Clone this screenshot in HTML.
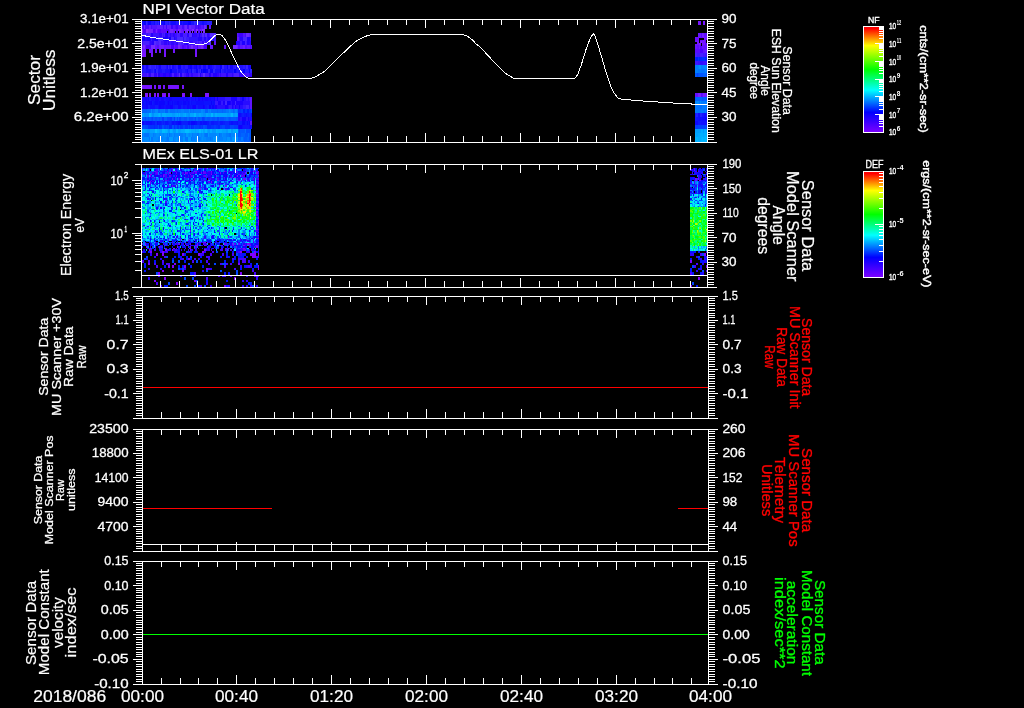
<!DOCTYPE html>
<html lang="en"><head><meta charset="utf-8"><title>MEx ASPERA-3 summary plot 2018/086</title>
<style>
html,body{margin:0;padding:0;background:#000;}
body{width:1024px;height:708px;overflow:hidden;}
svg{display:block;will-change:transform;}
text{white-space:pre;}
</style></head><body>
<svg width="1024" height="708" viewBox="0 0 1024 708">
<rect width="1024" height="708" fill="#000"/>
<g shape-rendering="crispEdges" fill="none">
<path stroke="#1c14ff" stroke-width="4.00" d="M142.0 23.00H211.7"/>
<path stroke="#120aff" stroke-width="4.00" d="M142.0 23.00h2.0M154.0 23.00h1.0M161.0 23.00h3.0M171.0 23.00h2.0M173.0 23.00h3.0M179.0 23.00h3.0M183.0 23.00h2.0M185.0 23.00h3.0M202.0 23.00h1.0M203.0 23.00h1.0"/>
<path stroke="#0901ff" stroke-width="4.00" d="M144.0 23.00h2.0M148.0 23.00h3.0M159.0 23.00h2.0M164.0 23.00h1.0M188.0 23.00h3.0"/>
<path stroke="#2e26ff" stroke-width="4.00" d="M146.0 23.00h1.0M158.0 23.00h1.0M169.0 23.00h1.0M194.0 23.00h2.0"/>
<path stroke="#251dff" stroke-width="4.00" d="M155.0 23.00h2.0M165.0 23.00h3.0M198.0 23.00h2.0M207.0 23.00h3.0M210.0 23.00h1.7"/>
<path stroke="#5414ff" stroke-width="4.00" d="M142.0 27.00H207.4"/>
<path stroke="#4909ff" stroke-width="4.00" d="M142.0 27.00h2.0M145.0 27.00h2.0M147.0 27.00h2.0M151.0 27.00h1.0M163.0 27.00h1.0M175.0 27.00h1.0M182.0 27.00h2.0M187.0 27.00h2.0M195.0 27.00h1.0M196.0 27.00h1.0M199.0 27.00h2.0M203.0 27.00h1.0"/>
<path stroke="#6929ff" stroke-width="4.00" d="M144.0 27.00h1.0M185.0 27.00h2.0M189.0 27.00h2.0M204.0 27.00h2.0"/>
<path stroke="#5e1eff" stroke-width="4.00" d="M149.0 27.00h2.0M157.0 27.00h3.0M160.0 27.00h3.0M164.0 27.00h2.0M167.0 27.00h2.0M169.0 27.00h2.0M180.0 27.00h2.0M184.0 27.00h1.0M191.0 27.00h2.0M193.0 27.00h2.0"/>
<path stroke="#3e00ff" stroke-width="4.00" d="M166.0 27.00h1.0M171.0 27.00h2.0M176.0 27.00h2.0M198.0 27.00h1.0"/>
<path stroke="#6414ff" stroke-width="4.00" d="M208.6 27.00H211.0"/>
<path stroke="#6816ff" stroke-width="4.00" d="M142.0 31.00H205.0"/>
<path stroke="#802eff" stroke-width="4.00" d="M142.0 31.00h1.0M146.0 31.00h2.0M187.0 31.00h1.0M192.0 31.00h1.0M193.0 31.00h1.0M196.0 31.00h2.0M202.0 31.00h3.0"/>
<path stroke="#4f00ff" stroke-width="4.00" d="M143.0 31.00h3.0M153.0 31.00h2.0M158.0 31.00h2.0M160.0 31.00h1.0M167.0 31.00h2.0"/>
<path stroke="#7422ff" stroke-width="4.00" d="M148.0 31.00h2.0M150.0 31.00h2.0M152.0 31.00h1.0M156.0 31.00h1.0M170.0 31.00h3.0M178.0 31.00h1.0M179.0 31.00h2.0M185.0 31.00h2.0"/>
<path stroke="#5b09ff" stroke-width="4.00" d="M155.0 31.00h1.0M157.0 31.00h1.0M161.0 31.00h3.0M164.0 31.00h3.0M176.0 31.00h2.0M183.0 31.00h1.0M194.0 31.00h2.0M198.0 31.00h2.0"/>
<path stroke="#3c12ff" stroke-width="4.00" d="M142.0 35.00H216.0"/>
<path stroke="#481eff" stroke-width="4.00" d="M146.0 35.00h1.0M148.0 35.00h3.0M162.0 35.00h1.0M164.0 35.00h1.0M177.0 35.00h1.0M178.0 35.00h2.0M183.0 35.00h3.0M186.0 35.00h1.0"/>
<path stroke="#2300ff" stroke-width="4.00" d="M151.0 35.00h2.0M165.0 35.00h3.0M192.0 35.00h1.0M199.0 35.00h1.0"/>
<path stroke="#2f05ff" stroke-width="4.00" d="M159.0 35.00h2.0M161.0 35.00h1.0M170.0 35.00h1.0M173.0 35.00h2.0M180.0 35.00h1.0M181.0 35.00h1.0M182.0 35.00h1.0M187.0 35.00h2.0M193.0 35.00h1.0M194.0 35.00h3.0M207.0 35.00h2.0"/>
<path stroke="#542aff" stroke-width="4.00" d="M189.0 35.00h3.0M202.0 35.00h2.0M205.0 35.00h2.0M210.0 35.00h2.0M212.0 35.00h2.0M214.0 35.00h1.0M215.0 35.00h1.0"/>
<path stroke="#3010ff" stroke-width="4.00" d="M142.0 39.00H216.0"/>
<path stroke="#1700ff" stroke-width="4.00" d="M142.0 39.00h3.0M147.0 39.00h3.0M155.0 39.00h3.0M165.0 39.00h3.0M169.0 39.00h2.0"/>
<path stroke="#2303ff" stroke-width="4.00" d="M145.0 39.00h2.0M150.0 39.00h1.0M152.0 39.00h3.0M163.0 39.00h2.0M174.0 39.00h1.0M198.0 39.00h2.0M200.0 39.00h2.0M204.0 39.00h2.0M208.0 39.00h2.0M213.0 39.00h1.0"/>
<path stroke="#3c1cff" stroke-width="4.00" d="M151.0 39.00h1.0M186.0 39.00h3.0M202.0 39.00h2.0M206.0 39.00h1.0M212.0 39.00h1.0M214.0 39.00h2.0"/>
<path stroke="#4828ff" stroke-width="4.00" d="M158.0 39.00h2.0M160.0 39.00h3.0M171.0 39.00h1.0M172.0 39.00h2.0M177.0 39.00h3.0M180.0 39.00h3.0M184.0 39.00h2.0"/>
<path stroke="#3e12ff" stroke-width="4.00" d="M142.0 43.00H211.0"/>
<path stroke="#4a1eff" stroke-width="4.00" d="M143.0 43.00h1.0M144.0 43.00h3.0M147.0 43.00h2.0M156.0 43.00h2.0M158.0 43.00h1.0M181.0 43.00h3.0M188.0 43.00h1.0M197.0 43.00h1.0M199.0 43.00h3.0"/>
<path stroke="#3105ff" stroke-width="4.00" d="M150.0 43.00h2.0M164.0 43.00h3.0M168.0 43.00h1.0M171.0 43.00h1.0M172.0 43.00h2.0M176.0 43.00h2.0M184.0 43.00h2.0M190.0 43.00h1.0M191.0 43.00h2.0M202.0 43.00h2.0M205.0 43.00h1.0M207.0 43.00h1.0"/>
<path stroke="#2500ff" stroke-width="4.00" d="M152.0 43.00h2.0M186.0 43.00h2.0"/>
<path stroke="#562aff" stroke-width="4.00" d="M154.0 43.00h2.0M159.0 43.00h2.0M178.0 43.00h3.0M204.0 43.00h1.0M209.0 43.00h2.0"/>
<path stroke="#6214ff" stroke-width="4.00" d="M142.0 47.00H206.8"/>
<path stroke="#7729ff" stroke-width="4.00" d="M143.0 47.00h2.0M151.0 47.00h3.0M154.0 47.00h1.0M178.0 47.00h2.0M191.0 47.00h2.0M201.0 47.00h2.0"/>
<path stroke="#4c00ff" stroke-width="4.00" d="M146.0 47.00h2.0M148.0 47.00h2.0M150.0 47.00h1.0M171.0 47.00h2.0M173.0 47.00h1.0M182.0 47.00h2.0M187.0 47.00h2.0M197.0 47.00h1.0M204.0 47.00h2.8"/>
<path stroke="#5709ff" stroke-width="4.00" d="M157.0 47.00h2.0M175.0 47.00h2.0M177.0 47.00h1.0M184.0 47.00h2.0"/>
<path stroke="#6c1eff" stroke-width="4.00" d="M159.0 47.00h2.0M161.0 47.00h3.0M170.0 47.00h1.0M198.0 47.00h2.0M200.0 47.00h1.0"/>
<path stroke="#5414ff" stroke-width="4.00" d="M237.3 35.00H250.7"/>
<path stroke="#4909ff" stroke-width="4.00" d="M238.3 35.00h1.0M245.3 35.00h1.0"/>
<path stroke="#3e00ff" stroke-width="4.00" d="M239.3 35.00h2.0M241.3 35.00h2.0"/>
<path stroke="#6929ff" stroke-width="4.00" d="M246.3 35.00h3.0"/>
<path stroke="#5e1eff" stroke-width="4.00" d="M249.3 35.00h1.0M250.3 35.00h0.4"/>
<path stroke="#3210ff" stroke-width="4.00" d="M238.5 39.00H250.7"/>
<path stroke="#2705ff" stroke-width="4.00" d="M239.5 39.00h3.0"/>
<path stroke="#4725ff" stroke-width="4.00" d="M242.5 39.00h1.0M243.5 39.00h2.0M245.5 39.00h1.0"/>
<path stroke="#1c00ff" stroke-width="4.00" d="M246.5 39.00h3.0"/>
<path stroke="#320eff" stroke-width="4.00" d="M236.0 43.00H251.0"/>
<path stroke="#1c00ff" stroke-width="4.00" d="M236.0 43.00h1.0M242.0 43.00h3.0M247.0 43.00h2.0"/>
<path stroke="#2703ff" stroke-width="4.00" d="M237.0 43.00h1.0M238.0 43.00h2.0M249.0 43.00h2.0"/>
<path stroke="#3c18ff" stroke-width="4.00" d="M240.0 43.00h2.0M246.0 43.00h1.0"/>
<path stroke="#4723ff" stroke-width="4.00" d="M245.0 43.00h1.0"/>
<path stroke="#5c14ff" stroke-width="4.00" d="M233.0 47.00H252.0"/>
<path stroke="#7129ff" stroke-width="4.00" d="M233.0 47.00h3.0M236.0 47.00h1.0"/>
<path stroke="#661eff" stroke-width="4.00" d="M237.0 47.00h1.0M243.0 47.00h2.0"/>
<path stroke="#5109ff" stroke-width="4.00" d="M238.0 47.00h2.0M245.0 47.00h2.0M250.0 47.00h1.0"/>
<path stroke="#6414ff" stroke-width="4.00" d="M210.3 47.00H213.2"/>
<path stroke="#6414ff" stroke-width="4.00" d="M223.8 47.00H226.2"/>
<path stroke="#6414ff" stroke-width="4.00" d="M213.5 43.00H216.0"/>
<path stroke="#6414ff" stroke-width="4.00" d="M237.3 39.00H238.5"/>
<rect x="166.5" y="31.40" width="1.5" height="1.60" fill="#000"/>
<rect x="174.5" y="31.40" width="1.0" height="1.60" fill="#000"/>
<rect x="177.8" y="31.40" width="1.0" height="1.60" fill="#000"/>
<rect x="184" y="31.40" width="1" height="1.60" fill="#000"/>
<rect x="187.5" y="31.40" width="1.0" height="1.60" fill="#000"/>
<rect x="191" y="31.40" width="1" height="1.60" fill="#000"/>
<rect x="193" y="31.40" width="1" height="1.60" fill="#000"/>
<rect x="197" y="31.40" width="1" height="1.60" fill="#000"/>
<rect x="199.5" y="31.40" width="1.0" height="1.60" fill="#000"/>
<rect x="202" y="31.40" width="1" height="1.60" fill="#000"/>
<rect x="207.4" y="25.00" width="1.2" height="4.00" fill="#000"/>
<path stroke="#7014ff" stroke-width="4.00" d="M142.3 51.00H146.0"/>
<path stroke="#7014ff" stroke-width="4.00" d="M148.8 51.00H153.0"/>
<path stroke="#7014ff" stroke-width="4.00" d="M155.2 51.00H157.0"/>
<path stroke="#7014ff" stroke-width="4.00" d="M158.8 51.00H161.0"/>
<path stroke="#7014ff" stroke-width="4.00" d="M164.0 51.00H166.0"/>
<path stroke="#7014ff" stroke-width="4.00" d="M172.8 51.00H175.0"/>
<path stroke="#7014ff" stroke-width="4.00" d="M194.8 51.00H197.2"/>
<path stroke="#7814ff" stroke-width="4.00" d="M142.3 55.00H146.0"/>
<path stroke="#7814ff" stroke-width="4.00" d="M150.5 55.00H153.0"/>
<path stroke="#7814ff" stroke-width="4.00" d="M164.0 55.00H166.0"/>
<path stroke="#7814ff" stroke-width="4.00" d="M194.8 55.00H197.2"/>
<path stroke="#2210ff" stroke-width="4.00" d="M142.0 67.00H251.0"/>
<path stroke="#1705ff" stroke-width="4.00" d="M142.0 67.00h2.0M146.0 67.00h2.0M159.0 67.00h2.0M167.0 67.00h1.0M172.0 67.00h2.0M188.0 67.00h2.0M194.0 67.00h2.0M199.0 67.00h2.0M203.0 67.00h3.0M210.0 67.00h2.0M230.0 67.00h3.0M236.0 67.00h1.0M248.0 67.00h2.0M250.0 67.00h1.0"/>
<path stroke="#2c1aff" stroke-width="4.00" d="M144.0 67.00h1.0M145.0 67.00h1.0M148.0 67.00h1.0M151.0 67.00h2.0M153.0 67.00h2.0M157.0 67.00h1.0M161.0 67.00h3.0M164.0 67.00h2.0M176.0 67.00h2.0M181.0 67.00h2.0M185.0 67.00h1.0M186.0 67.00h2.0M201.0 67.00h2.0M206.0 67.00h2.0M214.0 67.00h2.0M228.0 67.00h2.0M233.0 67.00h2.0M237.0 67.00h2.0M243.0 67.00h2.0"/>
<path stroke="#3725ff" stroke-width="4.00" d="M149.0 67.00h2.0M155.0 67.00h1.0M168.0 67.00h1.0M171.0 67.00h1.0M222.0 67.00h2.0M235.0 67.00h1.0M246.0 67.00h2.0"/>
<path stroke="#0c00ff" stroke-width="4.00" d="M178.0 67.00h2.0M180.0 67.00h1.0M190.0 67.00h2.0M196.0 67.00h1.0M208.0 67.00h2.0M220.0 67.00h2.0M227.0 67.00h1.0"/>
<path stroke="#180eff" stroke-width="4.00" d="M142.0 71.00H251.9"/>
<path stroke="#2218ff" stroke-width="4.00" d="M143.0 71.00h3.0M151.0 71.00h2.0M162.0 71.00h1.0M163.0 71.00h2.0M182.0 71.00h1.0M183.0 71.00h2.0M188.0 71.00h1.0M189.0 71.00h2.0M194.0 71.00h2.0M199.0 71.00h1.0M222.0 71.00h2.0M226.0 71.00h1.0M233.0 71.00h1.0M237.0 71.00h2.0M240.0 71.00h1.0M245.0 71.00h2.0M247.0 71.00h2.0"/>
<path stroke="#2d23ff" stroke-width="4.00" d="M153.0 71.00h1.0M156.0 71.00h2.0M177.0 71.00h1.0M192.0 71.00h2.0M198.0 71.00h1.0M200.0 71.00h1.0M208.0 71.00h2.0M213.0 71.00h2.0M221.0 71.00h1.0M250.0 71.00h1.9"/>
<path stroke="#0d03ff" stroke-width="4.00" d="M155.0 71.00h1.0M187.0 71.00h1.0M191.0 71.00h1.0M196.0 71.00h1.0M197.0 71.00h1.0M206.0 71.00h2.0M210.0 71.00h2.0M212.0 71.00h1.0"/>
<path stroke="#0200ff" stroke-width="4.00" d="M170.0 71.00h2.0M201.0 71.00h1.0M203.0 71.00h3.0M220.0 71.00h1.0M234.0 71.00h2.0M243.0 71.00h2.0M249.0 71.00h1.0"/>
<path stroke="#4012ff" stroke-width="4.00" d="M142.0 75.00H251.9"/>
<path stroke="#4d1fff" stroke-width="4.00" d="M147.0 75.00h1.0M151.0 75.00h3.0M157.0 75.00h1.0M172.0 75.00h2.0M182.0 75.00h2.0M198.0 75.00h2.0M234.0 75.00h1.0M235.0 75.00h2.0M237.0 75.00h2.0"/>
<path stroke="#3204ff" stroke-width="4.00" d="M149.0 75.00h2.0M154.0 75.00h3.0M160.0 75.00h3.0M166.0 75.00h3.0M171.0 75.00h1.0M174.0 75.00h2.0M176.0 75.00h1.0M186.0 75.00h2.0M191.0 75.00h2.0M217.0 75.00h2.0M220.0 75.00h1.0M232.0 75.00h1.0M239.0 75.00h2.0M241.0 75.00h2.0M249.0 75.00h2.9"/>
<path stroke="#2400ff" stroke-width="4.00" d="M158.0 75.00h2.0M163.0 75.00h2.0M165.0 75.00h1.0M169.0 75.00h2.0M180.0 75.00h2.0M188.0 75.00h1.0M200.0 75.00h1.0M209.0 75.00h2.0M213.0 75.00h2.0M215.0 75.00h2.0M226.0 75.00h2.0"/>
<path stroke="#5b2dff" stroke-width="4.00" d="M179.0 75.00h1.0M203.0 75.00h2.0"/>
<path stroke="#7614ff" stroke-width="4.00" d="M142.3 87.00H151.7"/>
<path stroke="#7614ff" stroke-width="4.00" d="M154.0 87.00H155.8"/>
<path stroke="#7614ff" stroke-width="4.00" d="M158.2 87.00H160.9"/>
<path stroke="#7614ff" stroke-width="4.00" d="M163.0 87.00H164.8"/>
<path stroke="#7614ff" stroke-width="4.00" d="M168.0 87.00H178.7"/>
<path stroke="#7614ff" stroke-width="4.00" d="M182.0 87.00H184.0"/>
<path stroke="#7c14ff" stroke-width="4.00" d="M144.7 95.00H148.0"/>
<path stroke="#7c14ff" stroke-width="4.00" d="M149.1 95.00H150.8"/>
<path stroke="#7c14ff" stroke-width="4.00" d="M154.0 95.00H155.6"/>
<path stroke="#7c14ff" stroke-width="4.00" d="M157.0 95.00H158.8"/>
<path stroke="#7c14ff" stroke-width="4.00" d="M162.0 95.00H165.5"/>
<path stroke="#7c14ff" stroke-width="4.00" d="M168.0 95.00H170.0"/>
<path stroke="#7c14ff" stroke-width="4.00" d="M182.2 95.00H184.5"/>
<path stroke="#7c14ff" stroke-width="4.00" d="M190.0 95.00H191.8"/>
<path stroke="#7c14ff" stroke-width="4.00" d="M205.0 95.00H209.0"/>
<path stroke="#120aff" stroke-width="4.00" d="M142.0 99.00H215.0"/>
<path stroke="#1203ff" stroke-width="4.00" d="M145.0 99.00h2.0M155.0 99.00h1.0M156.0 99.00h2.0M158.0 99.00h1.0M161.0 99.00h2.0M163.0 99.00h1.0M169.0 99.00h3.0M183.0 99.00h1.0M186.0 99.00h2.0M195.0 99.00h1.0M205.0 99.00h3.0M210.0 99.00h1.0"/>
<path stroke="#1210ff" stroke-width="4.00" d="M147.0 99.00h1.0M154.0 99.00h1.0M159.0 99.00h2.0M164.0 99.00h2.0M194.0 99.00h1.0M196.0 99.00h1.0M197.0 99.00h1.0"/>
<path stroke="#1200ff" stroke-width="4.00" d="M148.0 99.00h1.0M198.0 99.00h2.0M202.0 99.00h1.0M214.0 99.00h1.0"/>
<path stroke="#1216ff" stroke-width="4.00" d="M149.0 99.00h2.0M190.0 99.00h1.0"/>
<path stroke="#280cff" stroke-width="4.00" d="M215.0 99.00H250.0"/>
<path stroke="#0f00ff" stroke-width="4.00" d="M217.0 99.00h1.0M242.0 99.00h2.0"/>
<path stroke="#3418ff" stroke-width="4.00" d="M225.0 99.00h1.0M226.0 99.00h3.0M229.0 99.00h1.0M230.0 99.00h1.0M237.0 99.00h1.0M238.0 99.00h2.0M246.0 99.00h2.0M249.0 99.00h1.0"/>
<path stroke="#1b00ff" stroke-width="4.00" d="M231.0 99.00h3.0M234.0 99.00h3.0"/>
<path stroke="#6014ff" stroke-width="4.00" d="M250.0 99.00H252.0"/>
<path stroke="#0c0cff" stroke-width="4.00" d="M142.0 103.00H215.0"/>
<path stroke="#0c12ff" stroke-width="4.00" d="M144.0 103.00h1.0M145.0 103.00h1.0M153.0 103.00h1.0M165.0 103.00h2.0M171.0 103.00h1.0M173.0 103.00h1.0M182.0 103.00h1.0M192.0 103.00h1.0M193.0 103.00h3.0M204.0 103.00h2.0M206.0 103.00h2.0M208.0 103.00h3.0M212.0 103.00h1.0"/>
<path stroke="#0c05ff" stroke-width="4.00" d="M146.0 103.00h1.0M149.0 103.00h2.0M155.0 103.00h3.0M159.0 103.00h2.0M161.0 103.00h3.0M164.0 103.00h1.0M172.0 103.00h1.0M177.0 103.00h2.0M183.0 103.00h3.0M188.0 103.00h1.0"/>
<path stroke="#0c00ff" stroke-width="4.00" d="M151.0 103.00h1.0M168.0 103.00h1.0M211.0 103.00h1.0"/>
<path stroke="#0c18ff" stroke-width="4.00" d="M152.0 103.00h1.0M190.0 103.00h1.0"/>
<path stroke="#280cff" stroke-width="4.00" d="M215.0 103.00H250.0"/>
<path stroke="#3418ff" stroke-width="4.00" d="M215.0 103.00h2.0M217.0 103.00h1.0M221.0 103.00h2.0"/>
<path stroke="#1b00ff" stroke-width="4.00" d="M218.0 103.00h2.0M220.0 103.00h1.0M223.0 103.00h2.0M230.0 103.00h1.0M232.0 103.00h3.0M236.0 103.00h2.0M238.0 103.00h1.0M239.0 103.00h3.0M242.0 103.00h1.0"/>
<path stroke="#4024ff" stroke-width="4.00" d="M225.0 103.00h2.0M235.0 103.00h1.0"/>
<path stroke="#0f00ff" stroke-width="4.00" d="M227.0 103.00h3.0"/>
<path stroke="#6014ff" stroke-width="4.00" d="M250.0 103.00H252.0"/>
<path stroke="#100eff" stroke-width="4.00" d="M142.0 107.00H215.0"/>
<path stroke="#1007ff" stroke-width="4.00" d="M146.0 107.00h2.0M161.0 107.00h1.0M162.0 107.00h2.0M166.0 107.00h2.0M168.0 107.00h2.0M178.0 107.00h3.0M187.0 107.00h2.0M192.0 107.00h1.0M204.0 107.00h1.0"/>
<path stroke="#101aff" stroke-width="4.00" d="M148.0 107.00h2.0M155.0 107.00h3.0M175.0 107.00h3.0M181.0 107.00h2.0M196.0 107.00h2.0M207.0 107.00h2.0"/>
<path stroke="#1001ff" stroke-width="4.00" d="M159.0 107.00h2.0M170.0 107.00h3.0M193.0 107.00h3.0M203.0 107.00h1.0M209.0 107.00h2.0M212.0 107.00h1.0M213.0 107.00h1.0"/>
<path stroke="#1014ff" stroke-width="4.00" d="M173.0 107.00h2.0M185.0 107.00h2.0M191.0 107.00h1.0M205.0 107.00h2.0M211.0 107.00h1.0"/>
<path stroke="#280cff" stroke-width="4.00" d="M215.0 107.00H250.0"/>
<path stroke="#1b00ff" stroke-width="4.00" d="M215.0 107.00h2.0M225.0 107.00h3.0M232.0 107.00h1.0M235.0 107.00h1.0"/>
<path stroke="#3418ff" stroke-width="4.00" d="M229.0 107.00h3.0M234.0 107.00h1.0M243.0 107.00h3.0"/>
<path stroke="#0f00ff" stroke-width="4.00" d="M239.0 107.00h1.0"/>
<path stroke="#4024ff" stroke-width="4.00" d="M246.0 107.00h3.0"/>
<path stroke="#6014ff" stroke-width="4.00" d="M250.0 107.00H252.0"/>
<path stroke="#0078ff" stroke-width="4.00" d="M142.0 111.00H237.9"/>
<path stroke="#0065ff" stroke-width="4.00" d="M142.0 111.00h1.0M143.0 111.00h1.0M144.0 111.00h3.0M165.0 111.00h3.0M205.0 111.00h3.0M217.0 111.00h1.0M222.0 111.00h1.0M233.0 111.00h1.0"/>
<path stroke="#006eff" stroke-width="4.00" d="M147.0 111.00h2.0M149.0 111.00h1.0M150.0 111.00h1.0M152.0 111.00h1.0M158.0 111.00h2.0M170.0 111.00h2.0M172.0 111.00h2.0M174.0 111.00h1.0M177.0 111.00h1.0M190.0 111.00h1.0M193.0 111.00h1.0M211.0 111.00h3.0M214.0 111.00h3.0M218.0 111.00h1.0M219.0 111.00h1.0M220.0 111.00h2.0M223.0 111.00h1.0M224.0 111.00h1.0M225.0 111.00h1.0M234.0 111.00h1.0M237.0 111.00h0.9"/>
<path stroke="#008aff" stroke-width="4.00" d="M151.0 111.00h1.0M155.0 111.00h3.0M189.0 111.00h1.0M201.0 111.00h2.0M229.0 111.00h1.0"/>
<path stroke="#0081ff" stroke-width="4.00" d="M164.0 111.00h1.0M168.0 111.00h2.0M181.0 111.00h3.0M203.0 111.00h2.0M208.0 111.00h1.0M210.0 111.00h1.0M230.0 111.00h1.0M235.0 111.00h2.0"/>
<path stroke="#0032ff" stroke-width="4.00" d="M237.9 111.00H252.0"/>
<path stroke="#003cff" stroke-width="4.00" d="M240.9 111.00h2.0"/>
<path stroke="#001cff" stroke-width="4.00" d="M242.9 111.00h2.0M246.9 111.00h2.0"/>
<path stroke="#0047ff" stroke-width="4.00" d="M250.9 111.00h1.1"/>
<path stroke="#00a4ff" stroke-width="4.00" d="M142.0 115.00H237.9"/>
<path stroke="#0091ff" stroke-width="4.00" d="M144.0 115.00h3.0M147.0 115.00h2.0M152.0 115.00h2.0M161.0 115.00h1.0M188.0 115.00h2.0M203.0 115.00h3.0"/>
<path stroke="#00b6ff" stroke-width="4.00" d="M149.0 115.00h2.0M159.0 115.00h1.0M194.0 115.00h2.0M211.0 115.00h2.0M231.0 115.00h2.0"/>
<path stroke="#00adff" stroke-width="4.00" d="M158.0 115.00h1.0M162.0 115.00h2.0M164.0 115.00h1.0M165.0 115.00h1.0M177.0 115.00h1.0M179.0 115.00h1.0M185.0 115.00h1.0M215.0 115.00h2.0"/>
<path stroke="#009aff" stroke-width="4.00" d="M172.0 115.00h3.0M178.0 115.00h1.0M180.0 115.00h3.0M186.0 115.00h2.0M196.0 115.00h3.0M201.0 115.00h2.0M208.0 115.00h3.0M213.0 115.00h2.0M227.0 115.00h3.0M233.0 115.00h2.0M237.0 115.00h0.9"/>
<path stroke="#0e14ff" stroke-width="4.00" d="M237.9 115.00H252.0"/>
<path stroke="#0e0aff" stroke-width="4.00" d="M238.9 115.00h2.0M245.9 115.00h1.0"/>
<path stroke="#0e1dff" stroke-width="4.00" d="M241.9 115.00h2.0M248.9 115.00h2.0M251.9 115.00h0.1"/>
<path stroke="#0e01ff" stroke-width="4.00" d="M250.9 115.00h1.0"/>
<path stroke="#0054ff" stroke-width="4.00" d="M142.0 119.00H237.9"/>
<path stroke="#0066ff" stroke-width="4.00" d="M142.0 119.00h1.0M175.0 119.00h2.0M178.0 119.00h1.0M187.0 119.00h2.0M196.0 119.00h2.0M226.0 119.00h2.0"/>
<path stroke="#005dff" stroke-width="4.00" d="M143.0 119.00h2.0M146.0 119.00h2.0M149.0 119.00h2.0M153.0 119.00h2.0M157.0 119.00h1.0M158.0 119.00h1.0M160.0 119.00h2.0M164.0 119.00h3.0M172.0 119.00h2.0M181.0 119.00h3.0M193.0 119.00h2.0M200.0 119.00h2.0M205.0 119.00h2.0M210.0 119.00h2.0M215.0 119.00h2.0M219.0 119.00h1.0M224.0 119.00h2.0M228.0 119.00h1.0M231.0 119.00h2.0M233.0 119.00h2.0M235.0 119.00h1.0"/>
<path stroke="#004aff" stroke-width="4.00" d="M145.0 119.00h1.0M152.0 119.00h1.0M167.0 119.00h3.0M177.0 119.00h1.0M179.0 119.00h2.0M195.0 119.00h1.0M204.0 119.00h1.0M217.0 119.00h1.0M218.0 119.00h1.0"/>
<path stroke="#0041ff" stroke-width="4.00" d="M162.0 119.00h2.0M170.0 119.00h2.0M174.0 119.00h1.0M202.0 119.00h2.0"/>
<path stroke="#1e0aff" stroke-width="4.00" d="M237.9 119.00H252.0"/>
<path stroke="#2713ff" stroke-width="4.00" d="M239.9 119.00h2.0M245.9 119.00h2.0"/>
<path stroke="#1400ff" stroke-width="4.00" d="M241.9 119.00h2.0M243.9 119.00h2.0M247.9 119.00h1.0"/>
<path stroke="#301cff" stroke-width="4.00" d="M251.9 119.00h0.1"/>
<path stroke="#0a16ff" stroke-width="4.00" d="M142.0 123.00H250.0"/>
<path stroke="#0a06ff" stroke-width="4.00" d="M142.0 123.00h2.0M178.0 123.00h3.0M191.0 123.00h1.0M192.0 123.00h3.0M242.0 123.00h3.0M247.0 123.00h1.0M249.0 123.00h1.0"/>
<path stroke="#0a0eff" stroke-width="4.00" d="M146.0 123.00h2.0M148.0 123.00h3.0M151.0 123.00h1.0M157.0 123.00h1.0M172.0 123.00h2.0M176.0 123.00h2.0M188.0 123.00h2.0M195.0 123.00h2.0M200.0 123.00h2.0M203.0 123.00h2.0M205.0 123.00h2.0M231.0 123.00h2.0M237.0 123.00h1.0"/>
<path stroke="#0a25ff" stroke-width="4.00" d="M155.0 123.00h2.0M162.0 123.00h1.0M164.0 123.00h1.0M169.0 123.00h2.0M209.0 123.00h2.0M218.0 123.00h2.0M225.0 123.00h2.0M227.0 123.00h2.0"/>
<path stroke="#0a1dff" stroke-width="4.00" d="M161.0 123.00h1.0M163.0 123.00h1.0M168.0 123.00h1.0M171.0 123.00h1.0M182.0 123.00h2.0M184.0 123.00h2.0M186.0 123.00h2.0M197.0 123.00h3.0M214.0 123.00h2.0M216.0 123.00h2.0M223.0 123.00h2.0M238.0 123.00h1.0M239.0 123.00h3.0"/>
<path stroke="#5a14ff" stroke-width="4.00" d="M250.0 123.00H252.0"/>
<path stroke="#003cff" stroke-width="4.00" d="M142.0 127.00H237.9"/>
<path stroke="#004eff" stroke-width="4.00" d="M142.0 127.00h3.0M162.0 127.00h2.0M172.0 127.00h2.0M203.0 127.00h2.0"/>
<path stroke="#0045ff" stroke-width="4.00" d="M145.0 127.00h3.0M158.0 127.00h1.0M166.0 127.00h1.0M168.0 127.00h1.0M175.0 127.00h2.0M179.0 127.00h1.0M183.0 127.00h2.0M188.0 127.00h1.0M190.0 127.00h1.0M194.0 127.00h1.0M205.0 127.00h2.0M222.0 127.00h3.0M230.0 127.00h2.0M232.0 127.00h2.0"/>
<path stroke="#0032ff" stroke-width="4.00" d="M148.0 127.00h3.0M151.0 127.00h3.0M155.0 127.00h2.0M157.0 127.00h1.0M160.0 127.00h2.0M174.0 127.00h1.0M177.0 127.00h2.0M180.0 127.00h3.0M185.0 127.00h3.0M189.0 127.00h1.0M192.0 127.00h1.0M193.0 127.00h1.0M199.0 127.00h2.0M202.0 127.00h1.0M211.0 127.00h3.0M216.0 127.00h2.0M225.0 127.00h2.0M227.0 127.00h1.0M228.0 127.00h2.0"/>
<path stroke="#0029ff" stroke-width="4.00" d="M154.0 127.00h1.0M159.0 127.00h1.0M169.0 127.00h3.0M191.0 127.00h1.0M207.0 127.00h2.0M209.0 127.00h1.0M210.0 127.00h1.0M218.0 127.00h2.0"/>
<path stroke="#100cff" stroke-width="4.00" d="M237.9 127.00H252.0"/>
<path stroke="#1000ff" stroke-width="4.00" d="M238.9 127.00h3.0"/>
<path stroke="#1015ff" stroke-width="4.00" d="M242.9 127.00h3.0M245.9 127.00h1.0M246.9 127.00h2.0"/>
<path stroke="#00acff" stroke-width="4.00" d="M142.0 131.00H237.9"/>
<path stroke="#00a2ff" stroke-width="4.00" d="M145.0 131.00h2.0M150.0 131.00h2.0M152.0 131.00h3.0M159.0 131.00h3.0M178.0 131.00h3.0M195.0 131.00h1.0M203.0 131.00h2.0M207.0 131.00h1.0M222.0 131.00h2.0M224.0 131.00h2.0"/>
<path stroke="#0099ff" stroke-width="4.00" d="M147.0 131.00h3.0M168.0 131.00h2.0M173.0 131.00h3.0M208.0 131.00h2.0M212.0 131.00h3.0M215.0 131.00h1.0M226.0 131.00h2.0M231.0 131.00h1.0M232.0 131.00h1.0"/>
<path stroke="#00beff" stroke-width="4.00" d="M155.0 131.00h2.0M162.0 131.00h3.0M185.0 131.00h2.0M187.0 131.00h2.0M199.0 131.00h2.0"/>
<path stroke="#00b5ff" stroke-width="4.00" d="M165.0 131.00h2.0M170.0 131.00h2.0M176.0 131.00h2.0M189.0 131.00h2.0M202.0 131.00h1.0M205.0 131.00h2.0M216.0 131.00h1.0M230.0 131.00h1.0M236.0 131.00h1.9"/>
<path stroke="#005aff" stroke-width="4.00" d="M237.9 131.00H251.0"/>
<path stroke="#0064ff" stroke-width="4.00" d="M237.9 131.00h1.0"/>
<path stroke="#004fff" stroke-width="4.00" d="M238.9 131.00h1.0M245.9 131.00h2.0M247.9 131.00h2.0"/>
<path stroke="#006fff" stroke-width="4.00" d="M244.9 131.00h1.0"/>
<path stroke="#0086ff" stroke-width="4.00" d="M142.0 135.00H237.9"/>
<path stroke="#007cff" stroke-width="4.00" d="M142.0 135.00h1.0M153.0 135.00h1.0M167.0 135.00h1.0M174.0 135.00h1.0M179.0 135.00h2.0M181.0 135.00h2.0M185.0 135.00h1.0M192.0 135.00h1.0M197.0 135.00h2.0M204.0 135.00h1.0M220.0 135.00h2.0M226.0 135.00h3.0"/>
<path stroke="#0073ff" stroke-width="4.00" d="M144.0 135.00h2.0M146.0 135.00h3.0M169.0 135.00h1.0M205.0 135.00h3.0M219.0 135.00h1.0M229.0 135.00h2.0M235.0 135.00h2.0"/>
<path stroke="#008fff" stroke-width="4.00" d="M150.0 135.00h3.0M156.0 135.00h2.0M158.0 135.00h1.0M161.0 135.00h2.0M164.0 135.00h2.0M166.0 135.00h1.0M168.0 135.00h1.0M172.0 135.00h1.0M173.0 135.00h1.0M188.0 135.00h1.0M190.0 135.00h2.0M199.0 135.00h2.0M202.0 135.00h2.0M216.0 135.00h1.0M217.0 135.00h2.0M222.0 135.00h1.0"/>
<path stroke="#0098ff" stroke-width="4.00" d="M186.0 135.00h2.0M208.0 135.00h1.0"/>
<path stroke="#0064ff" stroke-width="4.00" d="M237.9 135.00H250.5"/>
<path stroke="#0059ff" stroke-width="4.00" d="M237.9 135.00h2.0M239.9 135.00h1.0M244.9 135.00h3.0M248.9 135.00h1.6"/>
<path stroke="#006eff" stroke-width="4.00" d="M247.9 135.00h1.0"/>
<path stroke="#008aff" stroke-width="4.00" d="M142.0 139.00H237.9"/>
<path stroke="#0080ff" stroke-width="4.00" d="M142.0 139.00h1.0M158.0 139.00h2.0M161.0 139.00h2.0M166.0 139.00h1.0M173.0 139.00h1.0M181.0 139.00h2.0M192.0 139.00h1.0M193.0 139.00h1.0M194.0 139.00h1.0M200.0 139.00h1.0M206.0 139.00h2.0M208.0 139.00h2.0M211.0 139.00h2.0M218.0 139.00h2.0M220.0 139.00h1.0M221.0 139.00h2.0M226.0 139.00h1.0M230.0 139.00h2.0"/>
<path stroke="#0077ff" stroke-width="4.00" d="M149.0 139.00h1.0M151.0 139.00h2.0M167.0 139.00h2.0M178.0 139.00h3.0M185.0 139.00h3.0M191.0 139.00h1.0M197.0 139.00h3.0M210.0 139.00h1.0"/>
<path stroke="#009cff" stroke-width="4.00" d="M150.0 139.00h1.0M169.0 139.00h2.0M171.0 139.00h2.0M188.0 139.00h3.0M215.0 139.00h3.0M233.0 139.00h2.0"/>
<path stroke="#0093ff" stroke-width="4.00" d="M160.0 139.00h1.0M176.0 139.00h2.0M183.0 139.00h2.0M202.0 139.00h1.0M213.0 139.00h2.0M227.0 139.00h3.0M232.0 139.00h1.0M235.0 139.00h1.0M237.0 139.00h0.9"/>
<path stroke="#0068ff" stroke-width="4.00" d="M237.9 139.00H250.5"/>
<path stroke="#007dff" stroke-width="4.00" d="M240.9 139.00h2.0"/>
<path stroke="#005dff" stroke-width="4.00" d="M243.9 139.00h3.0"/>
<path stroke="#0052ff" stroke-width="4.00" d="M248.9 139.00h1.6"/>
<path stroke="#008cff" stroke-width="1.00" d="M142.0 141.50H237.9"/>
<path stroke="#0082ff" stroke-width="1.00" d="M142.0 141.50h2.0M144.0 141.50h3.0M153.0 141.50h1.0M168.0 141.50h3.0M171.0 141.50h2.0M180.0 141.50h2.0M186.0 141.50h2.0"/>
<path stroke="#0079ff" stroke-width="1.00" d="M150.0 141.50h3.0M156.0 141.50h2.0M158.0 141.50h1.0M165.0 141.50h3.0M173.0 141.50h3.0M182.0 141.50h1.0M233.0 141.50h1.0M236.0 141.50h1.9"/>
<path stroke="#0095ff" stroke-width="1.00" d="M154.0 141.50h2.0M190.0 141.50h1.0M198.0 141.50h2.0M210.0 141.50h2.0M218.0 141.50h3.0M221.0 141.50h3.0M228.0 141.50h2.0"/>
<path stroke="#009eff" stroke-width="1.00" d="M183.0 141.50h3.0M188.0 141.50h2.0M191.0 141.50h1.0M197.0 141.50h1.0M208.0 141.50h2.0M217.0 141.50h1.0M226.0 141.50h2.0M234.0 141.50h1.0"/>
<path stroke="#0068ff" stroke-width="1.00" d="M237.9 141.50H250.5"/>
<path stroke="#0072ff" stroke-width="1.00" d="M237.9 141.50h3.0"/>
<path stroke="#007dff" stroke-width="1.00" d="M242.9 141.50h1.0"/>
<path stroke="#005dff" stroke-width="1.00" d="M243.9 141.50h1.0M246.9 141.50h2.0M249.9 141.50h0.6"/>
<path stroke="#7814ff" stroke-width="4.00" d="M698.0 23.00H701.0"/>
<path stroke="#7814ff" stroke-width="4.00" d="M703.0 23.00H705.0"/>
<path stroke="#6814ff" stroke-width="4.00" d="M697.5 35.00H707.0"/>
<path stroke="#6e1aff" stroke-width="4.00" d="M699.5 35.00h1.0M706.5 35.00h0.5"/>
<path stroke="#5b07ff" stroke-width="4.00" d="M700.5 35.00h1.0"/>
<path stroke="#7420ff" stroke-width="4.00" d="M701.5 35.00h2.0"/>
<path stroke="#610dff" stroke-width="4.00" d="M703.5 35.00h3.0"/>
<path stroke="#7010ff" stroke-width="4.00" d="M695.2 39.00H707.0"/>
<path stroke="#6909ff" stroke-width="4.00" d="M695.2 39.00h3.0M700.2 39.00h3.0"/>
<path stroke="#7616ff" stroke-width="4.00" d="M703.2 39.00h2.0"/>
<path stroke="#6e10ff" stroke-width="4.00" d="M695.2 43.00H707.0"/>
<path stroke="#7416ff" stroke-width="4.00" d="M697.2 43.00h2.0M702.2 43.00h3.0"/>
<path stroke="#7a1cff" stroke-width="4.00" d="M699.2 43.00h3.0"/>
<path stroke="#6103ff" stroke-width="4.00" d="M705.2 43.00h1.8"/>
<path stroke="#600cff" stroke-width="4.00" d="M695.2 47.00H707.0"/>
<path stroke="#6612ff" stroke-width="4.00" d="M695.2 47.00h2.0M702.2 47.00h2.0"/>
<path stroke="#6c18ff" stroke-width="4.00" d="M699.2 47.00h1.0"/>
<path stroke="#5905ff" stroke-width="4.00" d="M700.2 47.00h2.0"/>
<path stroke="#580cff" stroke-width="4.00" d="M695.2 51.00H707.0"/>
<path stroke="#4b00ff" stroke-width="4.00" d="M700.2 51.00h2.0M702.2 51.00h1.0"/>
<path stroke="#5e12ff" stroke-width="4.00" d="M703.2 51.00h2.0"/>
<path stroke="#6418ff" stroke-width="4.00" d="M705.2 51.00h1.8"/>
<path stroke="#3c12ff" stroke-width="4.00" d="M695.2 55.00H707.0"/>
<path stroke="#481eff" stroke-width="4.00" d="M695.2 55.00h2.0M700.2 55.00h3.0"/>
<path stroke="#4218ff" stroke-width="4.00" d="M697.2 55.00h3.0M703.2 55.00h2.0"/>
<path stroke="#0028ff" stroke-width="4.00" d="M695.2 59.00H707.0"/>
<path stroke="#001bff" stroke-width="4.00" d="M696.2 59.00h2.0"/>
<path stroke="#0034ff" stroke-width="4.00" d="M698.2 59.00h1.0"/>
<path stroke="#0021ff" stroke-width="4.00" d="M699.2 59.00h1.0M705.2 59.00h1.8"/>
<path stroke="#002eff" stroke-width="4.00" d="M702.2 59.00h3.0"/>
<path stroke="#3812ff" stroke-width="4.00" d="M695.2 63.00H707.0"/>
<path stroke="#3e18ff" stroke-width="4.00" d="M695.2 63.00h1.0M696.2 63.00h2.0"/>
<path stroke="#310bff" stroke-width="4.00" d="M700.2 63.00h3.0"/>
<path stroke="#0086ff" stroke-width="4.00" d="M695.2 67.00H707.0"/>
<path stroke="#007fff" stroke-width="4.00" d="M695.2 67.00h3.0M701.2 67.00h2.0"/>
<path stroke="#0092ff" stroke-width="4.00" d="M699.2 67.00h2.0"/>
<path stroke="#0080ff" stroke-width="4.00" d="M695.2 71.00H707.0"/>
<path stroke="#0079ff" stroke-width="4.00" d="M698.2 71.00h2.0M700.2 71.00h1.0"/>
<path stroke="#0073ff" stroke-width="4.00" d="M701.2 71.00h2.0M703.2 71.00h2.0M706.2 71.00h0.8"/>
<path stroke="#0054ff" stroke-width="4.00" d="M695.2 75.00H707.0"/>
<path stroke="#005aff" stroke-width="4.00" d="M695.2 75.00h2.0M699.2 75.00h1.0"/>
<path stroke="#0047ff" stroke-width="4.00" d="M697.2 75.00h1.0"/>
<path stroke="#0060ff" stroke-width="4.00" d="M703.2 75.00h3.0"/>
<path stroke="#6c14ff" stroke-width="4.00" d="M695.2 95.00H707.0"/>
<path stroke="#650dff" stroke-width="4.00" d="M695.2 95.00h2.0M697.2 95.00h1.0M702.2 95.00h1.0"/>
<path stroke="#7820ff" stroke-width="4.00" d="M698.2 95.00h3.0M703.2 95.00h1.0"/>
<path stroke="#5f07ff" stroke-width="4.00" d="M701.2 95.00h1.0"/>
<path stroke="#721aff" stroke-width="4.00" d="M704.2 95.00h2.0M706.2 95.00h0.8"/>
<path stroke="#0064ff" stroke-width="4.00" d="M695.2 99.00H707.0"/>
<path stroke="#0057ff" stroke-width="4.00" d="M695.2 99.00h1.0M702.2 99.00h1.0"/>
<path stroke="#005dff" stroke-width="4.00" d="M703.2 99.00h2.0M705.2 99.00h1.8"/>
<path stroke="#0086ff" stroke-width="4.00" d="M695.2 103.00H707.0"/>
<path stroke="#008cff" stroke-width="4.00" d="M697.2 103.00h2.0M700.2 103.00h1.0"/>
<path stroke="#0079ff" stroke-width="4.00" d="M699.2 103.00h1.0M701.2 103.00h3.0M704.2 103.00h2.0"/>
<path stroke="#007aff" stroke-width="4.00" d="M695.2 107.00H707.0"/>
<path stroke="#0073ff" stroke-width="4.00" d="M696.2 107.00h1.0M697.2 107.00h3.0M706.2 107.00h0.8"/>
<path stroke="#006dff" stroke-width="4.00" d="M700.2 107.00h2.0"/>
<path stroke="#0076ff" stroke-width="4.00" d="M695.2 111.00H707.0"/>
<path stroke="#007cff" stroke-width="4.00" d="M695.2 111.00h1.0M701.2 111.00h2.0"/>
<path stroke="#006fff" stroke-width="4.00" d="M704.2 111.00h1.0M706.2 111.00h0.8"/>
<path stroke="#1614ff" stroke-width="4.00" d="M695.2 115.00H707.0"/>
<path stroke="#2220ff" stroke-width="4.00" d="M696.2 115.00h2.0M700.2 115.00h2.0"/>
<path stroke="#0f0dff" stroke-width="4.00" d="M698.2 115.00h2.0M704.2 115.00h2.0"/>
<path stroke="#1c1aff" stroke-width="4.00" d="M706.2 115.00h0.8"/>
<path stroke="#0c0cff" stroke-width="4.00" d="M695.2 119.00H707.0"/>
<path stroke="#0c18ff" stroke-width="4.00" d="M695.2 119.00h2.0"/>
<path stroke="#0c12ff" stroke-width="4.00" d="M697.2 119.00h1.0M698.2 119.00h1.0M701.2 119.00h1.0"/>
<path stroke="#0c05ff" stroke-width="4.00" d="M705.2 119.00h1.0"/>
<path stroke="#0e10ff" stroke-width="4.00" d="M695.2 123.00H707.0"/>
<path stroke="#0e09ff" stroke-width="4.00" d="M695.2 123.00h3.0"/>
<path stroke="#0e16ff" stroke-width="4.00" d="M698.2 123.00h3.0M706.2 123.00h0.8"/>
<path stroke="#003eff" stroke-width="4.00" d="M695.2 127.00H707.0"/>
<path stroke="#0044ff" stroke-width="4.00" d="M698.2 127.00h2.0M703.2 127.00h1.0M705.2 127.00h1.8"/>
<path stroke="#00a0ff" stroke-width="4.00" d="M695.2 131.00H707.0"/>
<path stroke="#00acff" stroke-width="4.00" d="M701.2 131.00h2.0M704.2 131.00h1.0M705.2 131.00h1.0"/>
<path stroke="#0099ff" stroke-width="4.00" d="M703.2 131.00h1.0"/>
<path stroke="#00a6ff" stroke-width="4.00" d="M706.2 131.00h0.8"/>
<path stroke="#00b0ff" stroke-width="4.00" d="M695.2 135.00H707.0"/>
<path stroke="#00a9ff" stroke-width="4.00" d="M695.2 135.00h1.0M698.2 135.00h2.0M703.2 135.00h1.0"/>
<path stroke="#00a3ff" stroke-width="4.00" d="M696.2 135.00h2.0"/>
<path stroke="#00b4ff" stroke-width="4.00" d="M695.2 139.00H707.0"/>
<path stroke="#00adff" stroke-width="4.00" d="M698.2 139.00h1.0M699.2 139.00h2.0"/>
<path stroke="#00baff" stroke-width="4.00" d="M702.2 139.00h1.0M705.2 139.00h1.8"/>
<path stroke="#00b4ff" stroke-width="1.00" d="M695.2 141.50H707.0"/>
<path stroke="#00a7ff" stroke-width="1.00" d="M696.2 141.50h1.0M699.2 141.50h2.0"/>
<path stroke="#00adff" stroke-width="1.00" d="M705.2 141.50h1.0M706.2 141.50h0.8"/>
<rect x="698.5" y="38.00" width="5.5" height="2.4" fill="#000"/>
<rect x="698.5" y="40.00" width="1.6" height="3.2" fill="#000"/>
<rect x="695.2" y="41.50" width="1.5" height="2" fill="#000"/>
<rect x="701" y="42.50" width="1.2" height="3" fill="#000"/>
<rect x="706" y="40.00" width="1" height="3" fill="#000"/>
<g transform="scale(0.05)" fill="none" stroke-width="29">
<path stroke="#4900ff" d="M2840 3374h26m1014 0h26m104 0h26m260 0h26m702 0h26M3126 3403h26m26 0h26m676 0h26m988 0h26M2944 3432h26m26 0h26m104 0h26m702 0h26m78 0h26m104 0h26m52 0h26m312 0h26m78 0h26m364 0h26m52 0h26m26 0h26M2892 3462h26m130 0h26m26 0h26m208 0h26m286 0h26m104 0h26m26 0h26m598 0h26m78 0h26m260 0h26m286 0h18M2866 3490h26m208 0h52m26 0h26m156 0h26m312 0h26m598 0h26m702 0h26m52 0h26M3204 3520h26m78 0h26m416 0h26m286 0h26m52 0h26m364 0h26m312 0h26M2944 3548h26m52 0h52m26 0h26m130 0h26m26 0h26m26 0h26m312 0h26m260 0h26m208 0h26M3490 3578h26m52 0h26m286 0h26m260 0h52m130 0h26m754 0h44M3074 3606h26m130 0h26m78 0h52m156 0h26m156 0h26m286 0h26m26 0h26M3048 3636h26m1560 0h26m468 0h26M3334 3664h26m156 0h26m234 0h26m312 0h26m78 0h26m104 0h26m26 0h26m26 0h26m598 0h26M2996 3693h26m338 0h26m130 0h26M3542 3722h26m1560 0h26M3308 3752h26M4114 3780h26m364 0h26M5128 3810h26M2944 3868h26M3516 3896h26m1586 0h26M4062 3954h26m1066 0h18M3802 3983h26M3308 4042h26M5154 4070h18M5128 4100h26M5128 4186h26M2996 4274h26m2106 0h26M5154 4332h18M5154 4506h18M5128 4534h26M3802 4564h26m1300 0h26M3100 4622h26m2002 0h26M3490 4766h26m572 0h26M3672 4796h26m858 0h26m208 0h26M3256 4824h26m156 0h26M3438 4854h26m130 0h26m52 0h26m624 0h26m806 0h18M2840 4882h26m390 0h26m156 0h26m26 0h26m702 0h26m650 0h26m78 0h26M3308 4912h26m416 0h26m442 0h26m390 0h26m494 0h18M3204 4940h26m676 0h26M3178 4970h26m104 0h26m546 0h26m338 0h26m156 0h26m390 0h26M2996 4998h52m52 0h26m234 0h26m104 0h52m572 0h26m78 0h26m182 0h26m52 0h26m26 0h26m26 0h26"/>
<path stroke="#007aff" d="M2866 3374h26m52 0h26m52 0h26m26 0h26m52 0h26m52 0h26m52 0h52m572 0h26m104 0h26m286 0h26m78 0h26m78 0h52m364 0h26m26 0h26M2892 3403h26m26 0h26m182 0h26m26 0h52m416 0h26m26 0h26m26 0h26m26 0h26m338 0h26m78 0h26m104 0h52m260 0h78m156 0h26m52 0h26m26 0h26M3048 3432h26m104 0h26m390 0h26m78 0h26m156 0h26m520 0h52m52 0h26M2970 3462h26m156 0h26m416 0h26m702 0h26m572 0h26m26 0h26m104 0h26M2840 3490h26m52 0h26m208 0h26m494 0h26m858 0h26m78 0h26M2840 3520h52m156 0h26m780 0h26m442 0h26m78 0h26m104 0h26m52 0h26M2918 3548h26m130 0h26m572 0h26m832 0h26M3126 3578h52m572 0h26m52 0h26m104 0h26m338 0h26m78 0h26m130 0h52m286 0h26m52 0h26M2866 3606h26m208 0h26m26 0h26m78 0h26m130 0h26m26 0h26m182 0h26m208 0h26m598 0h26m182 0h26m78 0h26M2918 3636h26m364 0h26m78 0h26m52 0h26m312 0h26m78 0h26m26 0h26m260 0h26m208 0h26m130 0h26m104 0h26m104 0h52m26 0h26M3204 3664h52m286 0h26m390 0h26m26 0h26m26 0h26m104 0h26m104 0h26m182 0h26m26 0h26m78 0h26M3100 3693h26m78 0h52m26 0h26m182 0h26m260 0h26m130 0h26m182 0h26m26 0h26m26 0h52m416 0h26m260 0h26M2840 3722h26m104 0h26m78 0h26m286 0h26m260 0h52m26 0h78m104 0h52m78 0h26m520 0h26m78 0h52m156 0h26M2944 3752h26m104 0h26m104 0h26m182 0h52m104 0h52m104 0h26m208 0h26m130 0h26m104 0h52m130 0h26m26 0h26m182 0h26M2996 3780h26m104 0h26m52 0h26m52 0h52m208 0h26m52 0h26m104 0h52m52 0h26m78 0h26m26 0h26m26 0h26M2892 3810h26m754 0h52m26 0h26m338 0h26m78 0h26m260 0h26M3672 3838h26m78 0h26m26 0h52m286 0h52m832 0h26M2840 3868h26m572 0h26m208 0h26m104 0h26m156 0h26m78 0h26m156 0h26m832 0h26M2866 3896h26m520 0h26m338 0h26m260 0h26M2944 3926h52m208 0h26m104 0h26m130 0h26m208 0h26m26 0h52m26 0h26M2944 3954h26m78 0h26m234 0h26m78 0h26m26 0h26m156 0h26m208 0h26M3334 3983h26m182 0h26m156 0h26m702 0h26M2970 4012h26m312 0h26m104 0h26m52 0h26m52 0h26m260 0h26m728 0h26M2970 4042h52m338 0h26m234 0h26m156 0h26m130 0h26M2840 4070h52m338 0h78m26 0h26m78 0h26m52 0h26m208 0h52m182 0h26M2892 4100h26m182 0h26m26 0h26m156 0h26m78 0h26m26 0h26m52 0h26M3100 4128h52m286 0h26m338 0h26m182 0h26M2866 4158h26m78 0h52m130 0h26m1898 0h26M2944 4186h26m52 0h26m130 0h26m286 0h26m104 0h52m78 0h26m182 0h26m234 0h26m910 0h18M3282 4216h26m416 0h78m286 0h26M2944 4244h26m156 0h26m130 0h26m390 0h26m234 0h26M3022 4274h26m52 0h26m676 0h26m182 0h26m26 0h26M2996 4302h26m650 0h26m104 0h26m338 0h26M2918 4332h26m312 0h26m260 0h26m702 0h26m78 0h26M2892 4360h26m52 0h26m858 0h26m104 0h26M3126 4390h26m26 0h52M3022 4418h26m52 0h26m130 0h26m130 0h26m676 0h26M3204 4448h26m78 0h52m78 0h26m26 0h26m234 0h26m182 0h26m52 0h26M3490 4476h26m182 0h26m78 0h26M3022 4506h26m130 0h26m78 0h26m26 0h52m416 0h26m78 0h26m130 0h26m312 0h26M3074 4534h52m468 0h26m182 0h26m104 0h26m78 0h26m286 0h26m390 0h26M3100 4564h26m858 0h26m234 0h26M2840 4592h26m442 0h52m26 0h26m26 0h26m234 0h26m26 0h52m390 0h26m156 0h26m78 0h26m260 0h26M2918 4622h26m182 0h26m52 0h26m390 0h26m416 0h26m286 0h26m104 0h26m234 0h26m78 0h26m104 0h26M2996 4650h26m78 0h26m156 0h26m130 0h26m312 0h26m52 0h26m156 0h26m702 0h26m78 0h52m52 0h26m78 0h26M2892 4680h26m416 0h26m312 0h26m364 0h52m104 0h26m520 0h26m26 0h26M3256 4708h26m130 0h26m546 0h26m104 0h26m260 0h26M2944 4737h26m416 0h26m26 0h26m312 0h26m52 0h26m26 0h52m104 0h26m26 0h26m156 0h26m78 0h26m52 0h26m78 0h26m104 0h52m130 0h26m52 0h26m26 0h26M2840 4766h52m130 0h26m52 0h26m52 0h26m130 0h26m26 0h26m104 0h26m208 0h26m260 0h26m52 0h26m26 0h26m234 0h26m208 0h26m156 0h26m52 0h52M3048 4796h26m104 0h52m104 0h26m52 0h26m338 0h26m26 0h26m26 0h26m26 0h26m52 0h26m182 0h26m234 0h26m234 0h26m182 0h26M2970 4824h26m156 0h52m130 0h26m312 0h26m130 0h26m130 0h26m572 0h26m468 0h26M2866 4854h26m130 0h26m182 0h26m312 0h26m104 0h26m182 0h26m442 0h26m260 0h26m286 0h52m52 0h52M2866 4882h26m156 0h26m1222 0h26m338 0h26M2892 4912h26m754 0h26m286 0h26m520 0h26m390 0h26M2944 4940h26m910 0h26m26 0h26m364 0h26m260 0h26m182 0h26M3282 4970h26m1014 0h26m338 0h26m338 0h26M4530 4998h26"/>
<path stroke="#1100ff" d="M2892 3374h26m338 0h26m208 0h26m78 0h26m286 0h26M3334 3403h26m260 0h26m208 0h26m78 0h52m78 0h26m156 0h26m26 0h52M2840 3432h26m416 0h26m104 0h26m208 0h52m130 0h26m130 0h26m234 0h26m78 0h26m416 0h26m78 0h26m104 0h26M3178 3462h26m52 0h52m182 0h26m26 0h52m78 0h26m52 0h26m182 0h52m26 0h26m182 0h26m104 0h26m104 0h26m78 0h26m156 0h52m156 0h52M3074 3490h26m104 0h52m130 0h104m26 0h26m26 0h26m260 0h52m26 0h52m260 0h52m130 0h78m130 0h26m52 0h26m156 0h26m104 0h26m26 0h26M3074 3520h104m52 0h26m78 0h26m78 0h26m26 0h26m26 0h52m78 0h26m286 0h52m182 0h26m52 0h26m156 0h52m52 0h26m78 0h26m260 0h26M2840 3548h26m312 0h26m260 0h26m26 0h26m52 0h52m130 0h26m78 0h26m26 0h26m78 0h26m26 0h26m26 0h52m104 0h26m78 0h26m78 0h26m52 0h26m52 0h26m52 0h26m208 0h26M2944 3578h26m26 0h26m312 0h26m286 0h26m104 0h26m52 0h26m104 0h26m494 0h26m104 0h26M2970 3606h26m52 0h26m104 0h26m78 0h26m260 0h26m156 0h52m182 0h26m104 0h52m26 0h52m26 0h26m130 0h26m26 0h26m104 0h26m338 0h26m130 0h44M3022 3636h26m26 0h26m78 0h26m78 0h26m806 0h26m442 0h26m286 0h26M3048 3664h26m78 0h26m1248 0h26M2840 3693h26m390 0h26m26 0h26m78 0h26m936 0h26M3230 3722h26m156 0h26m156 0h26m624 0h26M3022 3752h26m78 0h26m104 0h26m52 0h26m130 0h26m832 0h26m182 0h26m52 0h26m468 0h44M2970 3780h26m104 0h26m676 0h26m312 0h26m182 0h26M3282 3810h26m468 0h26m390 0h26M3048 3838h26m572 0h26M4114 3868h26M2996 3926h26m390 0h26m1716 0h18M3100 3954h26m130 0h26M3100 3983h26m832 0h26m1170 0h18M3802 4012h26m1326 0h18M3204 4042h26M3308 4100h26m1820 0h18M3360 4128h26m208 0h26m338 0h52m1118 0h44M3126 4158h26m52 0h26m52 0h26m104 0h26m78 0h26m130 0h26M3256 4186h26m546 0h26M5128 4216h26M5154 4244h18M3490 4274h26m182 0h26m182 0h26m104 0h26M4010 4302h26m1118 0h18M5128 4332h26M3802 4360h52M5154 4390h18M2996 4418h26m52 0h26m182 0h26m130 0h26M3854 4448h26M3854 4476h26m182 0h26m1040 0h26M2866 4506h26m494 0h26m1716 0h26M3178 4564h26m52 0h26m936 0h26M3256 4592h26m520 0h26m130 0h26m676 0h26M3542 4622h26m1508 0h26m52 0h18M3126 4650h26m442 0h26m494 0h26m130 0h26m156 0h26m650 0h26M2996 4680h26m416 0h26m416 0h26m1248 0h18M3490 4708h26m260 0h52m52 0h26m338 0h26M3464 4737h26m26 0h26m52 0h26m624 0h26m806 0h52M2996 4766h26m52 0h26m858 0h26m260 0h26m520 0h26m208 0h26m26 0h26M3074 4796h26m806 0h26m26 0h26m390 0h26m130 0h26m598 0h18M3360 4824h26m416 0h26m78 0h26m260 0h26m156 0h26m442 0h26m260 0h44M2892 4854h26m208 0h26m52 0h26m104 0h26m182 0h26m260 0h26m156 0h26m130 0h52m78 0h26m26 0h26m104 0h26m624 0h26M2918 4882h52m26 0h52m52 0h26m598 0h26m208 0h26m624 0h26m390 0h26m52 0h52M3022 4912h26m182 0h26m208 0h26m52 0h26m234 0h26m26 0h52m52 0h26m52 0h26m104 0h52m26 0h26m52 0h26m390 0h26m52 0h26m182 0h26m26 0h26M3438 4940h26m104 0h26m52 0h26m26 0h26m468 0h26m78 0h26m312 0h26m208 0h78M3100 4970h26m104 0h26m832 0h78m52 0h26m286 0h26m182 0h26m260 0h26M2866 4998h26m338 0h26m130 0h26m156 0h26m546 0h26m494 0h26m26 0h26m26 0h26m182 0h26m52 0h26m26 0h26"/>
<path stroke="#00adff" d="M2918 3374h26m624 0h26m26 0h52m156 0h52m78 0h26m156 0h26m156 0h52m156 0h26m78 0h26m286 0h26M2866 3403h26m130 0h26m650 0h26m26 0h26m286 0h26m286 0h26m130 0h26M4972 3432h26M4530 3462h26m494 0h26M3594 3490h26m286 0h26m52 0h26m572 0h26m338 0h26M2918 3520h26m26 0h26m624 0h26m286 0h26m832 0h26M2892 3548h26m208 0h26m702 0h26m364 0h26M3204 3578h52m286 0h26m52 0h26m286 0h26m702 0h52m390 0h26M3932 3606h26m208 0h26m364 0h52m52 0h52m78 0h26M2866 3636h26m572 0h26m182 0h26m208 0h26m156 0h26m208 0h26m78 0h52m52 0h26m208 0h26m78 0h26m156 0h26M2944 3664h26m104 0h26m208 0h26m572 0h26m338 0h26m182 0h26m364 0h26m130 0h52M2892 3693h26m416 0h26m260 0h26m26 0h26m130 0h52m234 0h26m26 0h26m26 0h26m78 0h26m104 0h52m78 0h52m26 0h52m182 0h26M2866 3722h26m130 0h52m52 0h52m26 0h26m338 0h26m26 0h26m182 0h52m130 0h26m78 0h26m26 0h26m78 0h26m26 0h52m26 0h26m52 0h26m130 0h26M2840 3752h26m234 0h26m104 0h26m546 0h26m364 0h52m338 0h26m494 0h26M2866 3780h26m130 0h26m312 0h26m130 0h26m52 0h26m78 0h52m130 0h26m26 0h26m260 0h26m234 0h26M3178 3810h26m104 0h26m468 0h52m182 0h26m182 0h26m26 0h26m52 0h26m156 0h26m26 0h26M2840 3838h26m208 0h26m78 0h26m182 0h26m26 0h26m52 0h52m182 0h26m130 0h26m286 0h26m104 0h52m286 0h26m26 0h26M2892 3868h26m182 0h26m130 0h52m234 0h26m286 0h26m156 0h26m182 0h26m104 0h26m156 0h26M3178 3896h26m26 0h26m390 0h26m156 0h52m26 0h26m468 0h26m78 0h26M2892 3926h26m390 0h26m52 0h26m208 0h26m52 0h26m312 0h26m26 0h26m26 0h52M2892 3954h26m78 0h26m104 0h26m182 0h26m130 0h26m78 0h26m78 0h26m78 0h26m468 0h26M2892 3983h26m260 0h26m286 0h26m78 0h26m26 0h26m26 0h26m130 0h26m26 0h26m260 0h26M3386 4012h26m260 0h26m676 0h26M3126 4042h52m156 0h26m130 0h26m26 0h26m104 0h26m182 0h26m78 0h26m52 0h26m598 0h26M2892 4070h26m52 0h52m52 0h52m338 0h26m156 0h52m26 0h26m52 0h26m26 0h104M2944 4100h26m156 0h26m26 0h26m26 0h26m26 0h26m78 0h26m104 0h26m78 0h26m26 0h26m78 0h26m26 0h26m26 0h52m26 0h26m1092 0h26M2944 4128h26m26 0h26m26 0h26m104 0h104m52 0h26m130 0h52m312 0h52M2840 4158h26m78 0h26m130 0h26m104 0h26m624 0h52m104 0h26m26 0h26M2970 4186h26m780 0h26m234 0h26m78 0h26m234 0h26M2996 4216h26m312 0h26m468 0h26m182 0h52m182 0h26M2996 4244h26m78 0h26m78 0h26m26 0h26m234 0h26m130 0h26m104 0h26m208 0h52m988 0h26M2944 4274h26m208 0h26m312 0h26m572 0h26M3152 4302h52m338 0h26m416 0h26m26 0h26M2840 4332h26m78 0h26m364 0h26m468 0h52m52 0h26m78 0h26m338 0h26M2840 4360h26m286 0h26m104 0h26m130 0h26m182 0h26m26 0h26m182 0h26m130 0h26M2840 4390h26m52 0h26m104 0h26m26 0h26m208 0h26m390 0h26M2944 4418h26m364 0h52m104 0h26m26 0h26m130 0h26m78 0h26m1248 0h26M2996 4448h26m104 0h26m468 0h26m52 0h26M2840 4476h52m234 0h52m208 0h26m182 0h52m234 0h26m494 0h26m572 0h26m26 0h26M2970 4506h26m104 0h78m442 0h52m78 0h26m182 0h26m26 0h26m104 0h26m26 0h26m494 0h26m130 0h26m208 0h26M2918 4534h26m208 0h26m156 0h26m52 0h52m260 0h52m286 0h26M2918 4564h52m26 0h26m416 0h26m52 0h52m78 0h26m52 0h52m754 0h26m26 0h26m260 0h26M3074 4592h26m130 0h26m260 0h26m130 0h26m234 0h26m26 0h26m78 0h26m156 0h26m676 0h26m52 0h52M2840 4622h26m26 0h26m26 0h26m286 0h26m156 0h26m494 0h26m182 0h78m208 0h26m78 0h26m130 0h26m104 0h26m26 0h26M2840 4650h26m312 0h26m52 0h26m104 0h26m338 0h26m52 0h26m234 0h26m312 0h26m26 0h52m520 0h26M3048 4680h26m78 0h52m182 0h26m312 0h52m130 0h26m208 0h26m312 0h52m208 0h26m130 0h26m104 0h26M2918 4708h26m130 0h52m78 0h26m104 0h26m234 0h26m312 0h26m182 0h26m26 0h52m130 0h26m52 0h26m156 0h26m260 0h26m78 0h78M3022 4737h26m26 0h26m156 0h26m78 0h26m182 0h26m286 0h26m52 0h26m52 0h26m78 0h52m78 0h26m234 0h26m78 0h26m26 0h26m78 0h26m52 0h26m52 0h26M2892 4766h26m52 0h26m234 0h26m156 0h26m104 0h26m104 0h52m182 0h26m208 0h26m156 0h26m52 0h26m52 0h52m26 0h52m26 0h26m338 0h26M2866 4796h52m52 0h26m104 0h26m104 0h26m130 0h26m156 0h26m26 0h26m208 0h26m104 0h26m312 0h26m286 0h26m104 0h26m234 0h26m52 0h26M2840 4824h26m182 0h26m624 0h26m286 0h26m208 0h26m260 0h26m104 0h26m234 0h26m78 0h26M3074 4854h26m260 0h26m858 0h26m442 0h26m52 0h52m52 0h52m78 0h26M4140 4882h26m286 0h26m260 0h26M3074 4940h26m494 0h26M4946 4970h26M2918 4998h26m1378 0h26"/>
<path stroke="#2d00ff" d="M2970 3374h26m182 0h26m884 0h26m52 0h26m26 0h26m26 0h26m442 0h26M3282 3403h26m52 0h26m26 0h26m52 0h52m52 0h26m182 0h26m858 0h26m156 0h26M3230 3432h52m26 0h26m26 0h26m130 0h52m364 0h26m234 0h26m442 0h26m130 0h26M2840 3462h26m572 0h26m338 0h26m52 0h26m208 0h104m416 0h26m52 0h26m26 0h26m78 0h26M2892 3490h26m26 0h26m520 0h26m130 0h26m52 0h26m286 0h26m104 0h52m182 0h26m182 0h26m52 0h26m78 0h26m26 0h26m104 0h26M3412 3520h26m260 0h26m78 0h26m52 0h26m260 0h52m390 0h26m78 0h26M3724 3548h52m26 0h52m338 0h26m130 0h26m78 0h26m286 0h26m364 0h18M3100 3578h26m52 0h26m78 0h26m52 0h26m130 0h26m494 0h26m52 0h26m78 0h52m442 0h26m26 0h26m156 0h26m104 0h26M3620 3606h26m858 0h26m416 0h26m78 0h52M2892 3636h26m338 0h26m52 0h26m182 0h26m312 0h26m806 0h26m416 0h18M3126 3664h26m416 0h26m104 0h26m78 0h26m1300 0h26M2944 3693h26m104 0h26m962 0h26m208 0h26M2892 3722h26m182 0h26m338 0h52m468 0h26m286 0h26m260 0h26m546 0h18M2892 3752h26m364 0h26m1300 0h26M4452 3780h26m182 0h26m442 0h26M3984 3838h26M4010 3868h26M5154 3896h18M5128 3926h26M3542 3954h26m286 0h26M2944 3983h26m26 0h26m234 0h26m26 0h26M3750 4012h26m1352 0h26M3750 4042h26M3594 4100h26m364 0h26M5154 4158h18M3802 4186h26M4010 4332h26M3932 4360h26M3256 4390h26m416 0h26m260 0h26m26 0h26M3022 4476h26M2944 4534h26M3178 4592h26M5128 4680h26M3542 4708h26M2840 4737h26m416 0h26m234 0h26m130 0h26m364 0h26m104 0h26m806 0h26m78 0h18M3360 4766h26m988 0h26m312 0h26m234 0h26M4400 4796h26m26 0h26m104 0h26m52 0h26m312 0h26M3204 4824h26m494 0h26m26 0h26m338 0h26m156 0h26m364 0h26m52 0h26m130 0h26M2970 4854h26m780 0h26m234 0h26m208 0h26m338 0h26m104 0h26m52 0h26m182 0h26M3282 4882h26m208 0h52m78 0h26m416 0h26m442 0h26m286 0h26m26 0h26m130 0h26m52 0h18M2944 4912h26m130 0h26m494 0h26m182 0h26m156 0h26m78 0h26m416 0h26m26 0h26m260 0h26M2840 4940h26m130 0h26m78 0h26m1040 0h26m78 0h26m676 0h26m104 0h26m26 0h18M2944 4970h26m546 0h26m364 0h26m26 0h26m52 0h26m104 0h26m156 0h26m442 0h26m52 0h26M3074 4998h26m104 0h26m234 0h26m130 0h26m26 0h26m52 0h26m52 0h26m52 0h26m234 0h26m208 0h26m390 0h52m156 0h26"/>
<path stroke="#0046ff" d="M2996 3374h26m78 0h52m130 0h26m104 0h26m26 0h26m52 0h26m156 0h26m52 0h26m156 0h26m26 0h26m338 0h52m52 0h26m130 0h52m130 0h26m26 0h52m26 0h26m78 0h52m26 0h18M2840 3403h26m390 0h26m26 0h26m52 0h26m130 0h52m52 0h26m234 0h52m52 0h52m52 0h78m52 0h26m130 0h26m52 0h26m52 0h26m52 0h52m130 0h26m78 0h52m26 0h26M3022 3432h26m338 0h26m26 0h26m104 0h26m416 0h26m104 0h26m130 0h52m52 0h26m130 0h26m104 0h26m234 0h26m130 0h26M2918 3462h26m52 0h52m156 0h26m78 0h26m26 0h26m234 0h26m624 0h26m52 0h26m364 0h26M4010 3490h26m78 0h26m676 0h26M3282 3520h26m156 0h26m104 0h26m338 0h26m130 0h26m104 0h26m78 0h26m286 0h26m260 0h26m52 0h52m26 0h52M2970 3548h26m156 0h26m156 0h26m26 0h26m1014 0h26m104 0h26m52 0h26m182 0h52m26 0h26m52 0h52m52 0h52M2892 3578h52m26 0h26m52 0h52m208 0h26m338 0h78m156 0h26m78 0h26m26 0h52m182 0h26m156 0h26m52 0h26m156 0h26m26 0h26m26 0h26m104 0h26m26 0h26M2840 3606h26m26 0h52m260 0h26m416 0h26m286 0h26m26 0h26m26 0h26m156 0h26m26 0h52m26 0h52m286 0h26m130 0h26M2970 3636h26m208 0h52m104 0h52m26 0h26m52 0h26m78 0h26m104 0h26m78 0h26m78 0h26m26 0h26m104 0h26m182 0h52m78 0h26m52 0h26m26 0h26M2840 3664h26m156 0h26m52 0h26m130 0h52m104 0h52m26 0h26m78 0h26m26 0h52m52 0h26m52 0h52m286 0h26m104 0h26m182 0h26m26 0h26m130 0h52m26 0h26M2970 3693h26m52 0h26m104 0h26m234 0h52m52 0h26m130 0h52m234 0h26m26 0h26m26 0h26m234 0h26m26 0h52m52 0h26m286 0h52M2996 3722h26m624 0h26m364 0h26m130 0h26M3048 3752h26m104 0h26m312 0h26m104 0h26m26 0h26m26 0h52m52 0h52m78 0h52m26 0h26m78 0h26m182 0h26m650 0h26M3152 3780h26m156 0h26m78 0h26m442 0h26m104 0h26m130 0h26m364 0h26m78 0h26m312 0h26m104 0h18M2944 3810h26m26 0h26m26 0h26m130 0h26m26 0h26m52 0h26m26 0h26m78 0h26m26 0h26m338 0h26m234 0h26m208 0h26m260 0h26m26 0h26M3100 3838h26m130 0h26m52 0h26m442 0h26M3074 3868h26m234 0h26m130 0h26m182 0h26m910 0h26M3256 3896h26m26 0h78m78 0h26m312 0h26M2840 3926h26m390 0h26m156 0h26m104 0h26m520 0h26M2918 3954h26m78 0h26m156 0h26m208 0h26m52 0h26m78 0h26m728 0h26m728 0h26M2970 3983h26m52 0h26m312 0h52m338 0h26m260 0h26M3256 4012h26m702 0h52M2866 4042h26m52 0h26m130 0h26m390 0h26m364 0h26m1196 0h26M3204 4070h26m130 0h26m104 0h26m52 0h52M3256 4100h26m130 0h26m104 0h26m234 0h26m884 0h26M2840 4128h26m286 0h26m208 0h26M3256 4158h26m156 0h26m156 0h26m156 0h52m130 0h26M3048 4186h26m52 0h26m260 0h52M2944 4216h26m286 0h26m1300 0h26M2970 4244h26m182 0h26m234 0h78m208 0h26m624 0h26M2892 4274h26m338 0h26M3282 4302h26m26 0h26m260 0h26m104 0h26m312 0h26M2970 4332h26m572 0h26m78 0h26m182 0h26m286 0h26M3490 4360h52m494 0h26m1066 0h26M3672 4390h26m26 0h26m52 0h52M3464 4418h26m390 0h26M3074 4448h26m494 0h26m156 0h52m1300 0h26M3100 4476h26m624 0h26m260 0h26M3074 4506h26m1066 0h26m780 0h26M2840 4534h26m260 0h26m338 0h26m338 0h26m104 0h26M2892 4564h26m936 0h26m26 0h26m78 0h26m130 0h26m182 0h26m260 0h26m312 0h26m26 0h26M3646 4592h26m52 0h26m1040 0h26m104 0h26m78 0h26m104 0h18M3412 4622h26m130 0h52m52 0h26m156 0h52m442 0h26m208 0h26m494 0h26M3074 4650h26m858 0h26m78 0h26m208 0h26m52 0h26m156 0h26M2840 4680h26m234 0h26m78 0h52m338 0h26m182 0h26m26 0h26m52 0h26m572 0h26m156 0h26m130 0h26m78 0h26m78 0h26M3854 4708h26m208 0h26m156 0h26m468 0h26m78 0h26m234 0h26M2996 4737h26m104 0h26m26 0h26m130 0h26m442 0h26m520 0h26m234 0h26m130 0h26m130 0h26m52 0h26M2944 4766h26m182 0h26m390 0h26m286 0h26m104 0h26m26 0h26m130 0h26m26 0h26m52 0h26m676 0h26M3022 4796h26m78 0h26m104 0h52m156 0h26m208 0h26m78 0h26m208 0h52m26 0h26m26 0h26m104 0h26m104 0h26m52 0h26m312 0h26m104 0h26M2866 4824h26m26 0h52m26 0h26m468 0h26m130 0h26m390 0h78m78 0h26m182 0h52m78 0h26m26 0h52m104 0h26m26 0h26m26 0h52m78 0h26m78 0h26M3048 4854h26m78 0h26m78 0h78m52 0h52m26 0h26m26 0h26m78 0h26m234 0h26m494 0h26m26 0h26m208 0h26m156 0h26M3074 4882h26m208 0h26m52 0h26m832 0h26m260 0h26m26 0h26m104 0h26m52 0h26m26 0h26m182 0h26M2866 4912h26m390 0h26m52 0h26m910 0h26m78 0h26m78 0h26m312 0h26m234 0h26M3048 4940h26m156 0h26m494 0h26m364 0h26m182 0h26m312 0h26m286 0h26M3022 4970h26m1664 0h26m26 0h26m130 0h26M4946 4998h26"/>
<path stroke="#00e0ff" d="M3048 3374h26m130 0h26M4608 3403h26M3594 3578h26m910 0h26m260 0h26M4634 3606h26m260 0h26m52 0h26m78 0h26M3100 3636h26m26 0h26m1664 0h26m156 0h26M2866 3664h26m26 0h26m676 0h26m988 0h52m78 0h26m104 0h52m52 0h26m78 0h26M3022 3693h26m104 0h26m390 0h26m52 0h26m338 0h26m702 0h52m78 0h26M3308 3722h26m572 0h26m208 0h26m390 0h26m78 0h26m260 0h26m26 0h26m52 0h26M2866 3752h26m572 0h26m182 0h26m130 0h26m52 0h26m208 0h26m156 0h26m52 0h26m26 0h26m26 0h52m104 0h26m26 0h26m130 0h26M2918 3780h52m78 0h26m104 0h26m286 0h26m52 0h26m52 0h52m572 0h26m26 0h26m26 0h26m676 0h26M3594 3810h26m26 0h26m52 0h26m104 0h26m52 0h26m52 0h26m26 0h52M2944 3838h52m416 0h26m52 0h26m182 0h26m156 0h26m156 0h78m104 0h26m442 0h26m364 0h26M2996 3868h52m78 0h26m52 0h26m130 0h26m208 0h26m130 0h52m78 0h52m26 0h26m364 0h26m26 0h26m494 0h26M2892 3896h26m26 0h26m182 0h26m26 0h26m260 0h26m182 0h26m208 0h26m78 0h26m52 0h26M3048 3926h26m26 0h52m364 0h26m52 0h26m52 0h26m182 0h78m104 0h26m156 0h52m286 0h52M3152 3954h26m52 0h26m312 0h26m182 0h26m104 0h26m104 0h26m52 0h26m78 0h26M2840 3983h26m52 0h26m286 0h26m494 0h26m156 0h26m26 0h26m26 0h26m52 0h26M2918 4012h52m26 0h26m52 0h26m26 0h26m52 0h26m182 0h26m286 0h26m104 0h26m78 0h26m78 0h26m78 0h26M3022 4042h52m104 0h26m52 0h26m104 0h52m208 0h26m26 0h26m104 0h52m208 0h26m104 0h26m234 0h26m546 0h26M3152 4070h26m208 0h26m546 0h26m104 0h26m26 0h52m286 0h26m572 0h26M2918 4100h26m260 0h26m130 0h26m312 0h52m104 0h26m52 0h26m130 0h26M2892 4128h52m468 0h26m104 0h52m156 0h52m130 0h26m104 0h26m260 0h26m650 0h26m52 0h26M3334 4158h26m26 0h26m130 0h26m26 0h26m26 0h26m390 0h26m26 0h52m260 0h26M3204 4186h26m104 0h78m52 0h26m52 0h26m130 0h26m130 0h52m26 0h26m52 0h26m988 0h26M2918 4216h26m26 0h26m182 0h52m208 0h26m26 0h78m104 0h26m104 0h26m130 0h26m26 0h26m442 0h26M2840 4244h26m26 0h26m234 0h26m52 0h26m78 0h26m26 0h52m130 0h26m26 0h26m104 0h52m26 0h26m26 0h52m52 0h26M2840 4274h26m260 0h26m52 0h26m104 0h26m52 0h52m78 0h26m52 0h26m104 0h26m78 0h26m78 0h26M2892 4302h26m26 0h26m52 0h52m312 0h78m26 0h52m182 0h26m26 0h26m104 0h52m104 0h26m338 0h26m390 0h26M2892 4332h26m104 0h26m78 0h52m26 0h52m104 0h26m26 0h78m156 0h26m26 0h26m52 0h26m104 0h26m26 0h26m1014 0h26M2996 4360h26m78 0h52m260 0h26m104 0h52m182 0h26m364 0h26m182 0h26M2892 4390h26m78 0h26m338 0h52m26 0h26m26 0h26m260 0h26m104 0h26m26 0h26M2970 4418h26m130 0h52m130 0h26m182 0h26m234 0h26m26 0h52m104 0h26m26 0h26m182 0h26m780 0h26M2840 4448h26m26 0h26m26 0h26m52 0h26m104 0h26m208 0h26m234 0h26m260 0h26m52 0h26m26 0h26M2892 4476h26m78 0h26m52 0h26m78 0h26m52 0h52m26 0h26m312 0h26m78 0h26m104 0h26m156 0h26m468 0h26M2892 4506h26m26 0h26m286 0h26m156 0h26m234 0h26m546 0h26m702 0h26M2996 4534h26m156 0h26m26 0h26m104 0h26m234 0h26m52 0h26m494 0h26m156 0h26m208 0h26M2866 4564h26m130 0h26m26 0h26m26 0h26m260 0h26m52 0h26m52 0h26m286 0h26m26 0h26m130 0h78m26 0h26m78 0h26m104 0h26m182 0h26m234 0h26m156 0h26M2996 4592h26m104 0h26m312 0h52m338 0h26m26 0h26m130 0h26m26 0h26m26 0h26m52 0h26m130 0h26m156 0h26m234 0h26M2996 4622h104m234 0h52m260 0h26m312 0h26m78 0h26m26 0h26m78 0h26m390 0h52m104 0h26m104 0h26M2866 4650h26m26 0h26m104 0h26m156 0h26m104 0h26m26 0h26m52 0h78m52 0h26m52 0h26m208 0h26m208 0h104m52 0h26m182 0h26m78 0h26m78 0h26m26 0h52m78 0h26m52 0h52M2918 4680h26m130 0h26m156 0h26m130 0h26m78 0h52m52 0h26m52 0h26m52 0h26m182 0h26m104 0h26m26 0h26m104 0h78m416 0h26m234 0h26M2866 4708h26m78 0h52m104 0h52m52 0h26m26 0h52m104 0h52m26 0h26m26 0h26m78 0h26m338 0h52m78 0h26m104 0h26m260 0h26m52 0h26m130 0h26M2918 4737h26m26 0h26m104 0h26m78 0h26m182 0h26m286 0h26m78 0h26m130 0h26m182 0h26m442 0h26m130 0h52M2918 4766h26m182 0h26m286 0h52m156 0h26m52 0h26m104 0h26m104 0h26m442 0h26m130 0h26m52 0h26m26 0h52m26 0h26m26 0h52M2840 4796h26m52 0h52m182 0h26m364 0h26m156 0h26m338 0h26m130 0h52m780 0h26M3022 4824h26m260 0h26m598 0h26m728 0h26M4946 4854h26M3152 4882h26M3074 4912h26m1248 0h26M5102 4970h26M4686 4998h26"/>
<path stroke="#0013ff" d="M3386 3374h26m104 0h26m130 0h52m52 0h26m390 0h26m26 0h26m182 0h26m286 0h78m26 0h26m234 0h26M2970 3403h26m78 0h52m1092 0h26m260 0h26m52 0h26m104 0h26m286 0h26m78 0h26M2892 3432h52m26 0h26m156 0h26m26 0h26m390 0h26m78 0h26m26 0h26m234 0h26m52 0h26m130 0h26m338 0h26m104 0h26m52 0h52M2866 3462h26m52 0h26m104 0h26m130 0h26m208 0h26m442 0h26m338 0h26m104 0h26m26 0h26m78 0h26m52 0h52m364 0h26M2970 3490h26m52 0h26m260 0h26m182 0h26m52 0h26m104 0h52m26 0h26m208 0h52m26 0h26m182 0h52m104 0h52m182 0h26m156 0h26m52 0h26m78 0h26m26 0h18M2892 3520h26m104 0h26m130 0h26m156 0h26m260 0h26m52 0h26m26 0h26m104 0h26m104 0h26m208 0h26m78 0h52m26 0h26m286 0h26m130 0h26m52 0h26m52 0h26M2866 3548h26m104 0h26m182 0h52m26 0h26m104 0h52m78 0h52m52 0h26m234 0h26m26 0h26m26 0h26m26 0h26m182 0h26m78 0h26m312 0h26m52 0h52m52 0h26m26 0h26m78 0h26M2840 3578h52m130 0h26m208 0h26m104 0h52m26 0h26m312 0h26m442 0h26m78 0h52m26 0h26M2996 3606h26m104 0h26m234 0h26m26 0h26m26 0h52m52 0h26m78 0h26m104 0h26m26 0h26m546 0h26m416 0h26m104 0h26M2840 3636h26m78 0h26m156 0h26m442 0h26m78 0h52m26 0h52m208 0h52m104 0h26m26 0h26m130 0h26m312 0h26m52 0h26m130 0h26m78 0h26M2892 3664h26m260 0h26m156 0h52m52 0h26m390 0h26m26 0h26m26 0h26m26 0h26m78 0h26m78 0h26m104 0h26M2866 3693h26m234 0h26m442 0h26m130 0h26m26 0h26m52 0h52m26 0h26m546 0h52m52 0h26m312 0h26m130 0h44M2944 3722h26m208 0h26m52 0h52m26 0h26m364 0h26m130 0h26m182 0h26m104 0h26m208 0h26m416 0h26M2996 3752h26m338 0h52m130 0h26m520 0h26M2892 3780h26m338 0h26m806 0h26m416 0h52M2866 3810h26m78 0h26m26 0h26m390 0h26m494 0h52m1144 0h18M4010 3838h52m1092 0h18M4062 3868h26m1066 0h18M2970 3896h26m26 0h26m338 0h26m546 0h26M3828 3926h26m104 0h26M3178 3954h26m182 0h26m520 0h26M3282 3983h26m208 0h26m286 0h26m26 0h26m182 0h26m1014 0h26M3178 4012h26m130 0h26m130 0h26m598 0h26M2840 4042h26m572 0h26M2918 4070h52m338 0h26m78 0h26m390 0h26m156 0h26m1092 0h26M4036 4100h26m52 0h26M3620 4128h52m234 0h26M3698 4158h26M3516 4186h26M3386 4216h52m260 0h26m130 0h26m1274 0h18M5154 4274h18M3256 4302h26m364 0h26M2996 4332h26m494 0h26m52 0h26M3880 4390h26m1222 0h26M3178 4418h26m858 0h26m1040 0h26M3516 4448h26m364 0h26M3360 4476h26m130 0h26m182 0h26m208 0h26M2996 4506h26m858 0h26M3386 4534h26m728 0h26m858 0h26m104 0h18M3594 4564h26m78 0h26m754 0h26m312 0h26m312 0h18M3594 4592h26m520 0h26m728 0h26M3178 4622h26m1066 0h26m338 0h26m312 0h26M3204 4650h26m572 0h26m312 0h26M2970 4680h26m494 0h26m130 0h26m286 0h26m390 0h26m442 0h26M3386 4708h26m286 0h26m26 0h26m780 0h26m390 0h26M3750 4737h26m1352 0h26M3204 4766h26m26 0h52m312 0h26m130 0h78M2996 4796h26m286 0h26m104 0h26m26 0h52m598 0h26m26 0h26m130 0h26m234 0h26m52 0h26m104 0h26m26 0h52m130 0h26m52 0h26M3074 4824h52m104 0h26m208 0h26m52 0h26m26 0h26m130 0h26m78 0h26m156 0h26m104 0h26m104 0h26m78 0h26m78 0h26m208 0h26m208 0h26M2996 4854h26m624 0h26m78 0h26m26 0h26m26 0h26m52 0h52m442 0h26m52 0h26m52 0h52m104 0h26M3126 4882h26m182 0h26m104 0h26m130 0h26m104 0h52m104 0h26m52 0h26m182 0h26m104 0h78m416 0h26M2918 4912h26m52 0h26m26 0h26m52 0h26m52 0h26m104 0h26m234 0h26m26 0h26m598 0h26m182 0h26m182 0h52m26 0h52m104 0h26m104 0h26M3152 4940h26m104 0h26m364 0h26m78 0h26m624 0h52m52 0h26m104 0h26m52 0h78m26 0h26m156 0h52M2970 4970h26m52 0h26m130 0h26m156 0h26m156 0h26m702 0h26m260 0h26m26 0h26m494 0h18M3178 4998h26m130 0h26m182 0h26m1170 0h26m26 0h26m104 0h26m130 0h26m52 0h18"/>
<path stroke="#8000ff" d="M3438 3374h26M5076 3403h26M3074 3432h52m364 0h26m390 0h26m130 0h26m130 0h26m130 0h26m78 0h26m416 0h26m104 0h26m78 0h18M3386 3462h26m286 0h26m286 0h26m364 0h26m468 0h26m208 0h26M2996 3490h52m754 0h26m390 0h26m52 0h26M2996 3520h26m234 0h26m234 0h26m1196 0h26m390 0h18M4114 3548h26m182 0h26m338 0h26m364 0h26M3438 3578h26m1404 0h52M2944 3606h26m832 0h26m26 0h26m468 0h26m390 0h26M2996 3636h26m1196 0h26M5076 3693h26M4374 3722h26m104 0h26M3984 3780h26M5154 4042h18M5128 4158h26M5128 4244h26M5128 4302h26M5154 4360h18M5154 4418h18M5154 4448h18M5154 4476h18M5128 4592h26M5154 4708h18M3750 4796h26M3100 4854h26m858 0h26m78 0h26M2892 4882h26m1014 0h26m520 0h26m130 0h26m286 0h52M3906 4912h52m130 0h26m260 0h26m468 0h26m104 0h26M2918 4940h26m234 0h26m338 0h26m234 0h26m1300 0h26M2996 4970h26m442 0h26m286 0h26m754 0h26m286 0h26M2970 4998h26m312 0h26m104 0h26m624 0h26"/>
<path stroke="#6400ff" d="M3750 3374h26m338 0h26M3438 3403h26M3334 3432h26m104 0h26m260 0h26m806 0h26m104 0h52M3126 3462h26m364 0h26m182 0h26m104 0h26m26 0h26m130 0h52m104 0h26M3256 3490h78m1430 0h26m78 0h26M2944 3520h26m416 0h26m416 0h26m234 0h26m702 0h52M3490 3548h26m962 0h26m104 0h26M5050 3578h26M3022 3606h26m260 0h26m1482 0h26M4166 3636h26M2996 3664h26m2132 0h18M3360 3722h26m52 0h26M4036 3752h26M5128 3838h26M3984 3954h26M3802 4622h26M5154 4650h18M4556 4737h26M3594 4766h26m1508 0h44M3360 4796h26m208 0h26m1300 0h26M5050 4824h26M4062 4854h26m52 0h26M3178 4882h26m364 0h26m104 0h26m78 0h26m234 0h26m26 0h26m364 0h26m156 0h26m52 0h26M3724 4912h26m676 0h26m208 0h26m286 0h26m130 0h26M4712 4940h26m338 0h26M3698 4970h26m78 0h26m676 0h26m260 0h26M3802 4998h26m1040 0h52"/>
<path stroke="#00ffb2" d="M4556 3374h26M4296 3636h26M2970 3664h26m1612 0h26m312 0h26M3386 3693h26m1638 0h26m26 0h26M3516 3722h26m884 0h26m390 0h52M2918 3752h26m1352 0h26m572 0h26m156 0h26M2840 3780h26m598 0h26m806 0h26m286 0h26M2840 3810h26m52 0h26m208 0h26m52 0h26m156 0h26m988 0h26m78 0h26m26 0h26m26 0h26m52 0h26m156 0h26M2892 3838h52m624 0h78m650 0h52m156 0h26m26 0h26m494 0h26M3048 3868h26m312 0h26m52 0h26m156 0h26m52 0h26m182 0h26m208 0h26m26 0h26m52 0h26m130 0h26m52 0h26m26 0h52M2840 3896h26m130 0h26m26 0h26m26 0h52m858 0h26m52 0h26m26 0h26m26 0h26m130 0h26m182 0h26m26 0h26m234 0h26m182 0h26M2866 3926h26m130 0h26m26 0h26m78 0h26m260 0h26m728 0h26m78 0h26m156 0h26m520 0h52M3672 3954h26m26 0h26m208 0h26m104 0h26m234 0h26m26 0h26m52 0h26M3022 3983h26m416 0h26m650 0h52m78 0h52m52 0h26m104 0h26M2866 4012h26m468 0h26m234 0h52m26 0h26m52 0h26m26 0h26m364 0h26m26 0h26m52 0h26M2892 4042h52m130 0h26m468 0h52m416 0h26m52 0h26m52 0h26m52 0h26m156 0h26m130 0h26M3620 4070h26m572 0h26m52 0h26m130 0h26m182 0h52M2866 4100h26m130 0h26m598 0h26m390 0h26m494 0h26M2866 4128h26m78 0h26m286 0h26m416 0h26m338 0h78m78 0h26m182 0h26M2892 4158h26m260 0h26m286 0h26m52 0h26m260 0h26m78 0h26m598 0h26M3282 4186h26m364 0h26m26 0h26m312 0h78m156 0h26m286 0h26m26 0h26m364 0h26m26 0h26M2840 4216h26m234 0h26m442 0h104m234 0h26m260 0h26M3022 4244h26m260 0h26m312 0h26m182 0h26m130 0h26m52 0h26m104 0h26m26 0h26m26 0h26m208 0h26m104 0h26M2918 4274h26m26 0h26m52 0h26m234 0h26m52 0h26m520 0h26m208 0h26m78 0h26m52 0h26m702 0h26M2970 4302h26m78 0h26m26 0h26m156 0h26m26 0h26m182 0h26m104 0h26m416 0h26m130 0h26m286 0h26M2866 4332h26m182 0h26m182 0h52m156 0h26m572 0h26m26 0h52m286 0h26m208 0h26M2866 4360h26m52 0h26m286 0h26m26 0h26m52 0h26m546 0h26m26 0h26m78 0h26m104 0h52m494 0h26M2866 4390h26m182 0h26m182 0h26m208 0h26m312 0h26m52 0h26m104 0h26m494 0h26m104 0h26m156 0h26M3204 4418h52m130 0h26m156 0h52m26 0h52m52 0h26m182 0h26m494 0h26m338 0h26m78 0h26M2918 4448h26m156 0h26m156 0h26m416 0h26m130 0h26m182 0h52m104 0h52m104 0h26m78 0h26m442 0h26m26 0h26m26 0h26M3048 4476h26m130 0h26m182 0h26m494 0h26m26 0h26m208 0h26m78 0h26m26 0h26m104 0h26m78 0h26m234 0h26M2918 4506h26m260 0h26m234 0h78m130 0h26m130 0h26m78 0h26m26 0h26m338 0h26m52 0h26m26 0h26m130 0h26m104 0h52M3204 4534h26m546 0h26m26 0h26m26 0h52m156 0h52m52 0h26m52 0h26m208 0h78m78 0h78m78 0h78m156 0h26M2840 4564h26m104 0h26m52 0h26m312 0h26m260 0h26m338 0h26m260 0h26m260 0h26m104 0h52m312 0h26M2866 4592h26m26 0h26m676 0h26m182 0h26m182 0h26m156 0h26m208 0h26m26 0h26m26 0h26m26 0h52m26 0h78m52 0h26M3308 4622h26m364 0h52m78 0h26m78 0h26m52 0h52m234 0h52m78 0h26m78 0h26m52 0h26m416 0h26M2892 4650h26m546 0h26m78 0h26m52 0h52m26 0h26m156 0h26m52 0h26m572 0h26m52 0h26m416 0h26M3126 4680h26m208 0h26m624 0h26m572 0h26M3724 4708h26m208 0h26m442 0h26m52 0h26m156 0h26m78 0h26m26 0h26m78 0h26m130 0h26M4426 4737h52m26 0h26M3048 4766h26"/>
<path stroke="#00ffe9" d="M4712 3374h26M2918 3403h26m104 0h26m390 0h26M3568 3636h26m52 0h26m1014 0h26m390 0h26M3724 3664h26m338 0h26m728 0h26m104 0h26M2918 3693h26m1846 0h26m130 0h26m52 0h26M2918 3722h26m1586 0h26m130 0h26m312 0h52m26 0h26M2970 3752h26m156 0h26m442 0h26m1092 0h52m234 0h26M3074 3780h26m130 0h26m130 0h52m390 0h26m312 0h26m52 0h26m364 0h26m52 0h52m104 0h52m182 0h26M3074 3810h78m208 0h26m78 0h26m26 0h26m78 0h26m234 0h26m234 0h26m104 0h26m52 0h26m78 0h52m156 0h26m234 0h26M2866 3838h26m104 0h26m104 0h52m26 0h52m26 0h52m26 0h26m338 0h26m390 0h26m104 0h26m104 0h104m26 0h26M2866 3868h26m26 0h26m26 0h26m156 0h52m26 0h26m52 0h26m78 0h26m78 0h26m26 0h26m234 0h26m286 0h26m312 0h52m546 0h26M2918 3896h26m130 0h26m182 0h26m130 0h26m78 0h78m52 0h26m182 0h26m78 0h26m260 0h26m182 0h26m26 0h26M2918 3926h26m286 0h26m26 0h26m234 0h26m78 0h26m78 0h26m208 0h26m364 0h26m52 0h26m234 0h26M2840 3954h52m78 0h26m286 0h26m52 0h26m364 0h26m52 0h26m156 0h26m1040 0h26M2866 3983h26m234 0h52m26 0h26m130 0h26m52 0h26m104 0h26m26 0h26m26 0h26m650 0h26M2840 4012h26m26 0h26m182 0h26m26 0h26m52 0h26m26 0h26m156 0h26m52 0h52m312 0h52m78 0h26m130 0h26M3282 4042h26m416 0h26m26 0h26m130 0h26m182 0h26m260 0h26M3048 4070h26m52 0h26m26 0h26m338 0h26m130 0h26m312 0h26m494 0h26M2840 4100h26m104 0h52m52 0h26m364 0h26m260 0h26m234 0h26m130 0h78m312 0h26m26 0h26M3022 4128h26m26 0h26m208 0h26m130 0h26m182 0h26m130 0h26m338 0h52m130 0h26m260 0h26m26 0h26m338 0h26M2918 4158h26m78 0h26m26 0h26m208 0h26m26 0h26m364 0h52m130 0h26m52 0h26m130 0h26m208 0h26m52 0h52M2840 4186h52m104 0h26m78 0h26m26 0h26m52 0h26m52 0h26m572 0h26m52 0h26m156 0h26m78 0h26M2866 4216h26m130 0h52m52 0h52m52 0h26m52 0h26m26 0h26m494 0h26m26 0h26m26 0h26m104 0h78m26 0h52m104 0h52m78 0h26M3048 4244h52m260 0h26m156 0h26m26 0h26m312 0h26m702 0h26M3074 4274h26m130 0h26m104 0h26m78 0h26m78 0h52m26 0h26m52 0h26m26 0h26m26 0h26m26 0h26m78 0h26m130 0h26m260 0h26m78 0h26M2840 4302h52m26 0h26m156 0h26m78 0h52m208 0h26m104 0h26m208 0h78m52 0h26m468 0h26m234 0h26m338 0h26M3048 4332h26m26 0h26m52 0h26m182 0h26m208 0h26m104 0h26m26 0h26m156 0h26m52 0h26m416 0h26M2918 4360h26m104 0h52m234 0h26m364 0h52m104 0h26m182 0h26m442 0h52M3022 4390h26m182 0h26m52 0h26m78 0h26m104 0h26m26 0h26m26 0h26m416 0h26m650 0h26m312 0h26M2840 4418h52m26 0h26m104 0h26m546 0h26m260 0h52m52 0h26m338 0h26m234 0h26M3230 4448h52m78 0h26m156 0h26m260 0h26m130 0h26m182 0h26m468 0h52m156 0h26M2918 4476h52m260 0h26m52 0h26m130 0h26m52 0h26m78 0h26m156 0h26m260 0h26m52 0h26m208 0h26m26 0h26m208 0h26m104 0h26m104 0h26M3308 4506h26m78 0h26m104 0h78m234 0h26m156 0h26m52 0h26m78 0h26m364 0h26m208 0h26m26 0h26m26 0h26m104 0h26M2892 4534h26m52 0h26m260 0h78m130 0h26m26 0h78m78 0h26m312 0h26m130 0h26m52 0h26m104 0h26m182 0h26m130 0h26m234 0h26M3152 4564h26m130 0h52m104 0h26m286 0h26m26 0h26m104 0h26m78 0h26m182 0h26m52 0h26m26 0h26m26 0h26m208 0h52m104 0h26m78 0h26m52 0h26M2892 4592h26m104 0h26m52 0h26m156 0h26m52 0h26m26 0h26m130 0h26m416 0h26m260 0h26m26 0h26m494 0h26M2866 4622h26m78 0h26m156 0h26m104 0h26m182 0h52m208 0h52m104 0h26m182 0h26m260 0h26m312 0h26m26 0h26m104 0h26m78 0h26M2944 4650h52m312 0h52m520 0h26m494 0h26m260 0h52m208 0h26M2866 4680h26m52 0h26m52 0h26m520 0h26m442 0h26m130 0h26m26 0h52m104 0h26m26 0h26m78 0h26m78 0h26m260 0h26m26 0h26m78 0h26M2840 4708h26m26 0h26m26 0h26m52 0h52m104 0h26m442 0h26m156 0h26m52 0h26m78 0h26m312 0h26m104 0h26m104 0h26m78 0h52m234 0h26M2866 4737h52m130 0h26m78 0h26m52 0h26m52 0h26m156 0h26m130 0h52m312 0h26m338 0h26M3308 4766h26m858 0h26m78 0h26m780 0h26M4712 4796h26"/>
<path stroke="#00ff7c" d="M4816 3664h26M4764 3722h52M3932 3752h26m962 0h26M4400 3780h26m338 0h26m130 0h26m104 0h26M4322 3810h26m728 0h26M3022 3838h26m884 0h26m624 0h78m104 0h26m78 0h26M3620 3868h26m546 0h26m442 0h26m26 0h52M3620 3896h26m78 0h52m650 0h26m182 0h26m26 0h26M3152 3926h26m182 0h26m624 0h26m156 0h26m182 0h52m26 0h26m130 0h26m78 0h26M3074 3954h26m1040 0h78m26 0h26m52 0h26m104 0h26m130 0h26m78 0h26M3074 3983h26m910 0h26m182 0h26m364 0h26M4088 4012h26m338 0h26m26 0h26M3230 4042h26m208 0h26m676 0h26m156 0h52m338 0h26m338 0h26M3022 4070h26m1014 0h26m104 0h26m26 0h52m52 0h78m156 0h26m104 0h52M4296 4100h26m26 0h26m26 0h52m208 0h26M4036 4128h26m104 0h26m78 0h26m104 0h26m78 0h26m26 0h26m104 0h26M3048 4158h26m390 0h26m234 0h26m468 0h26m78 0h26m26 0h26m338 0h26M2918 4186h26m624 0h26m780 0h26m52 0h78m26 0h26m52 0h26m78 0h26M2892 4216h26m156 0h26m364 0h26M2866 4244h26m26 0h26m1170 0h52m26 0h26m208 0h26m26 0h26m546 0h26m26 0h26M2866 4274h26m390 0h26m364 0h26m390 0h26m78 0h52m234 0h26m234 0h26m156 0h26m78 0h26M4218 4302h78m52 0h52m260 0h26m78 0h26M4114 4332h26m494 0h26m260 0h26M3022 4360h26m130 0h26m26 0h26m104 0h26m234 0h26m26 0h26m442 0h26m52 0h26m234 0h26m26 0h26m52 0h26m78 0h26m78 0h26m182 0h26m52 0h26M2944 4390h26m494 0h26m130 0h26m468 0h26m234 0h52m52 0h26m104 0h26M4218 4418h26m78 0h26m312 0h26m26 0h26m260 0h52M2866 4448h26m572 0h26m182 0h26m468 0h26m26 0h26m546 0h52m156 0h26m26 0h26M2970 4476h26m442 0h26m104 0h26m676 0h52m364 0h26m26 0h78m104 0h52M2840 4506h26m182 0h26m156 0h26m832 0h26m208 0h26m104 0h26m260 0h26m260 0h52M3022 4534h26m598 0h26m286 0h26m312 0h52m130 0h26m104 0h26m156 0h26m104 0h26m130 0h26M3204 4564h52m26 0h26m52 0h26m1170 0h26m208 0h26m104 0h26m26 0h26M2944 4592h26m78 0h26m78 0h26m702 0h26m520 0h26m494 0h26m26 0h26m78 0h26M3386 4622h26m52 0h26m988 0h26M3022 4650h26m104 0h26m832 0h26m312 0h26m234 0h26m208 0h26M3282 4680h52m494 0h26m572 0h26m130 0h26m312 0h26M3360 4708h26m234 0h26m676 0h26M3620 4737h26m676 0h26M3932 4766h26m572 0h26"/>
<path stroke="#00ff45" d="M4920 3693h26M4816 3722h26m130 0h26M4842 3752h26m130 0h26M4946 3780h26M3568 3810h26m1274 0h26m156 0h26M3958 3838h26m676 0h26m208 0h26M4426 3868h26m234 0h26M4166 3896h26m52 0h26m26 0h52m26 0h26m52 0h26m624 0h26M4296 3926h26m26 0h26m494 0h26M4270 3954h26m208 0h26m26 0h26m52 0h26M4426 3983h26m26 0h26m52 0h52m78 0h52m338 0h26M3048 4012h26m1066 0h26m234 0h26m52 0h26m260 0h26m286 0h26M4010 4042h26m208 0h26m26 0h26m260 0h26m416 0h26M4504 4070h26m104 0h26m364 0h26m52 0h26M4140 4100h26m78 0h52m156 0h104m130 0h26M3698 4128h26m572 0h26m104 0h26m26 0h26m26 0h26m52 0h26m416 0h26M4192 4158h26m26 0h26m78 0h26m78 0h26m78 0h26m26 0h52M2892 4186h26m156 0h26m1092 0h26m104 0h26m78 0h26m78 0h26m26 0h26m104 0h26M4296 4216h26m130 0h26m78 0h26m26 0h26m52 0h26m156 0h26m208 0h26M4452 4244h26m26 0h26m104 0h26m260 0h52M3152 4274h26m1196 0h26m52 0h26m208 0h26M4114 4302h26m52 0h26m182 0h26m78 0h52m26 0h26m182 0h26m234 0h26m26 0h26M3724 4332h26m702 0h26m364 0h52m156 0h26M3204 4360h26m234 0h26m104 0h26m676 0h26m26 0h26m598 0h26M2970 4390h26m156 0h26m390 0h26m416 0h26m130 0h52m416 0h26m208 0h26m78 0h26M2892 4418h26m806 0h26m338 0h26m26 0h78m52 0h26m260 0h52m130 0h26m52 0h26m52 0h52M2970 4448h26m416 0h26m130 0h26m546 0h26m156 0h26m26 0h26m78 0h26m52 0h26m156 0h52m156 0h26m130 0h26M4010 4476h26m104 0h52m156 0h26m182 0h26m78 0h26m208 0h26m156 0h26M3724 4506h26m26 0h26m702 0h104m52 0h52m104 0h26m78 0h26M2866 4534h26m156 0h26m1352 0h52m416 0h26m26 0h52M3620 4564h26M3542 4592h26m962 0h26M3230 4622h26M4634 4680h26"/>
<path stroke="#00ff0e" d="M4790 3752h26m130 0h52M4842 3780h26M5102 3810h26M3464 3838h26m1534 0h26M4322 3868h26m520 0h52M4660 3896h26m26 0h26M4530 3926h26m130 0h26m312 0h26M4426 3954h26m78 0h26M4322 3983h26m52 0h26m104 0h26m104 0h26m52 0h26m104 0h26M4244 4012h26m26 0h26m208 0h52M4504 4042h26m26 0h26m52 0h26M4114 4070h26m182 0h26m78 0h26m468 0h26m104 0h26M4322 4100h26m26 0h26M4582 4128h26M4296 4158h26m208 0h26m104 0h78m312 0h26m26 0h26M4244 4186h26m78 0h26m702 0h26M4322 4216h26m364 0h26m312 0h52M4166 4244h26m390 0h52m78 0h26m286 0h26M4296 4274h52m52 0h26m156 0h52m26 0h26m78 0h26M4478 4302h26m52 0h26m390 0h26m26 0h26M4218 4332h52m26 0h52m208 0h78m130 0h52m78 0h26m104 0h26m52 0h26M4192 4360h26m234 0h26m26 0h26m208 0h52m52 0h26m52 0h26m130 0h26M4140 4390h26m52 0h26m78 0h52m52 0h52m182 0h26m156 0h26m130 0h104M4348 4418h26m78 0h26m26 0h26m78 0h26m52 0h26m78 0h26m52 0h26m208 0h26M3048 4448h26m1222 0h26m104 0h26m78 0h26m52 0h26m26 0h26m182 0h26M4244 4476h26m182 0h26m546 0h26m52 0h26M4374 4506h26M2970 4592h26m208 0h26m1092 0h26M3464 4680h26M4530 4708h26"/>
<path stroke="#53ff00" d="M4816 3752h26M4946 3838h26M4738 3896h26m130 0h26M4660 3926h26M4582 3954h26m52 0h52m338 0h26M4894 3983h26m182 0h26M4686 4012h78m260 0h26m52 0h26M4400 4042h26m104 0h26m104 0h26m182 0h26M4764 4100h26m234 0h26M4634 4128h26m78 0h26M4920 4158h26m78 0h26M4686 4186h26m156 0h26m52 0h26M4348 4216h26m650 0h26M4400 4244h26m390 0h26m130 0h26M4634 4274h26m130 0h78m26 0h26M4686 4302h26M4686 4332h26m26 0h26m182 0h26M4634 4360h26M4504 4390h78m104 0h26m104 0h26m78 0h26M4348 4448h26m78 0h26M4634 4476h26M4244 4506h26M5102 4534h26"/>
<path stroke="#ffa200" d="M4790 3780h26M4790 3810h52M4972 3868h26M4946 3896h26M4998 3926h26M4998 3954h26M4920 3983h26M4816 4042h26m104 0h26M4972 4070h26M4998 4100h26M4842 4128h26M4790 4158h26m130 0h26M4790 4216h26m26 0h26"/>
<path stroke="#ff1c00" d="M4816 3780h26M4972 3838h26M4972 3896h52M4816 3926h26M4842 3983h26M4842 4012h26M4842 4100h26M4816 4158h26"/>
<path stroke="#23ff00" d="M4972 3780h52M4842 3810h26m78 0h26M4842 3838h26m52 0h26M5050 3868h26m26 0h26M4556 3926h26m312 0h26m182 0h26M4244 3983h26m364 0h26M4322 4012h26m78 0h26m130 0h52m26 0h26M4322 4042h26m364 0h26m182 0h26m130 0h26M4530 4070h26m52 0h26M4634 4100h26m442 0h26M4322 4128h26m546 0h26M4270 4158h26M4764 4186h26M4426 4216h26m78 0h26m78 0h52m52 0h26m52 0h26m104 0h26M4244 4244h26m26 0h26m26 0h26m156 0h26m182 0h52M4244 4274h26m234 0h26m442 0h52m26 0h26M4322 4302h26m286 0h26m78 0h26m52 0h26m52 0h26m26 0h26M4660 4332h26m130 0h26m130 0h26m78 0h26M4322 4360h26m52 0h52m416 0h52m26 0h26m78 0h26M4244 4390h78m416 0h26m182 0h26M4296 4418h26m78 0h52m78 0h26m208 0h26m182 0h26M4634 4448h26m182 0h26m52 0h26M4530 4476h26m260 0h26M4296 4506h26"/>
<path stroke="#83ff00" d="M4764 3810h26m234 0h26M4998 3838h26M4764 3868h26m156 0h26m52 0h26M4920 3896h26m78 0h52M4764 3954h26m52 0h26m234 0h26M4946 3983h26m78 0h26M5050 4012h26M4894 4070h26M4868 4100h26m156 0h26M4972 4128h52M4764 4158h26M4972 4186h26M4764 4216h26m130 0h26M4842 4244h26m130 0h26M4946 4274h26m130 0h26M4868 4302h26m104 0h26M4348 4332h26m52 0h26M4660 4360h52M4790 4390h26M4582 4448h26"/>
<path stroke="#b2ff00" d="M4972 3810h26M4842 3868h26M4738 3954h26m104 0h26M5024 3983h26M4894 4012h52M4764 4042h26M4868 4070h26M4738 4100h26m156 0h26M4764 4128h26m78 0h26M4842 4158h26m26 0h26m78 0h26M4894 4186h26m78 0h26M4894 4216h26m52 0h26M4790 4244h26M4556 4274h26m286 0h26M4920 4302h26"/>
<path stroke="#e2ff00" d="M4998 3810h26M4764 3926h26m52 0h26m52 0h26M4894 3954h52m78 0h26M4868 4012h26M4842 4042h26M4764 4070h26M4868 4158h26M4790 4186h26m26 0h26M4998 4216h26M4530 4332h26M4998 4360h26"/>
<path stroke="#ff0000" d="M4790 3838h52M4790 3868h26M4790 3896h52M4790 3926h26m156 0h26M4790 3954h52m130 0h26M4790 3983h52m130 0h26M4790 4012h52m130 0h52M4790 4042h26m156 0h26M4790 4070h52m104 0h26M4790 4100h52m130 0h26M4790 4128h52"/>
<path stroke="#ffe500" d="M4816 3868h26M4764 3896h26m52 0h26M4946 3926h26M4764 3983h26M4998 4042h26M4842 4070h26M4894 4100h26m26 0h26M4920 4128h52M4972 4158h26M4816 4186h26m78 0h26M4868 4244h52"/>
<path stroke="#ff5f00" d="M4998 3868h26M4946 3954h26M4998 3983h26M4946 4012h26M4894 4042h26M4998 4070h26"/>
</g>
<g transform="scale(0.05)" fill="none" stroke-width="48">
<path stroke="#2d00ff" d="M2840 5037h40m320 0h40m40 0h40m160 0h40m40 0h40m480 0h40m600 0h40m160 0h80m160 0h12M3000 5086h40m1000 0h40m720 0h40M3080 5134h40m1400 0h40M2920 5182h40m240 0h40m360 0h40m320 0h40m160 0h40M4760 5231h40m160 0h40M3240 5279h40M4800 5328h40m80 0h40m40 0h40M2960 5376h40m200 0h40m440 0h40m480 0h40M4040 5424h40M3600 5521h40m240 0h40m520 0h40m440 0h40M2960 5570h40m2120 0h40M4840 5618h40m40 0h40M4120 5666h40M4200 5715h40m320 0h40m240 0h40m40 0h40m160 0h40"/>
<path stroke="#0013ff" d="M2880 5037h40m40 0h40m520 0h40m240 0h40m40 0h80m680 0h40m440 0h40M3560 5086h40m80 0h40m800 0h40m200 0h40m40 0h80M3480 5134h40m40 0h80m80 0h40m240 0h40m360 0h40m120 0h40m80 0h40m40 0h120m40 0h40M3440 5182h40m240 0h40m40 0h40m840 0h40m400 0h40M3080 5231h40m560 0h40m280 0h40m440 0h40m120 0h40M2880 5279h40m2080 0h40M2880 5328h40m360 0h40m240 0h40m40 0h40m120 0h40m200 0h40m800 0h40m160 0h80M3600 5376h40m1160 0h40m200 0h40M2880 5424h40M3800 5473h80m600 0h40m40 0h40M5160 5521h12M4120 5618h40m360 0h40M3920 5666h40m1000 0h80M3280 5715h80m600 0h40m520 0h40"/>
<path stroke="#8000ff" d="M3000 5037h40m200 0h40m760 0h40m720 0h40m240 0h40M3120 5086h40m80 0h40m360 0h40m280 0h40m1000 0h120m40 0h12M5040 5134h80M3760 5182h40M2960 5279h40m480 0h40m1240 0h40M3360 5328h40m40 0h40m200 0h40m1440 0h12M4120 5376h40m1000 0h12M3240 5424h40m160 0h40m160 0h40M3160 5473h40m1600 0h40M5120 5521h40M3280 5570h40m1360 0h40M3080 5618h40m760 0h40M3520 5666h40M4480 5715h40"/>
<path stroke="#4900ff" d="M3320 5037h40m400 0h40m440 0h40m480 0h40M4000 5086h40m160 0h40m200 0h40m160 0h40M3280 5134h40m800 0h80m920 0h52M3640 5182h40m200 0h40m720 0h40m80 0h160M2840 5231h40m80 0h40m240 0h40m560 0h40m240 0h40m680 0h80M3080 5279h40m200 0h80m760 0h40m200 0h40m80 0h40m40 0h40M3120 5328h40m1320 0h40m440 0h40M4160 5376h40m480 0h40M5040 5424h40M3880 5473h40m1160 0h40M3160 5521h40m1160 0h40m80 0h40m80 0h40m440 0h40M4120 5570h40M3120 5666h40M3200 5715h40m760 0h40m960 0h40"/>
<path stroke="#0046ff" d="M3720 5037h40m560 0h40m160 0h40m480 0h40M4720 5086h40M2920 5134h40m360 0h40m440 0h40M2880 5182h40M3440 5231h40m80 0h40m320 0h40M3760 5279h40m480 0h40m120 0h80m600 0h40M3560 5376h40m40 0h40M4120 5424h40m240 0h40m280 0h40M3120 5473h40m1560 0h40M3680 5570h40m120 0h40M3920 5618h40M3360 5666h40M3720 5715h40m120 0h40m160 0h40m920 0h40"/>
</g>
<g transform="scale(0.05)" fill="none" stroke-width="29">
<path stroke="#1100ff" d="M13856 3374h26m156 0h26m52 0h24M13856 3403h26m130 0h52m52 0h24M13882 3432h26m104 0h26m52 0h26M13960 3462h52M13830 3490h26m52 0h78M13804 3548h26m52 0h26M13882 3606h26m104 0h26m26 0h76M14038 3636h26M13830 3693h26M14012 3722h52M13804 3752h26m182 0h26M13804 3780h26m130 0h26m130 0h24M13804 3838h26m156 0h26m26 0h26M13830 3868h26m26 0h26m78 0h26M13856 3896h26"/>
<path stroke="#8000ff" d="M13882 3374h26M13882 3403h26M13908 3578h26m26 0h26M13908 3606h26m52 0h26"/>
<path stroke="#0013ff" d="M13908 3374h26m130 0h26M13908 3403h26m52 0h26M13830 3432h52m156 0h26M13882 3462h26m26 0h26M13986 3490h26m26 0h26M14064 3520h26M13830 3548h26m130 0h26m78 0h50M13804 3578h52m26 0h26M13804 3606h26m104 0h26m78 0h26M13804 3636h26m156 0h52m52 0h26M13986 3664h52m78 0h24M13856 3693h52m78 0h26m104 0h24M13986 3722h26m78 0h50M13882 3752h26m52 0h26m78 0h26M13830 3780h78m130 0h26M13960 3810h52m26 0h26m52 0h24M13856 3838h26m26 0h26m26 0h26m104 0h26M13960 3868h26m26 0h52m26 0h26M14038 3896h26m26 0h26M13960 3954h26M13804 3983h26m182 0h26M13960 4070h26M14090 4100h26"/>
<path stroke="#2d00ff" d="M13986 3374h26M13804 3403h52m104 0h26M13986 3432h26M13908 3462h26m78 0h52m52 0h24M13804 3490h26M13986 3520h52m52 0h26M13856 3548h26m130 0h26M13856 3578h26m104 0h26m104 0h24M13804 3664h26M14012 3693h52m26 0h26M13908 3722h26m26 0h26M14038 3752h26M13856 3810h26M14116 3838h24M13908 3954h26"/>
<path stroke="#0046ff" d="M14064 3403h26M13882 3490h26m208 0h24M13934 3578h26m130 0h26M13960 3636h26m78 0h26m26 0h24M13960 3664h26m52 0h52M13804 3693h26m78 0h26M13830 3722h78m156 0h26M13908 3752h26m52 0h26m104 0h24M13908 3780h26m52 0h52m26 0h26M13830 3810h26m26 0h52m130 0h52M13804 3868h26m26 0h26m52 0h26m156 0h24M13804 3896h26m182 0h26M13960 3926h26m78 0h52M13882 3954h26m182 0h26M13830 4012h26m52 0h26m52 0h52M13804 4070h26m104 0h26m78 0h26M13960 4128h26M14116 4970h24M14090 4998h26"/>
<path stroke="#4900ff" d="M13908 3432h26M13830 3462h26M13856 3490h26m208 0h26M13960 3520h26M14064 3578h26M13882 3636h26M13882 3664h26M13960 3693h26M13908 3868h26"/>
<path stroke="#6400ff" d="M13960 3432h26M13960 3548h26"/>
<path stroke="#007aff" d="M14064 3490h26M13934 3520h26M13856 3636h26m26 0h52M13830 3664h26m52 0h26M13934 3693h26M13804 3722h26M13856 3752h26m208 0h26M14090 3780h26M13804 3810h26m104 0h26M13830 3838h26m78 0h26M13960 3896h26M13830 3954h26m182 0h52M13882 3983h26m182 0h26M13804 4012h26m208 0h26m26 0h26M13882 4042h26m26 0h52m104 0h26M14090 4070h50M13882 4128h26m104 0h26m26 0h52M13960 4940h26m130 0h24M13960 4970h26"/>
<path stroke="#00adff" d="M13830 3636h26M13856 3664h26m52 0h26m130 0h26M13934 3722h26M13934 3752h26M14064 3838h26M14064 3868h26M13986 3896h26M13856 3926h26m26 0h52m26 0h26m26 0h26M13856 3954h26m130 0h26m78 0h24M13856 3983h26M13934 4012h26m156 0h24M14064 4042h26m26 0h24M13830 4070h26m52 0h26m52 0h26M13830 4100h26m26 0h26m78 0h26m52 0h26M13856 4128h26m52 0h26m26 0h26m26 0h26m52 0h24M13882 4940h26m104 0h26m26 0h26M14012 4970h52M13960 4998h26"/>
<path stroke="#00e0ff" d="M14064 3693h26M13830 3896h26m26 0h52M13804 3926h52m26 0h26m104 0h26m78 0h24M13804 3954h26m104 0h26M13908 3983h104m26 0h26m52 0h24M13882 4012h26m52 0h26m78 0h26M13830 4042h52m26 0h26m52 0h78M13882 4070h26m104 0h26m26 0h26M13856 4100h26m130 0h26m78 0h24M13830 4128h26M14064 4216h26M13856 4940h26m156 0h26m26 0h26M13804 4998h26m78 0h52m26 0h26m26 0h26"/>
<path stroke="#00ffe9" d="M13934 3780h26M13934 3896h26m104 0h26m26 0h24M13986 3954h26M14064 3983h26M13856 4012h26M13856 4070h26M13804 4100h26m78 0h78m52 0h26M13804 4128h26m78 0h26M14012 4158h26m52 0h26M13960 4332h52M14116 4390h24M13882 4506h26M13960 4564h26M14012 4592h26M14090 4708h26M14116 4882h24M13986 4940h26M13804 4970h26m104 0h26m130 0h26M13830 4998h26m26 0h26m104 0h26m26 0h26"/>
<path stroke="#00ffb2" d="M13830 3983h26M13804 4042h26M13908 4216h26m52 0h26M13804 4360h26M14064 4390h26M13882 4418h26M13986 4476h26M14012 4506h26m52 0h26M14090 4564h26M13856 4622h26m104 0h52M14012 4650h26M13882 4766h26m182 0h26M14012 4796h52M14038 4854h26m26 0h26M13960 4882h26M13804 4912h26m78 0h26M13804 4940h26m78 0h52M13830 4970h26m208 0h26M14116 4998h24"/>
<path stroke="#00ff0e" d="M13804 4158h52m208 0h26M14116 4186h24M13830 4216h52m52 0h26M13856 4244h26m182 0h26M13804 4274h78m52 0h26M13830 4302h26m260 0h24M13830 4332h26m260 0h24M13830 4360h26m104 0h26M13804 4390h26m104 0h26m26 0h52m52 0h26M13830 4418h26m52 0h26m130 0h26M13986 4448h52m52 0h26M13856 4476h52m182 0h26M13830 4506h26m52 0h26m130 0h26M13856 4534h26m182 0h26m26 0h24M13830 4564h26m182 0h26m52 0h24M13882 4592h78m78 0h26M13804 4622h26m234 0h26M13804 4650h26m286 0h24M13804 4680h26m260 0h26M14012 4708h26M13908 4737h52M13830 4766h52m52 0h26m52 0h26M13830 4796h26m130 0h26m104 0h24M13856 4824h26m52 0h26m52 0h26M13804 4854h26m130 0h26M13882 4882h26M13882 4912h26m78 0h26m52 0h26"/>
<path stroke="#23ff00" d="M13856 4158h26m156 0h26m52 0h24M13804 4186h26m104 0h26m78 0h26M13934 4244h26m52 0h26M13908 4274h26M13804 4302h26m156 0h26M13804 4332h26m26 0h26m52 0h26m78 0h26M13934 4360h26m52 0h104M13830 4390h26M14012 4418h26M13934 4448h26m156 0h24M13804 4476h26m208 0h26m52 0h24M13934 4506h26m26 0h26M13882 4534h26m182 0h26M13908 4564h26m130 0h26M13856 4592h26m104 0h26m52 0h52M13934 4680h26m26 0h26m26 0h26M14116 4708h24M13960 4737h26m52 0h26M14038 4766h26M13856 4796h26m26 0h26m26 0h26m78 0h26M14038 4824h52M14064 4854h26M13986 4882h26M13934 4912h26m130 0h50"/>
<path stroke="#00ff7c" d="M13882 4158h26m26 0h26M13908 4186h26m78 0h26m26 0h52M14038 4216h26M13882 4244h52m156 0h26M14064 4274h26m26 0h24M13856 4302h52m52 0h26m104 0h26M13882 4332h26M13882 4360h26M13882 4390h26m130 0h26M13960 4418h26m52 0h26M13908 4448h26m104 0h26M13830 4476h26M13804 4506h26m130 0h26m130 0h24M13986 4534h52M14012 4564h26M13960 4592h26M13882 4622h26M13856 4650h26m26 0h26m104 0h26M13908 4680h26m78 0h26M13960 4708h26M13882 4737h26m208 0h24M13986 4766h26M14090 4796h26M13882 4824h52m52 0h26M13908 4854h26M13830 4882h26m156 0h26M14012 4912h26M13830 4940h26M13856 4970h78m52 0h26M13856 4998h26"/>
<path stroke="#00ff45" d="M13908 4158h26m26 0h26M13856 4186h26m78 0h52M13882 4216h26m104 0h26m52 0h50M13804 4244h26m130 0h52m26 0h26M13882 4274h26m52 0h104m26 0h26M13908 4302h52m52 0h52M13908 4332h26m130 0h52M13908 4360h26m52 0h26m104 0h24M13908 4390h26m26 0h26M13934 4418h26m130 0h50M13804 4448h26m52 0h26m156 0h26M13960 4476h26m26 0h26m26 0h26M14038 4506h26M13908 4534h78m52 0h26M13804 4564h26m52 0h26m26 0h26M13804 4592h52M13908 4622h26m104 0h26m26 0h26M14090 4650h26M13830 4680h78m156 0h26m26 0h24M13804 4708h26m52 0h78m26 0h26m26 0h52M13804 4737h52m156 0h26m52 0h26M13804 4766h26m78 0h26m26 0h26m130 0h24M13804 4796h26m104 0h26M13830 4824h26m104 0h26m130 0h24M13856 4854h52m78 0h52m78 0h24M13804 4882h26m26 0h26m26 0h52m78 0h78M13830 4912h26m182 0h26"/>
<path stroke="#53ff00" d="M13986 4158h26M13830 4186h26m26 0h26M13804 4216h26m130 0h26M13830 4244h26m260 0h24M14064 4302h26M14012 4332h26M13856 4360h26M13856 4390h26M13856 4448h26M13804 4534h26M13856 4564h26M13830 4622h26m104 0h26m130 0h24M13960 4650h52m52 0h26M13960 4680h26M13830 4708h26M13856 4737h26m104 0h26m52 0h26M14064 4766h26M13882 4796h26M13804 4824h26M13934 4854h26"/>
<path stroke="#83ff00" d="M13804 4418h26m156 0h26M13830 4448h26m104 0h26M13934 4476h26M13830 4534h26M13986 4564h26M13830 4650h26m26 0h26m26 0h26M13856 4708h26M14090 4824h26M13830 4854h26M13856 4912h26m78 0h26"/>
<path stroke="#b2ff00" d="M13856 4418h26M13908 4476h26M13856 4506h26M13934 4622h26"/>
<path stroke="#e2ff00" d="M14116 4592h24"/>
</g>
<g transform="scale(0.05)" fill="none" stroke-width="48">
<path stroke="#0013ff" d="M13804 5037h120m40 0h40M14084 5134h40M13804 5182h40m120 0h40m120 0h16M14004 5231h80m40 0h16M14004 5328h40M13804 5376h40m120 0h40M13804 5424h40M13844 5473h40m120 0h40M13924 5715h40"/>
<path stroke="#4900ff" d="M14124 5037h16M14004 5086h40M14124 5134h16M13924 5279h40M13884 5328h40M14124 5424h16M13804 5473h40"/>
<path stroke="#2d00ff" d="M13804 5086h80M13924 5134h40M14004 5182h40m40 0h40M14084 5231h40M14044 5279h40M14004 5376h40M13924 5424h40M14044 5473h40"/>
<path stroke="#0046ff" d="M14044 5086h40M13964 5134h40M13844 5328h40M14044 5424h40M13844 5666h40"/>
<path stroke="#8000ff" d="M14084 5086h40M13804 5231h40M14124 5328h16M13964 5570h40M13804 5715h40"/>
</g>
</g>
<polyline fill="none" stroke="#fff" stroke-width="1" shape-rendering="crispEdges" points="142.1,35.3 151.7,37.3 163.4,39.1 175.2,40.9 186.9,42.6 196.3,44.3 201.0,44.6 203.3,44.4 207.4,42.8 211.5,39.1 215.0,35.6 217.0,34.5 218.5,34.2 220.0,34.5 222.0,35.6 225.5,40.3 229.1,47.3 233.8,57.8 238.4,67.2 242.0,73.1 245.5,76.6 248.4,78.4 250.0,78.6 310.3,78.6 314.0,77.5 317.3,75.7 324.4,71.4 331.4,64.4 343.1,53.2 354.8,42.1 361.9,37.9 367.7,35.5 372.4,34.6 461.5,34.6 464.5,35.1 467.3,36.2 472.0,39.6 476.7,44.5 480.5,47.3 493.4,61.4 505.2,73.1 509.8,76.1 514.5,78.6 574.3,78.6 576.0,77.2 577.8,74.2 581.3,64.9 586.0,49.6 589.5,40.3 592.0,35.5 593.5,33.9 595.0,35.8 596.6,40.3 601.2,55.5 605.9,71.9 610.6,86.0 614.1,93.0 617.6,97.7 620.0,98.8 622.3,99.3 645.8,101.2 676.2,103.2 695.0,104.2 698.5,104.9 707.0,104.9"/>
<g shape-rendering="crispEdges">
<rect x="141" y="19" width="1" height="124" fill="#fff"/>
<rect x="707" y="19" width="1" height="124" fill="#fff"/>
<rect x="132" y="19" width="585" height="1" fill="#fff"/>
<rect x="132" y="142" width="585" height="1" fill="#fff"/>
<rect x="160" y="19" width="1" height="6" fill="#fff"/>
<rect x="160" y="136" width="1" height="7" fill="#fff"/>
<rect x="179" y="19" width="1" height="6" fill="#fff"/>
<rect x="179" y="136" width="1" height="7" fill="#fff"/>
<rect x="197" y="19" width="1" height="6" fill="#fff"/>
<rect x="197" y="136" width="1" height="7" fill="#fff"/>
<rect x="216" y="19" width="1" height="6" fill="#fff"/>
<rect x="216" y="136" width="1" height="7" fill="#fff"/>
<rect x="235" y="19" width="1" height="9" fill="#fff"/>
<rect x="235" y="133" width="1" height="10" fill="#fff"/>
<rect x="254" y="19" width="1" height="6" fill="#fff"/>
<rect x="254" y="136" width="1" height="7" fill="#fff"/>
<rect x="273" y="19" width="1" height="6" fill="#fff"/>
<rect x="273" y="136" width="1" height="7" fill="#fff"/>
<rect x="292" y="19" width="1" height="6" fill="#fff"/>
<rect x="292" y="136" width="1" height="7" fill="#fff"/>
<rect x="311" y="19" width="1" height="6" fill="#fff"/>
<rect x="311" y="136" width="1" height="7" fill="#fff"/>
<rect x="330" y="19" width="1" height="9" fill="#fff"/>
<rect x="330" y="133" width="1" height="10" fill="#fff"/>
<rect x="349" y="19" width="1" height="6" fill="#fff"/>
<rect x="349" y="136" width="1" height="7" fill="#fff"/>
<rect x="368" y="19" width="1" height="6" fill="#fff"/>
<rect x="368" y="136" width="1" height="7" fill="#fff"/>
<rect x="387" y="19" width="1" height="6" fill="#fff"/>
<rect x="387" y="136" width="1" height="7" fill="#fff"/>
<rect x="406" y="19" width="1" height="6" fill="#fff"/>
<rect x="406" y="136" width="1" height="7" fill="#fff"/>
<rect x="425" y="19" width="1" height="9" fill="#fff"/>
<rect x="425" y="133" width="1" height="10" fill="#fff"/>
<rect x="444" y="19" width="1" height="6" fill="#fff"/>
<rect x="444" y="136" width="1" height="7" fill="#fff"/>
<rect x="463" y="19" width="1" height="6" fill="#fff"/>
<rect x="463" y="136" width="1" height="7" fill="#fff"/>
<rect x="482" y="19" width="1" height="6" fill="#fff"/>
<rect x="482" y="136" width="1" height="7" fill="#fff"/>
<rect x="501" y="19" width="1" height="6" fill="#fff"/>
<rect x="501" y="136" width="1" height="7" fill="#fff"/>
<rect x="520" y="19" width="1" height="9" fill="#fff"/>
<rect x="520" y="133" width="1" height="10" fill="#fff"/>
<rect x="539" y="19" width="1" height="6" fill="#fff"/>
<rect x="539" y="136" width="1" height="7" fill="#fff"/>
<rect x="558" y="19" width="1" height="6" fill="#fff"/>
<rect x="558" y="136" width="1" height="7" fill="#fff"/>
<rect x="577" y="19" width="1" height="6" fill="#fff"/>
<rect x="577" y="136" width="1" height="7" fill="#fff"/>
<rect x="596" y="19" width="1" height="6" fill="#fff"/>
<rect x="596" y="136" width="1" height="7" fill="#fff"/>
<rect x="615" y="19" width="1" height="9" fill="#fff"/>
<rect x="615" y="133" width="1" height="10" fill="#fff"/>
<rect x="634" y="19" width="1" height="6" fill="#fff"/>
<rect x="634" y="136" width="1" height="7" fill="#fff"/>
<rect x="653" y="19" width="1" height="6" fill="#fff"/>
<rect x="653" y="136" width="1" height="7" fill="#fff"/>
<rect x="671" y="19" width="1" height="6" fill="#fff"/>
<rect x="671" y="136" width="1" height="7" fill="#fff"/>
<rect x="690" y="19" width="1" height="6" fill="#fff"/>
<rect x="690" y="136" width="1" height="7" fill="#fff"/>
<rect x="132" y="19" width="10" height="1" fill="#fff"/>
<rect x="135" y="21" width="7" height="1" fill="#fff"/>
<rect x="135" y="23" width="7" height="1" fill="#fff"/>
<rect x="135" y="26" width="7" height="1" fill="#fff"/>
<rect x="135" y="28" width="7" height="1" fill="#fff"/>
<rect x="135" y="31" width="7" height="1" fill="#fff"/>
<rect x="135" y="33" width="7" height="1" fill="#fff"/>
<rect x="135" y="36" width="7" height="1" fill="#fff"/>
<rect x="135" y="38" width="7" height="1" fill="#fff"/>
<rect x="135" y="41" width="7" height="1" fill="#fff"/>
<rect x="132" y="43" width="10" height="1" fill="#fff"/>
<rect x="135" y="46" width="7" height="1" fill="#fff"/>
<rect x="135" y="48" width="7" height="1" fill="#fff"/>
<rect x="135" y="50" width="7" height="1" fill="#fff"/>
<rect x="135" y="53" width="7" height="1" fill="#fff"/>
<rect x="135" y="55" width="7" height="1" fill="#fff"/>
<rect x="135" y="58" width="7" height="1" fill="#fff"/>
<rect x="135" y="60" width="7" height="1" fill="#fff"/>
<rect x="135" y="63" width="7" height="1" fill="#fff"/>
<rect x="135" y="65" width="7" height="1" fill="#fff"/>
<rect x="132" y="68" width="10" height="1" fill="#fff"/>
<rect x="135" y="70" width="7" height="1" fill="#fff"/>
<rect x="135" y="73" width="7" height="1" fill="#fff"/>
<rect x="135" y="75" width="7" height="1" fill="#fff"/>
<rect x="135" y="78" width="7" height="1" fill="#fff"/>
<rect x="135" y="80" width="7" height="1" fill="#fff"/>
<rect x="135" y="82" width="7" height="1" fill="#fff"/>
<rect x="135" y="85" width="7" height="1" fill="#fff"/>
<rect x="135" y="87" width="7" height="1" fill="#fff"/>
<rect x="135" y="90" width="7" height="1" fill="#fff"/>
<rect x="132" y="92" width="10" height="1" fill="#fff"/>
<rect x="135" y="95" width="7" height="1" fill="#fff"/>
<rect x="135" y="97" width="7" height="1" fill="#fff"/>
<rect x="135" y="100" width="7" height="1" fill="#fff"/>
<rect x="135" y="102" width="7" height="1" fill="#fff"/>
<rect x="135" y="105" width="7" height="1" fill="#fff"/>
<rect x="135" y="107" width="7" height="1" fill="#fff"/>
<rect x="135" y="110" width="7" height="1" fill="#fff"/>
<rect x="135" y="112" width="7" height="1" fill="#fff"/>
<rect x="135" y="114" width="7" height="1" fill="#fff"/>
<rect x="132" y="117" width="10" height="1" fill="#fff"/>
<rect x="135" y="119" width="7" height="1" fill="#fff"/>
<rect x="135" y="122" width="7" height="1" fill="#fff"/>
<rect x="135" y="124" width="7" height="1" fill="#fff"/>
<rect x="135" y="127" width="7" height="1" fill="#fff"/>
<rect x="135" y="129" width="7" height="1" fill="#fff"/>
<rect x="135" y="132" width="7" height="1" fill="#fff"/>
<rect x="135" y="134" width="7" height="1" fill="#fff"/>
<rect x="135" y="137" width="7" height="1" fill="#fff"/>
<rect x="135" y="139" width="7" height="1" fill="#fff"/>
<rect x="132" y="142" width="10" height="1" fill="#fff"/>
<rect x="707" y="19" width="10" height="1" fill="#fff"/>
<rect x="707" y="21" width="7" height="1" fill="#fff"/>
<rect x="707" y="23" width="7" height="1" fill="#fff"/>
<rect x="707" y="26" width="7" height="1" fill="#fff"/>
<rect x="707" y="28" width="7" height="1" fill="#fff"/>
<rect x="707" y="31" width="7" height="1" fill="#fff"/>
<rect x="707" y="33" width="7" height="1" fill="#fff"/>
<rect x="707" y="36" width="7" height="1" fill="#fff"/>
<rect x="707" y="38" width="7" height="1" fill="#fff"/>
<rect x="707" y="41" width="7" height="1" fill="#fff"/>
<rect x="707" y="43" width="10" height="1" fill="#fff"/>
<rect x="707" y="46" width="7" height="1" fill="#fff"/>
<rect x="707" y="48" width="7" height="1" fill="#fff"/>
<rect x="707" y="50" width="7" height="1" fill="#fff"/>
<rect x="707" y="53" width="7" height="1" fill="#fff"/>
<rect x="707" y="55" width="7" height="1" fill="#fff"/>
<rect x="707" y="58" width="7" height="1" fill="#fff"/>
<rect x="707" y="60" width="7" height="1" fill="#fff"/>
<rect x="707" y="63" width="7" height="1" fill="#fff"/>
<rect x="707" y="65" width="7" height="1" fill="#fff"/>
<rect x="707" y="68" width="10" height="1" fill="#fff"/>
<rect x="707" y="70" width="7" height="1" fill="#fff"/>
<rect x="707" y="73" width="7" height="1" fill="#fff"/>
<rect x="707" y="75" width="7" height="1" fill="#fff"/>
<rect x="707" y="78" width="7" height="1" fill="#fff"/>
<rect x="707" y="80" width="7" height="1" fill="#fff"/>
<rect x="707" y="82" width="7" height="1" fill="#fff"/>
<rect x="707" y="85" width="7" height="1" fill="#fff"/>
<rect x="707" y="87" width="7" height="1" fill="#fff"/>
<rect x="707" y="90" width="7" height="1" fill="#fff"/>
<rect x="707" y="92" width="10" height="1" fill="#fff"/>
<rect x="707" y="95" width="7" height="1" fill="#fff"/>
<rect x="707" y="97" width="7" height="1" fill="#fff"/>
<rect x="707" y="100" width="7" height="1" fill="#fff"/>
<rect x="707" y="102" width="7" height="1" fill="#fff"/>
<rect x="707" y="105" width="7" height="1" fill="#fff"/>
<rect x="707" y="107" width="7" height="1" fill="#fff"/>
<rect x="707" y="110" width="7" height="1" fill="#fff"/>
<rect x="707" y="112" width="7" height="1" fill="#fff"/>
<rect x="707" y="114" width="7" height="1" fill="#fff"/>
<rect x="707" y="117" width="10" height="1" fill="#fff"/>
<rect x="707" y="119" width="7" height="1" fill="#fff"/>
<rect x="707" y="122" width="7" height="1" fill="#fff"/>
<rect x="707" y="124" width="7" height="1" fill="#fff"/>
<rect x="707" y="127" width="7" height="1" fill="#fff"/>
<rect x="707" y="129" width="7" height="1" fill="#fff"/>
<rect x="707" y="132" width="7" height="1" fill="#fff"/>
<rect x="707" y="134" width="7" height="1" fill="#fff"/>
<rect x="707" y="137" width="7" height="1" fill="#fff"/>
<rect x="707" y="139" width="7" height="1" fill="#fff"/>
<rect x="707" y="142" width="10" height="1" fill="#fff"/>
<rect x="141" y="164" width="1" height="124" fill="#fff"/>
<rect x="707" y="164" width="1" height="124" fill="#fff"/>
<rect x="135" y="164" width="582" height="1" fill="#fff"/>
<rect x="132" y="287" width="585" height="1" fill="#fff"/>
<rect x="160" y="164" width="1" height="6" fill="#fff"/>
<rect x="160" y="281" width="1" height="7" fill="#fff"/>
<rect x="179" y="164" width="1" height="6" fill="#fff"/>
<rect x="179" y="281" width="1" height="7" fill="#fff"/>
<rect x="197" y="164" width="1" height="6" fill="#fff"/>
<rect x="197" y="281" width="1" height="7" fill="#fff"/>
<rect x="216" y="164" width="1" height="6" fill="#fff"/>
<rect x="216" y="281" width="1" height="7" fill="#fff"/>
<rect x="235" y="164" width="1" height="9" fill="#fff"/>
<rect x="235" y="278" width="1" height="10" fill="#fff"/>
<rect x="254" y="164" width="1" height="6" fill="#fff"/>
<rect x="254" y="281" width="1" height="7" fill="#fff"/>
<rect x="273" y="164" width="1" height="6" fill="#fff"/>
<rect x="273" y="281" width="1" height="7" fill="#fff"/>
<rect x="292" y="164" width="1" height="6" fill="#fff"/>
<rect x="292" y="281" width="1" height="7" fill="#fff"/>
<rect x="311" y="164" width="1" height="6" fill="#fff"/>
<rect x="311" y="281" width="1" height="7" fill="#fff"/>
<rect x="330" y="164" width="1" height="9" fill="#fff"/>
<rect x="330" y="278" width="1" height="10" fill="#fff"/>
<rect x="349" y="164" width="1" height="6" fill="#fff"/>
<rect x="349" y="281" width="1" height="7" fill="#fff"/>
<rect x="368" y="164" width="1" height="6" fill="#fff"/>
<rect x="368" y="281" width="1" height="7" fill="#fff"/>
<rect x="387" y="164" width="1" height="6" fill="#fff"/>
<rect x="387" y="281" width="1" height="7" fill="#fff"/>
<rect x="406" y="164" width="1" height="6" fill="#fff"/>
<rect x="406" y="281" width="1" height="7" fill="#fff"/>
<rect x="425" y="164" width="1" height="9" fill="#fff"/>
<rect x="425" y="278" width="1" height="10" fill="#fff"/>
<rect x="444" y="164" width="1" height="6" fill="#fff"/>
<rect x="444" y="281" width="1" height="7" fill="#fff"/>
<rect x="463" y="164" width="1" height="6" fill="#fff"/>
<rect x="463" y="281" width="1" height="7" fill="#fff"/>
<rect x="482" y="164" width="1" height="6" fill="#fff"/>
<rect x="482" y="281" width="1" height="7" fill="#fff"/>
<rect x="501" y="164" width="1" height="6" fill="#fff"/>
<rect x="501" y="281" width="1" height="7" fill="#fff"/>
<rect x="520" y="164" width="1" height="9" fill="#fff"/>
<rect x="520" y="278" width="1" height="10" fill="#fff"/>
<rect x="539" y="164" width="1" height="6" fill="#fff"/>
<rect x="539" y="281" width="1" height="7" fill="#fff"/>
<rect x="558" y="164" width="1" height="6" fill="#fff"/>
<rect x="558" y="281" width="1" height="7" fill="#fff"/>
<rect x="577" y="164" width="1" height="6" fill="#fff"/>
<rect x="577" y="281" width="1" height="7" fill="#fff"/>
<rect x="596" y="164" width="1" height="6" fill="#fff"/>
<rect x="596" y="281" width="1" height="7" fill="#fff"/>
<rect x="615" y="164" width="1" height="9" fill="#fff"/>
<rect x="615" y="278" width="1" height="10" fill="#fff"/>
<rect x="634" y="164" width="1" height="6" fill="#fff"/>
<rect x="634" y="281" width="1" height="7" fill="#fff"/>
<rect x="653" y="164" width="1" height="6" fill="#fff"/>
<rect x="653" y="281" width="1" height="7" fill="#fff"/>
<rect x="671" y="164" width="1" height="6" fill="#fff"/>
<rect x="671" y="281" width="1" height="7" fill="#fff"/>
<rect x="690" y="164" width="1" height="6" fill="#fff"/>
<rect x="690" y="281" width="1" height="7" fill="#fff"/>
<rect x="707" y="164" width="10" height="1" fill="#fff"/>
<rect x="707" y="166" width="7" height="1" fill="#fff"/>
<rect x="707" y="168" width="7" height="1" fill="#fff"/>
<rect x="707" y="171" width="7" height="1" fill="#fff"/>
<rect x="707" y="173" width="7" height="1" fill="#fff"/>
<rect x="707" y="176" width="7" height="1" fill="#fff"/>
<rect x="707" y="178" width="7" height="1" fill="#fff"/>
<rect x="707" y="181" width="7" height="1" fill="#fff"/>
<rect x="707" y="183" width="7" height="1" fill="#fff"/>
<rect x="707" y="186" width="7" height="1" fill="#fff"/>
<rect x="707" y="188" width="10" height="1" fill="#fff"/>
<rect x="707" y="191" width="7" height="1" fill="#fff"/>
<rect x="707" y="193" width="7" height="1" fill="#fff"/>
<rect x="707" y="195" width="7" height="1" fill="#fff"/>
<rect x="707" y="198" width="7" height="1" fill="#fff"/>
<rect x="707" y="200" width="7" height="1" fill="#fff"/>
<rect x="707" y="203" width="7" height="1" fill="#fff"/>
<rect x="707" y="205" width="7" height="1" fill="#fff"/>
<rect x="707" y="208" width="7" height="1" fill="#fff"/>
<rect x="707" y="210" width="7" height="1" fill="#fff"/>
<rect x="707" y="213" width="10" height="1" fill="#fff"/>
<rect x="707" y="215" width="7" height="1" fill="#fff"/>
<rect x="707" y="218" width="7" height="1" fill="#fff"/>
<rect x="707" y="220" width="7" height="1" fill="#fff"/>
<rect x="707" y="223" width="7" height="1" fill="#fff"/>
<rect x="707" y="225" width="7" height="1" fill="#fff"/>
<rect x="707" y="227" width="7" height="1" fill="#fff"/>
<rect x="707" y="230" width="7" height="1" fill="#fff"/>
<rect x="707" y="232" width="7" height="1" fill="#fff"/>
<rect x="707" y="235" width="7" height="1" fill="#fff"/>
<rect x="707" y="237" width="10" height="1" fill="#fff"/>
<rect x="707" y="240" width="7" height="1" fill="#fff"/>
<rect x="707" y="242" width="7" height="1" fill="#fff"/>
<rect x="707" y="245" width="7" height="1" fill="#fff"/>
<rect x="707" y="247" width="7" height="1" fill="#fff"/>
<rect x="707" y="250" width="7" height="1" fill="#fff"/>
<rect x="707" y="252" width="7" height="1" fill="#fff"/>
<rect x="707" y="255" width="7" height="1" fill="#fff"/>
<rect x="707" y="257" width="7" height="1" fill="#fff"/>
<rect x="707" y="259" width="7" height="1" fill="#fff"/>
<rect x="707" y="262" width="10" height="1" fill="#fff"/>
<rect x="707" y="264" width="7" height="1" fill="#fff"/>
<rect x="707" y="267" width="7" height="1" fill="#fff"/>
<rect x="707" y="269" width="7" height="1" fill="#fff"/>
<rect x="707" y="272" width="7" height="1" fill="#fff"/>
<rect x="707" y="274" width="7" height="1" fill="#fff"/>
<rect x="707" y="277" width="7" height="1" fill="#fff"/>
<rect x="707" y="279" width="7" height="1" fill="#fff"/>
<rect x="707" y="282" width="7" height="1" fill="#fff"/>
<rect x="707" y="284" width="7" height="1" fill="#fff"/>
<rect x="707" y="287" width="10" height="1" fill="#fff"/>
<rect x="142" y="296" width="1" height="123" fill="#fff"/>
<rect x="708" y="296" width="1" height="123" fill="#fff"/>
<rect x="133" y="296" width="585" height="1" fill="#fff"/>
<rect x="133" y="418" width="585" height="1" fill="#fff"/>
<rect x="161" y="296" width="1" height="6" fill="#fff"/>
<rect x="161" y="412" width="1" height="7" fill="#fff"/>
<rect x="180" y="296" width="1" height="6" fill="#fff"/>
<rect x="180" y="412" width="1" height="7" fill="#fff"/>
<rect x="198" y="296" width="1" height="6" fill="#fff"/>
<rect x="198" y="412" width="1" height="7" fill="#fff"/>
<rect x="217" y="296" width="1" height="6" fill="#fff"/>
<rect x="217" y="412" width="1" height="7" fill="#fff"/>
<rect x="236" y="296" width="1" height="9" fill="#fff"/>
<rect x="236" y="409" width="1" height="10" fill="#fff"/>
<rect x="255" y="296" width="1" height="6" fill="#fff"/>
<rect x="255" y="412" width="1" height="7" fill="#fff"/>
<rect x="274" y="296" width="1" height="6" fill="#fff"/>
<rect x="274" y="412" width="1" height="7" fill="#fff"/>
<rect x="293" y="296" width="1" height="6" fill="#fff"/>
<rect x="293" y="412" width="1" height="7" fill="#fff"/>
<rect x="312" y="296" width="1" height="6" fill="#fff"/>
<rect x="312" y="412" width="1" height="7" fill="#fff"/>
<rect x="331" y="296" width="1" height="9" fill="#fff"/>
<rect x="331" y="409" width="1" height="10" fill="#fff"/>
<rect x="350" y="296" width="1" height="6" fill="#fff"/>
<rect x="350" y="412" width="1" height="7" fill="#fff"/>
<rect x="369" y="296" width="1" height="6" fill="#fff"/>
<rect x="369" y="412" width="1" height="7" fill="#fff"/>
<rect x="388" y="296" width="1" height="6" fill="#fff"/>
<rect x="388" y="412" width="1" height="7" fill="#fff"/>
<rect x="407" y="296" width="1" height="6" fill="#fff"/>
<rect x="407" y="412" width="1" height="7" fill="#fff"/>
<rect x="426" y="296" width="1" height="9" fill="#fff"/>
<rect x="426" y="409" width="1" height="10" fill="#fff"/>
<rect x="445" y="296" width="1" height="6" fill="#fff"/>
<rect x="445" y="412" width="1" height="7" fill="#fff"/>
<rect x="464" y="296" width="1" height="6" fill="#fff"/>
<rect x="464" y="412" width="1" height="7" fill="#fff"/>
<rect x="483" y="296" width="1" height="6" fill="#fff"/>
<rect x="483" y="412" width="1" height="7" fill="#fff"/>
<rect x="502" y="296" width="1" height="6" fill="#fff"/>
<rect x="502" y="412" width="1" height="7" fill="#fff"/>
<rect x="521" y="296" width="1" height="9" fill="#fff"/>
<rect x="521" y="409" width="1" height="10" fill="#fff"/>
<rect x="540" y="296" width="1" height="6" fill="#fff"/>
<rect x="540" y="412" width="1" height="7" fill="#fff"/>
<rect x="559" y="296" width="1" height="6" fill="#fff"/>
<rect x="559" y="412" width="1" height="7" fill="#fff"/>
<rect x="578" y="296" width="1" height="6" fill="#fff"/>
<rect x="578" y="412" width="1" height="7" fill="#fff"/>
<rect x="597" y="296" width="1" height="6" fill="#fff"/>
<rect x="597" y="412" width="1" height="7" fill="#fff"/>
<rect x="616" y="296" width="1" height="9" fill="#fff"/>
<rect x="616" y="409" width="1" height="10" fill="#fff"/>
<rect x="635" y="296" width="1" height="6" fill="#fff"/>
<rect x="635" y="412" width="1" height="7" fill="#fff"/>
<rect x="654" y="296" width="1" height="6" fill="#fff"/>
<rect x="654" y="412" width="1" height="7" fill="#fff"/>
<rect x="672" y="296" width="1" height="6" fill="#fff"/>
<rect x="672" y="412" width="1" height="7" fill="#fff"/>
<rect x="691" y="296" width="1" height="6" fill="#fff"/>
<rect x="691" y="412" width="1" height="7" fill="#fff"/>
<rect x="133" y="296" width="10" height="1" fill="#fff"/>
<rect x="136" y="298" width="7" height="1" fill="#fff"/>
<rect x="136" y="300" width="7" height="1" fill="#fff"/>
<rect x="136" y="303" width="7" height="1" fill="#fff"/>
<rect x="136" y="305" width="7" height="1" fill="#fff"/>
<rect x="136" y="308" width="7" height="1" fill="#fff"/>
<rect x="136" y="310" width="7" height="1" fill="#fff"/>
<rect x="136" y="313" width="7" height="1" fill="#fff"/>
<rect x="136" y="315" width="7" height="1" fill="#fff"/>
<rect x="136" y="317" width="7" height="1" fill="#fff"/>
<rect x="133" y="320" width="10" height="1" fill="#fff"/>
<rect x="136" y="322" width="7" height="1" fill="#fff"/>
<rect x="136" y="325" width="7" height="1" fill="#fff"/>
<rect x="136" y="327" width="7" height="1" fill="#fff"/>
<rect x="136" y="330" width="7" height="1" fill="#fff"/>
<rect x="136" y="332" width="7" height="1" fill="#fff"/>
<rect x="136" y="335" width="7" height="1" fill="#fff"/>
<rect x="136" y="337" width="7" height="1" fill="#fff"/>
<rect x="136" y="339" width="7" height="1" fill="#fff"/>
<rect x="136" y="342" width="7" height="1" fill="#fff"/>
<rect x="133" y="344" width="10" height="1" fill="#fff"/>
<rect x="136" y="347" width="7" height="1" fill="#fff"/>
<rect x="136" y="349" width="7" height="1" fill="#fff"/>
<rect x="136" y="352" width="7" height="1" fill="#fff"/>
<rect x="136" y="354" width="7" height="1" fill="#fff"/>
<rect x="136" y="357" width="7" height="1" fill="#fff"/>
<rect x="136" y="359" width="7" height="1" fill="#fff"/>
<rect x="136" y="361" width="7" height="1" fill="#fff"/>
<rect x="136" y="364" width="7" height="1" fill="#fff"/>
<rect x="136" y="366" width="7" height="1" fill="#fff"/>
<rect x="133" y="369" width="10" height="1" fill="#fff"/>
<rect x="136" y="371" width="7" height="1" fill="#fff"/>
<rect x="136" y="374" width="7" height="1" fill="#fff"/>
<rect x="136" y="376" width="7" height="1" fill="#fff"/>
<rect x="136" y="378" width="7" height="1" fill="#fff"/>
<rect x="136" y="381" width="7" height="1" fill="#fff"/>
<rect x="136" y="383" width="7" height="1" fill="#fff"/>
<rect x="136" y="386" width="7" height="1" fill="#fff"/>
<rect x="136" y="388" width="7" height="1" fill="#fff"/>
<rect x="136" y="391" width="7" height="1" fill="#fff"/>
<rect x="133" y="393" width="10" height="1" fill="#fff"/>
<rect x="136" y="396" width="7" height="1" fill="#fff"/>
<rect x="136" y="398" width="7" height="1" fill="#fff"/>
<rect x="136" y="400" width="7" height="1" fill="#fff"/>
<rect x="136" y="403" width="7" height="1" fill="#fff"/>
<rect x="136" y="405" width="7" height="1" fill="#fff"/>
<rect x="136" y="408" width="7" height="1" fill="#fff"/>
<rect x="136" y="410" width="7" height="1" fill="#fff"/>
<rect x="136" y="413" width="7" height="1" fill="#fff"/>
<rect x="136" y="415" width="7" height="1" fill="#fff"/>
<rect x="133" y="418" width="10" height="1" fill="#fff"/>
<rect x="708" y="296" width="10" height="1" fill="#fff"/>
<rect x="708" y="298" width="7" height="1" fill="#fff"/>
<rect x="708" y="300" width="7" height="1" fill="#fff"/>
<rect x="708" y="303" width="7" height="1" fill="#fff"/>
<rect x="708" y="305" width="7" height="1" fill="#fff"/>
<rect x="708" y="308" width="7" height="1" fill="#fff"/>
<rect x="708" y="310" width="7" height="1" fill="#fff"/>
<rect x="708" y="313" width="7" height="1" fill="#fff"/>
<rect x="708" y="315" width="7" height="1" fill="#fff"/>
<rect x="708" y="317" width="7" height="1" fill="#fff"/>
<rect x="708" y="320" width="10" height="1" fill="#fff"/>
<rect x="708" y="322" width="7" height="1" fill="#fff"/>
<rect x="708" y="325" width="7" height="1" fill="#fff"/>
<rect x="708" y="327" width="7" height="1" fill="#fff"/>
<rect x="708" y="330" width="7" height="1" fill="#fff"/>
<rect x="708" y="332" width="7" height="1" fill="#fff"/>
<rect x="708" y="335" width="7" height="1" fill="#fff"/>
<rect x="708" y="337" width="7" height="1" fill="#fff"/>
<rect x="708" y="339" width="7" height="1" fill="#fff"/>
<rect x="708" y="342" width="7" height="1" fill="#fff"/>
<rect x="708" y="344" width="10" height="1" fill="#fff"/>
<rect x="708" y="347" width="7" height="1" fill="#fff"/>
<rect x="708" y="349" width="7" height="1" fill="#fff"/>
<rect x="708" y="352" width="7" height="1" fill="#fff"/>
<rect x="708" y="354" width="7" height="1" fill="#fff"/>
<rect x="708" y="357" width="7" height="1" fill="#fff"/>
<rect x="708" y="359" width="7" height="1" fill="#fff"/>
<rect x="708" y="361" width="7" height="1" fill="#fff"/>
<rect x="708" y="364" width="7" height="1" fill="#fff"/>
<rect x="708" y="366" width="7" height="1" fill="#fff"/>
<rect x="708" y="369" width="10" height="1" fill="#fff"/>
<rect x="708" y="371" width="7" height="1" fill="#fff"/>
<rect x="708" y="374" width="7" height="1" fill="#fff"/>
<rect x="708" y="376" width="7" height="1" fill="#fff"/>
<rect x="708" y="378" width="7" height="1" fill="#fff"/>
<rect x="708" y="381" width="7" height="1" fill="#fff"/>
<rect x="708" y="383" width="7" height="1" fill="#fff"/>
<rect x="708" y="386" width="7" height="1" fill="#fff"/>
<rect x="708" y="388" width="7" height="1" fill="#fff"/>
<rect x="708" y="391" width="7" height="1" fill="#fff"/>
<rect x="708" y="393" width="10" height="1" fill="#fff"/>
<rect x="708" y="396" width="7" height="1" fill="#fff"/>
<rect x="708" y="398" width="7" height="1" fill="#fff"/>
<rect x="708" y="400" width="7" height="1" fill="#fff"/>
<rect x="708" y="403" width="7" height="1" fill="#fff"/>
<rect x="708" y="405" width="7" height="1" fill="#fff"/>
<rect x="708" y="408" width="7" height="1" fill="#fff"/>
<rect x="708" y="410" width="7" height="1" fill="#fff"/>
<rect x="708" y="413" width="7" height="1" fill="#fff"/>
<rect x="708" y="415" width="7" height="1" fill="#fff"/>
<rect x="708" y="418" width="10" height="1" fill="#fff"/>
<rect x="142" y="429" width="1" height="123" fill="#fff"/>
<rect x="708" y="429" width="1" height="123" fill="#fff"/>
<rect x="133" y="429" width="585" height="1" fill="#fff"/>
<rect x="133" y="551" width="585" height="1" fill="#fff"/>
<rect x="161" y="429" width="1" height="6" fill="#fff"/>
<rect x="161" y="545" width="1" height="7" fill="#fff"/>
<rect x="180" y="429" width="1" height="6" fill="#fff"/>
<rect x="180" y="545" width="1" height="7" fill="#fff"/>
<rect x="198" y="429" width="1" height="6" fill="#fff"/>
<rect x="198" y="545" width="1" height="7" fill="#fff"/>
<rect x="217" y="429" width="1" height="6" fill="#fff"/>
<rect x="217" y="545" width="1" height="7" fill="#fff"/>
<rect x="236" y="429" width="1" height="9" fill="#fff"/>
<rect x="236" y="542" width="1" height="10" fill="#fff"/>
<rect x="255" y="429" width="1" height="6" fill="#fff"/>
<rect x="255" y="545" width="1" height="7" fill="#fff"/>
<rect x="274" y="429" width="1" height="6" fill="#fff"/>
<rect x="274" y="545" width="1" height="7" fill="#fff"/>
<rect x="293" y="429" width="1" height="6" fill="#fff"/>
<rect x="293" y="545" width="1" height="7" fill="#fff"/>
<rect x="312" y="429" width="1" height="6" fill="#fff"/>
<rect x="312" y="545" width="1" height="7" fill="#fff"/>
<rect x="331" y="429" width="1" height="9" fill="#fff"/>
<rect x="331" y="542" width="1" height="10" fill="#fff"/>
<rect x="350" y="429" width="1" height="6" fill="#fff"/>
<rect x="350" y="545" width="1" height="7" fill="#fff"/>
<rect x="369" y="429" width="1" height="6" fill="#fff"/>
<rect x="369" y="545" width="1" height="7" fill="#fff"/>
<rect x="388" y="429" width="1" height="6" fill="#fff"/>
<rect x="388" y="545" width="1" height="7" fill="#fff"/>
<rect x="407" y="429" width="1" height="6" fill="#fff"/>
<rect x="407" y="545" width="1" height="7" fill="#fff"/>
<rect x="426" y="429" width="1" height="9" fill="#fff"/>
<rect x="426" y="542" width="1" height="10" fill="#fff"/>
<rect x="445" y="429" width="1" height="6" fill="#fff"/>
<rect x="445" y="545" width="1" height="7" fill="#fff"/>
<rect x="464" y="429" width="1" height="6" fill="#fff"/>
<rect x="464" y="545" width="1" height="7" fill="#fff"/>
<rect x="483" y="429" width="1" height="6" fill="#fff"/>
<rect x="483" y="545" width="1" height="7" fill="#fff"/>
<rect x="502" y="429" width="1" height="6" fill="#fff"/>
<rect x="502" y="545" width="1" height="7" fill="#fff"/>
<rect x="521" y="429" width="1" height="9" fill="#fff"/>
<rect x="521" y="542" width="1" height="10" fill="#fff"/>
<rect x="540" y="429" width="1" height="6" fill="#fff"/>
<rect x="540" y="545" width="1" height="7" fill="#fff"/>
<rect x="559" y="429" width="1" height="6" fill="#fff"/>
<rect x="559" y="545" width="1" height="7" fill="#fff"/>
<rect x="578" y="429" width="1" height="6" fill="#fff"/>
<rect x="578" y="545" width="1" height="7" fill="#fff"/>
<rect x="597" y="429" width="1" height="6" fill="#fff"/>
<rect x="597" y="545" width="1" height="7" fill="#fff"/>
<rect x="616" y="429" width="1" height="9" fill="#fff"/>
<rect x="616" y="542" width="1" height="10" fill="#fff"/>
<rect x="635" y="429" width="1" height="6" fill="#fff"/>
<rect x="635" y="545" width="1" height="7" fill="#fff"/>
<rect x="654" y="429" width="1" height="6" fill="#fff"/>
<rect x="654" y="545" width="1" height="7" fill="#fff"/>
<rect x="672" y="429" width="1" height="6" fill="#fff"/>
<rect x="672" y="545" width="1" height="7" fill="#fff"/>
<rect x="691" y="429" width="1" height="6" fill="#fff"/>
<rect x="691" y="545" width="1" height="7" fill="#fff"/>
<rect x="133" y="429" width="10" height="1" fill="#fff"/>
<rect x="136" y="431" width="7" height="1" fill="#fff"/>
<rect x="136" y="433" width="7" height="1" fill="#fff"/>
<rect x="136" y="436" width="7" height="1" fill="#fff"/>
<rect x="136" y="438" width="7" height="1" fill="#fff"/>
<rect x="136" y="441" width="7" height="1" fill="#fff"/>
<rect x="136" y="443" width="7" height="1" fill="#fff"/>
<rect x="136" y="446" width="7" height="1" fill="#fff"/>
<rect x="136" y="448" width="7" height="1" fill="#fff"/>
<rect x="136" y="450" width="7" height="1" fill="#fff"/>
<rect x="133" y="453" width="10" height="1" fill="#fff"/>
<rect x="136" y="455" width="7" height="1" fill="#fff"/>
<rect x="136" y="458" width="7" height="1" fill="#fff"/>
<rect x="136" y="460" width="7" height="1" fill="#fff"/>
<rect x="136" y="463" width="7" height="1" fill="#fff"/>
<rect x="136" y="465" width="7" height="1" fill="#fff"/>
<rect x="136" y="468" width="7" height="1" fill="#fff"/>
<rect x="136" y="470" width="7" height="1" fill="#fff"/>
<rect x="136" y="472" width="7" height="1" fill="#fff"/>
<rect x="136" y="475" width="7" height="1" fill="#fff"/>
<rect x="133" y="477" width="10" height="1" fill="#fff"/>
<rect x="136" y="480" width="7" height="1" fill="#fff"/>
<rect x="136" y="482" width="7" height="1" fill="#fff"/>
<rect x="136" y="485" width="7" height="1" fill="#fff"/>
<rect x="136" y="487" width="7" height="1" fill="#fff"/>
<rect x="136" y="490" width="7" height="1" fill="#fff"/>
<rect x="136" y="492" width="7" height="1" fill="#fff"/>
<rect x="136" y="494" width="7" height="1" fill="#fff"/>
<rect x="136" y="497" width="7" height="1" fill="#fff"/>
<rect x="136" y="499" width="7" height="1" fill="#fff"/>
<rect x="133" y="502" width="10" height="1" fill="#fff"/>
<rect x="136" y="504" width="7" height="1" fill="#fff"/>
<rect x="136" y="507" width="7" height="1" fill="#fff"/>
<rect x="136" y="509" width="7" height="1" fill="#fff"/>
<rect x="136" y="511" width="7" height="1" fill="#fff"/>
<rect x="136" y="514" width="7" height="1" fill="#fff"/>
<rect x="136" y="516" width="7" height="1" fill="#fff"/>
<rect x="136" y="519" width="7" height="1" fill="#fff"/>
<rect x="136" y="521" width="7" height="1" fill="#fff"/>
<rect x="136" y="524" width="7" height="1" fill="#fff"/>
<rect x="133" y="526" width="10" height="1" fill="#fff"/>
<rect x="136" y="529" width="7" height="1" fill="#fff"/>
<rect x="136" y="531" width="7" height="1" fill="#fff"/>
<rect x="136" y="533" width="7" height="1" fill="#fff"/>
<rect x="136" y="536" width="7" height="1" fill="#fff"/>
<rect x="136" y="538" width="7" height="1" fill="#fff"/>
<rect x="136" y="541" width="7" height="1" fill="#fff"/>
<rect x="136" y="543" width="7" height="1" fill="#fff"/>
<rect x="136" y="546" width="7" height="1" fill="#fff"/>
<rect x="136" y="548" width="7" height="1" fill="#fff"/>
<rect x="133" y="551" width="10" height="1" fill="#fff"/>
<rect x="708" y="429" width="10" height="1" fill="#fff"/>
<rect x="708" y="431" width="7" height="1" fill="#fff"/>
<rect x="708" y="433" width="7" height="1" fill="#fff"/>
<rect x="708" y="436" width="7" height="1" fill="#fff"/>
<rect x="708" y="438" width="7" height="1" fill="#fff"/>
<rect x="708" y="441" width="7" height="1" fill="#fff"/>
<rect x="708" y="443" width="7" height="1" fill="#fff"/>
<rect x="708" y="446" width="7" height="1" fill="#fff"/>
<rect x="708" y="448" width="7" height="1" fill="#fff"/>
<rect x="708" y="450" width="7" height="1" fill="#fff"/>
<rect x="708" y="453" width="10" height="1" fill="#fff"/>
<rect x="708" y="455" width="7" height="1" fill="#fff"/>
<rect x="708" y="458" width="7" height="1" fill="#fff"/>
<rect x="708" y="460" width="7" height="1" fill="#fff"/>
<rect x="708" y="463" width="7" height="1" fill="#fff"/>
<rect x="708" y="465" width="7" height="1" fill="#fff"/>
<rect x="708" y="468" width="7" height="1" fill="#fff"/>
<rect x="708" y="470" width="7" height="1" fill="#fff"/>
<rect x="708" y="472" width="7" height="1" fill="#fff"/>
<rect x="708" y="475" width="7" height="1" fill="#fff"/>
<rect x="708" y="477" width="10" height="1" fill="#fff"/>
<rect x="708" y="480" width="7" height="1" fill="#fff"/>
<rect x="708" y="482" width="7" height="1" fill="#fff"/>
<rect x="708" y="485" width="7" height="1" fill="#fff"/>
<rect x="708" y="487" width="7" height="1" fill="#fff"/>
<rect x="708" y="490" width="7" height="1" fill="#fff"/>
<rect x="708" y="492" width="7" height="1" fill="#fff"/>
<rect x="708" y="494" width="7" height="1" fill="#fff"/>
<rect x="708" y="497" width="7" height="1" fill="#fff"/>
<rect x="708" y="499" width="7" height="1" fill="#fff"/>
<rect x="708" y="502" width="10" height="1" fill="#fff"/>
<rect x="708" y="504" width="7" height="1" fill="#fff"/>
<rect x="708" y="507" width="7" height="1" fill="#fff"/>
<rect x="708" y="509" width="7" height="1" fill="#fff"/>
<rect x="708" y="511" width="7" height="1" fill="#fff"/>
<rect x="708" y="514" width="7" height="1" fill="#fff"/>
<rect x="708" y="516" width="7" height="1" fill="#fff"/>
<rect x="708" y="519" width="7" height="1" fill="#fff"/>
<rect x="708" y="521" width="7" height="1" fill="#fff"/>
<rect x="708" y="524" width="7" height="1" fill="#fff"/>
<rect x="708" y="526" width="10" height="1" fill="#fff"/>
<rect x="708" y="529" width="7" height="1" fill="#fff"/>
<rect x="708" y="531" width="7" height="1" fill="#fff"/>
<rect x="708" y="533" width="7" height="1" fill="#fff"/>
<rect x="708" y="536" width="7" height="1" fill="#fff"/>
<rect x="708" y="538" width="7" height="1" fill="#fff"/>
<rect x="708" y="541" width="7" height="1" fill="#fff"/>
<rect x="708" y="543" width="7" height="1" fill="#fff"/>
<rect x="708" y="546" width="7" height="1" fill="#fff"/>
<rect x="708" y="548" width="7" height="1" fill="#fff"/>
<rect x="708" y="551" width="10" height="1" fill="#fff"/>
<rect x="142" y="561" width="1" height="124" fill="#fff"/>
<rect x="708" y="561" width="1" height="124" fill="#fff"/>
<rect x="133" y="561" width="585" height="1" fill="#fff"/>
<rect x="133" y="684" width="585" height="1" fill="#fff"/>
<rect x="161" y="561" width="1" height="6" fill="#fff"/>
<rect x="161" y="678" width="1" height="7" fill="#fff"/>
<rect x="180" y="561" width="1" height="6" fill="#fff"/>
<rect x="180" y="678" width="1" height="7" fill="#fff"/>
<rect x="198" y="561" width="1" height="6" fill="#fff"/>
<rect x="198" y="678" width="1" height="7" fill="#fff"/>
<rect x="217" y="561" width="1" height="6" fill="#fff"/>
<rect x="217" y="678" width="1" height="7" fill="#fff"/>
<rect x="236" y="561" width="1" height="9" fill="#fff"/>
<rect x="236" y="675" width="1" height="10" fill="#fff"/>
<rect x="255" y="561" width="1" height="6" fill="#fff"/>
<rect x="255" y="678" width="1" height="7" fill="#fff"/>
<rect x="274" y="561" width="1" height="6" fill="#fff"/>
<rect x="274" y="678" width="1" height="7" fill="#fff"/>
<rect x="293" y="561" width="1" height="6" fill="#fff"/>
<rect x="293" y="678" width="1" height="7" fill="#fff"/>
<rect x="312" y="561" width="1" height="6" fill="#fff"/>
<rect x="312" y="678" width="1" height="7" fill="#fff"/>
<rect x="331" y="561" width="1" height="9" fill="#fff"/>
<rect x="331" y="675" width="1" height="10" fill="#fff"/>
<rect x="350" y="561" width="1" height="6" fill="#fff"/>
<rect x="350" y="678" width="1" height="7" fill="#fff"/>
<rect x="369" y="561" width="1" height="6" fill="#fff"/>
<rect x="369" y="678" width="1" height="7" fill="#fff"/>
<rect x="388" y="561" width="1" height="6" fill="#fff"/>
<rect x="388" y="678" width="1" height="7" fill="#fff"/>
<rect x="407" y="561" width="1" height="6" fill="#fff"/>
<rect x="407" y="678" width="1" height="7" fill="#fff"/>
<rect x="426" y="561" width="1" height="9" fill="#fff"/>
<rect x="426" y="675" width="1" height="10" fill="#fff"/>
<rect x="445" y="561" width="1" height="6" fill="#fff"/>
<rect x="445" y="678" width="1" height="7" fill="#fff"/>
<rect x="464" y="561" width="1" height="6" fill="#fff"/>
<rect x="464" y="678" width="1" height="7" fill="#fff"/>
<rect x="483" y="561" width="1" height="6" fill="#fff"/>
<rect x="483" y="678" width="1" height="7" fill="#fff"/>
<rect x="502" y="561" width="1" height="6" fill="#fff"/>
<rect x="502" y="678" width="1" height="7" fill="#fff"/>
<rect x="521" y="561" width="1" height="9" fill="#fff"/>
<rect x="521" y="675" width="1" height="10" fill="#fff"/>
<rect x="540" y="561" width="1" height="6" fill="#fff"/>
<rect x="540" y="678" width="1" height="7" fill="#fff"/>
<rect x="559" y="561" width="1" height="6" fill="#fff"/>
<rect x="559" y="678" width="1" height="7" fill="#fff"/>
<rect x="578" y="561" width="1" height="6" fill="#fff"/>
<rect x="578" y="678" width="1" height="7" fill="#fff"/>
<rect x="597" y="561" width="1" height="6" fill="#fff"/>
<rect x="597" y="678" width="1" height="7" fill="#fff"/>
<rect x="616" y="561" width="1" height="9" fill="#fff"/>
<rect x="616" y="675" width="1" height="10" fill="#fff"/>
<rect x="635" y="561" width="1" height="6" fill="#fff"/>
<rect x="635" y="678" width="1" height="7" fill="#fff"/>
<rect x="654" y="561" width="1" height="6" fill="#fff"/>
<rect x="654" y="678" width="1" height="7" fill="#fff"/>
<rect x="672" y="561" width="1" height="6" fill="#fff"/>
<rect x="672" y="678" width="1" height="7" fill="#fff"/>
<rect x="691" y="561" width="1" height="6" fill="#fff"/>
<rect x="691" y="678" width="1" height="7" fill="#fff"/>
<rect x="133" y="561" width="10" height="1" fill="#fff"/>
<rect x="136" y="563" width="7" height="1" fill="#fff"/>
<rect x="136" y="565" width="7" height="1" fill="#fff"/>
<rect x="136" y="568" width="7" height="1" fill="#fff"/>
<rect x="136" y="570" width="7" height="1" fill="#fff"/>
<rect x="136" y="573" width="7" height="1" fill="#fff"/>
<rect x="136" y="575" width="7" height="1" fill="#fff"/>
<rect x="136" y="578" width="7" height="1" fill="#fff"/>
<rect x="136" y="580" width="7" height="1" fill="#fff"/>
<rect x="136" y="583" width="7" height="1" fill="#fff"/>
<rect x="133" y="585" width="10" height="1" fill="#fff"/>
<rect x="136" y="588" width="7" height="1" fill="#fff"/>
<rect x="136" y="590" width="7" height="1" fill="#fff"/>
<rect x="136" y="592" width="7" height="1" fill="#fff"/>
<rect x="136" y="595" width="7" height="1" fill="#fff"/>
<rect x="136" y="597" width="7" height="1" fill="#fff"/>
<rect x="136" y="600" width="7" height="1" fill="#fff"/>
<rect x="136" y="602" width="7" height="1" fill="#fff"/>
<rect x="136" y="605" width="7" height="1" fill="#fff"/>
<rect x="136" y="607" width="7" height="1" fill="#fff"/>
<rect x="133" y="610" width="10" height="1" fill="#fff"/>
<rect x="136" y="612" width="7" height="1" fill="#fff"/>
<rect x="136" y="615" width="7" height="1" fill="#fff"/>
<rect x="136" y="617" width="7" height="1" fill="#fff"/>
<rect x="136" y="620" width="7" height="1" fill="#fff"/>
<rect x="136" y="622" width="7" height="1" fill="#fff"/>
<rect x="136" y="624" width="7" height="1" fill="#fff"/>
<rect x="136" y="627" width="7" height="1" fill="#fff"/>
<rect x="136" y="629" width="7" height="1" fill="#fff"/>
<rect x="136" y="632" width="7" height="1" fill="#fff"/>
<rect x="133" y="634" width="10" height="1" fill="#fff"/>
<rect x="136" y="637" width="7" height="1" fill="#fff"/>
<rect x="136" y="639" width="7" height="1" fill="#fff"/>
<rect x="136" y="642" width="7" height="1" fill="#fff"/>
<rect x="136" y="644" width="7" height="1" fill="#fff"/>
<rect x="136" y="647" width="7" height="1" fill="#fff"/>
<rect x="136" y="649" width="7" height="1" fill="#fff"/>
<rect x="136" y="652" width="7" height="1" fill="#fff"/>
<rect x="136" y="654" width="7" height="1" fill="#fff"/>
<rect x="136" y="656" width="7" height="1" fill="#fff"/>
<rect x="133" y="659" width="10" height="1" fill="#fff"/>
<rect x="136" y="661" width="7" height="1" fill="#fff"/>
<rect x="136" y="664" width="7" height="1" fill="#fff"/>
<rect x="136" y="666" width="7" height="1" fill="#fff"/>
<rect x="136" y="669" width="7" height="1" fill="#fff"/>
<rect x="136" y="671" width="7" height="1" fill="#fff"/>
<rect x="136" y="674" width="7" height="1" fill="#fff"/>
<rect x="136" y="676" width="7" height="1" fill="#fff"/>
<rect x="136" y="679" width="7" height="1" fill="#fff"/>
<rect x="136" y="681" width="7" height="1" fill="#fff"/>
<rect x="133" y="684" width="10" height="1" fill="#fff"/>
<rect x="708" y="561" width="10" height="1" fill="#fff"/>
<rect x="708" y="563" width="7" height="1" fill="#fff"/>
<rect x="708" y="565" width="7" height="1" fill="#fff"/>
<rect x="708" y="568" width="7" height="1" fill="#fff"/>
<rect x="708" y="570" width="7" height="1" fill="#fff"/>
<rect x="708" y="573" width="7" height="1" fill="#fff"/>
<rect x="708" y="575" width="7" height="1" fill="#fff"/>
<rect x="708" y="578" width="7" height="1" fill="#fff"/>
<rect x="708" y="580" width="7" height="1" fill="#fff"/>
<rect x="708" y="583" width="7" height="1" fill="#fff"/>
<rect x="708" y="585" width="10" height="1" fill="#fff"/>
<rect x="708" y="588" width="7" height="1" fill="#fff"/>
<rect x="708" y="590" width="7" height="1" fill="#fff"/>
<rect x="708" y="592" width="7" height="1" fill="#fff"/>
<rect x="708" y="595" width="7" height="1" fill="#fff"/>
<rect x="708" y="597" width="7" height="1" fill="#fff"/>
<rect x="708" y="600" width="7" height="1" fill="#fff"/>
<rect x="708" y="602" width="7" height="1" fill="#fff"/>
<rect x="708" y="605" width="7" height="1" fill="#fff"/>
<rect x="708" y="607" width="7" height="1" fill="#fff"/>
<rect x="708" y="610" width="10" height="1" fill="#fff"/>
<rect x="708" y="612" width="7" height="1" fill="#fff"/>
<rect x="708" y="615" width="7" height="1" fill="#fff"/>
<rect x="708" y="617" width="7" height="1" fill="#fff"/>
<rect x="708" y="620" width="7" height="1" fill="#fff"/>
<rect x="708" y="622" width="7" height="1" fill="#fff"/>
<rect x="708" y="624" width="7" height="1" fill="#fff"/>
<rect x="708" y="627" width="7" height="1" fill="#fff"/>
<rect x="708" y="629" width="7" height="1" fill="#fff"/>
<rect x="708" y="632" width="7" height="1" fill="#fff"/>
<rect x="708" y="634" width="10" height="1" fill="#fff"/>
<rect x="708" y="637" width="7" height="1" fill="#fff"/>
<rect x="708" y="639" width="7" height="1" fill="#fff"/>
<rect x="708" y="642" width="7" height="1" fill="#fff"/>
<rect x="708" y="644" width="7" height="1" fill="#fff"/>
<rect x="708" y="647" width="7" height="1" fill="#fff"/>
<rect x="708" y="649" width="7" height="1" fill="#fff"/>
<rect x="708" y="652" width="7" height="1" fill="#fff"/>
<rect x="708" y="654" width="7" height="1" fill="#fff"/>
<rect x="708" y="656" width="7" height="1" fill="#fff"/>
<rect x="708" y="659" width="10" height="1" fill="#fff"/>
<rect x="708" y="661" width="7" height="1" fill="#fff"/>
<rect x="708" y="664" width="7" height="1" fill="#fff"/>
<rect x="708" y="666" width="7" height="1" fill="#fff"/>
<rect x="708" y="669" width="7" height="1" fill="#fff"/>
<rect x="708" y="671" width="7" height="1" fill="#fff"/>
<rect x="708" y="674" width="7" height="1" fill="#fff"/>
<rect x="708" y="676" width="7" height="1" fill="#fff"/>
<rect x="708" y="679" width="7" height="1" fill="#fff"/>
<rect x="708" y="681" width="7" height="1" fill="#fff"/>
<rect x="708" y="684" width="10" height="1" fill="#fff"/>
<rect x="135" y="270" width="7" height="1" fill="#fff"/>
<rect x="135" y="261" width="7" height="1" fill="#fff"/>
<rect x="135" y="254" width="7" height="1" fill="#fff"/>
<rect x="135" y="249" width="7" height="1" fill="#fff"/>
<rect x="135" y="245" width="7" height="1" fill="#fff"/>
<rect x="135" y="241" width="7" height="1" fill="#fff"/>
<rect x="135" y="238" width="7" height="1" fill="#fff"/>
<rect x="135" y="235" width="7" height="1" fill="#fff"/>
<rect x="132" y="233" width="10" height="1" fill="#fff"/>
<rect x="135" y="217" width="7" height="1" fill="#fff"/>
<rect x="135" y="208" width="7" height="1" fill="#fff"/>
<rect x="135" y="201" width="7" height="1" fill="#fff"/>
<rect x="135" y="196" width="7" height="1" fill="#fff"/>
<rect x="135" y="192" width="7" height="1" fill="#fff"/>
<rect x="135" y="188" width="7" height="1" fill="#fff"/>
<rect x="135" y="185" width="7" height="1" fill="#fff"/>
<rect x="135" y="183" width="7" height="1" fill="#fff"/>
<rect x="132" y="180" width="10" height="1" fill="#fff"/>
<rect x="141" y="275" width="567" height="1" fill="#fff"/>
<rect x="142" y="544" width="567" height="1" fill="#fff"/>
<rect x="143" y="387" width="565" height="1" fill="#ff0000"/>
<rect x="143" y="508" width="129" height="1" fill="#ff0000"/>
<rect x="678" y="508" width="30" height="1" fill="#ff0000"/>
<rect x="143" y="634" width="565" height="1" fill="#00ff00"/>
<defs><linearGradient id="g26" x1="0" y1="1" x2="0" y2="0">
<stop offset="0.0" stop-color="#8000ff"/>
<stop offset="0.193" stop-color="#0000ff"/>
<stop offset="0.4" stop-color="#00ffff"/>
<stop offset="0.594" stop-color="#00ff00"/>
<stop offset="0.817" stop-color="#ffff00"/>
<stop offset="0.976" stop-color="#ff0000"/>
<stop offset="1.0" stop-color="#ff0000"/>
</linearGradient></defs>
<rect x="863" y="26" width="21" height="107" fill="url(#g26)"/>
<rect x="863" y="26" width="21" height="1" fill="#fff"/>
<rect x="863" y="132" width="21" height="1" fill="#fff"/>
<rect x="863" y="26" width="1" height="107" fill="#fff"/>
<rect x="883" y="26" width="1" height="107" fill="#fff"/>
<rect x="875" y="26" width="9" height="1" fill="#fff"/>
<rect x="879" y="38" width="5" height="1" fill="#fff"/>
<rect x="879" y="35" width="5" height="1" fill="#fff"/>
<rect x="879" y="33" width="5" height="1" fill="#fff"/>
<rect x="879" y="31" width="5" height="1" fill="#fff"/>
<rect x="879" y="29" width="5" height="1" fill="#fff"/>
<rect x="879" y="28" width="5" height="1" fill="#fff"/>
<rect x="879" y="27" width="5" height="1" fill="#fff"/>
<rect x="879" y="26" width="5" height="1" fill="#fff"/>
<rect x="875" y="43" width="9" height="1" fill="#fff"/>
<rect x="879" y="56" width="5" height="1" fill="#fff"/>
<rect x="879" y="52" width="5" height="1" fill="#fff"/>
<rect x="879" y="50" width="5" height="1" fill="#fff"/>
<rect x="879" y="48" width="5" height="1" fill="#fff"/>
<rect x="879" y="47" width="5" height="1" fill="#fff"/>
<rect x="879" y="46" width="5" height="1" fill="#fff"/>
<rect x="879" y="45" width="5" height="1" fill="#fff"/>
<rect x="879" y="44" width="5" height="1" fill="#fff"/>
<rect x="875" y="61" width="9" height="1" fill="#fff"/>
<rect x="879" y="73" width="5" height="1" fill="#fff"/>
<rect x="879" y="70" width="5" height="1" fill="#fff"/>
<rect x="879" y="68" width="5" height="1" fill="#fff"/>
<rect x="879" y="66" width="5" height="1" fill="#fff"/>
<rect x="879" y="65" width="5" height="1" fill="#fff"/>
<rect x="879" y="64" width="5" height="1" fill="#fff"/>
<rect x="879" y="63" width="5" height="1" fill="#fff"/>
<rect x="879" y="62" width="5" height="1" fill="#fff"/>
<rect x="875" y="79" width="9" height="1" fill="#fff"/>
<rect x="879" y="91" width="5" height="1" fill="#fff"/>
<rect x="879" y="88" width="5" height="1" fill="#fff"/>
<rect x="879" y="86" width="5" height="1" fill="#fff"/>
<rect x="879" y="84" width="5" height="1" fill="#fff"/>
<rect x="879" y="82" width="5" height="1" fill="#fff"/>
<rect x="879" y="81" width="5" height="1" fill="#fff"/>
<rect x="879" y="80" width="5" height="1" fill="#fff"/>
<rect x="879" y="79" width="5" height="1" fill="#fff"/>
<rect x="875" y="96" width="9" height="1" fill="#fff"/>
<rect x="879" y="109" width="5" height="1" fill="#fff"/>
<rect x="879" y="105" width="5" height="1" fill="#fff"/>
<rect x="879" y="103" width="5" height="1" fill="#fff"/>
<rect x="879" y="101" width="5" height="1" fill="#fff"/>
<rect x="879" y="100" width="5" height="1" fill="#fff"/>
<rect x="879" y="99" width="5" height="1" fill="#fff"/>
<rect x="879" y="98" width="5" height="1" fill="#fff"/>
<rect x="879" y="97" width="5" height="1" fill="#fff"/>
<rect x="875" y="114" width="9" height="1" fill="#fff"/>
<rect x="879" y="126" width="5" height="1" fill="#fff"/>
<rect x="879" y="123" width="5" height="1" fill="#fff"/>
<rect x="879" y="121" width="5" height="1" fill="#fff"/>
<rect x="879" y="119" width="5" height="1" fill="#fff"/>
<rect x="879" y="118" width="5" height="1" fill="#fff"/>
<rect x="879" y="117" width="5" height="1" fill="#fff"/>
<rect x="879" y="116" width="5" height="1" fill="#fff"/>
<rect x="879" y="115" width="5" height="1" fill="#fff"/>
<rect x="875" y="132" width="9" height="1" fill="#fff"/>
<defs><linearGradient id="g171" x1="0" y1="1" x2="0" y2="0">
<stop offset="0.0" stop-color="#8000ff"/>
<stop offset="0.193" stop-color="#0000ff"/>
<stop offset="0.4" stop-color="#00ffff"/>
<stop offset="0.594" stop-color="#00ff00"/>
<stop offset="0.817" stop-color="#ffff00"/>
<stop offset="0.976" stop-color="#ff0000"/>
<stop offset="1.0" stop-color="#ff0000"/>
</linearGradient></defs>
<rect x="863" y="171" width="21" height="107" fill="url(#g171)"/>
<rect x="863" y="171" width="21" height="1" fill="#fff"/>
<rect x="863" y="277" width="21" height="1" fill="#fff"/>
<rect x="863" y="171" width="1" height="107" fill="#fff"/>
<rect x="883" y="171" width="1" height="107" fill="#fff"/>
<rect x="875" y="171" width="9" height="1" fill="#fff"/>
<rect x="879" y="208" width="5" height="1" fill="#fff"/>
<rect x="879" y="198" width="5" height="1" fill="#fff"/>
<rect x="879" y="192" width="5" height="1" fill="#fff"/>
<rect x="879" y="186" width="5" height="1" fill="#fff"/>
<rect x="879" y="182" width="5" height="1" fill="#fff"/>
<rect x="879" y="179" width="5" height="1" fill="#fff"/>
<rect x="879" y="176" width="5" height="1" fill="#fff"/>
<rect x="879" y="173" width="5" height="1" fill="#fff"/>
<rect x="875" y="224" width="9" height="1" fill="#fff"/>
<rect x="879" y="261" width="5" height="1" fill="#fff"/>
<rect x="879" y="251" width="5" height="1" fill="#fff"/>
<rect x="879" y="245" width="5" height="1" fill="#fff"/>
<rect x="879" y="239" width="5" height="1" fill="#fff"/>
<rect x="879" y="235" width="5" height="1" fill="#fff"/>
<rect x="879" y="232" width="5" height="1" fill="#fff"/>
<rect x="879" y="229" width="5" height="1" fill="#fff"/>
<rect x="879" y="226" width="5" height="1" fill="#fff"/>
<rect x="875" y="277" width="9" height="1" fill="#fff"/>
</g>
<g font-family='"Liberation Sans", sans-serif'>
<text x="142.5" y="14.0" font-size="15.29" textLength="122.3" lengthAdjust="spacingAndGlyphs" fill="#fff" stroke="#fff" stroke-width="0.2">NPI Vector Data</text>
<text x="142.5" y="159.0" font-size="15.29" textLength="115.9" lengthAdjust="spacingAndGlyphs" fill="#fff" stroke="#fff" stroke-width="0.2">MEx ELS-01 LR</text>
<text x="80.0" y="23.0" font-size="12.57" textLength="48.6" lengthAdjust="spacingAndGlyphs" fill="#fff" stroke="#fff" stroke-width="0.28">3.1e+01</text>
<text x="77.3" y="47.6" font-size="12.57" textLength="51.3" lengthAdjust="spacingAndGlyphs" fill="#fff" stroke="#fff" stroke-width="0.28">2.5e+01</text>
<text x="80.0" y="72.2" font-size="12.57" textLength="48.6" lengthAdjust="spacingAndGlyphs" fill="#fff" stroke="#fff" stroke-width="0.28">1.9e+01</text>
<text x="80.0" y="96.8" font-size="12.57" textLength="48.6" lengthAdjust="spacingAndGlyphs" fill="#fff" stroke="#fff" stroke-width="0.28">1.2e+01</text>
<text x="73.8" y="121.4" font-size="12.57" textLength="54.8" lengthAdjust="spacingAndGlyphs" fill="#fff" stroke="#fff" stroke-width="0.28">6.2e+00</text>
<text x="721.6" y="23.0" font-size="12.57" textLength="15.0" lengthAdjust="spacingAndGlyphs" fill="#fff" stroke="#fff" stroke-width="0.28">90</text>
<text x="721.6" y="47.6" font-size="12.57" textLength="15.0" lengthAdjust="spacingAndGlyphs" fill="#fff" stroke="#fff" stroke-width="0.28">75</text>
<text x="721.6" y="72.2" font-size="12.57" textLength="15.0" lengthAdjust="spacingAndGlyphs" fill="#fff" stroke="#fff" stroke-width="0.28">60</text>
<text x="721.6" y="96.8" font-size="12.57" textLength="15.0" lengthAdjust="spacingAndGlyphs" fill="#fff" stroke="#fff" stroke-width="0.28">45</text>
<text x="721.6" y="121.4" font-size="12.57" textLength="15.0" lengthAdjust="spacingAndGlyphs" fill="#fff" stroke="#fff" stroke-width="0.28">30</text>
<text x="110.6" y="184.6" font-size="13.14" textLength="12.4" lengthAdjust="spacingAndGlyphs" fill="#fff" stroke="#fff" stroke-width="0.28">10</text>
<text x="123.8" y="178.4" font-size="8.86" textLength="4.6" lengthAdjust="spacingAndGlyphs" fill="#fff" stroke="#fff" stroke-width="0.35">2</text>
<text x="110.6" y="237.8" font-size="13.14" textLength="12.4" lengthAdjust="spacingAndGlyphs" fill="#fff" stroke="#fff" stroke-width="0.28">10</text>
<text x="124.6" y="231.6" font-size="8.86" textLength="2.6" lengthAdjust="spacingAndGlyphs" fill="#fff" stroke="#fff" stroke-width="0.35">1</text>
<text x="722.4" y="168.0" font-size="12.57" textLength="19.0" lengthAdjust="spacingAndGlyphs" fill="#fff" stroke="#fff" stroke-width="0.28">190</text>
<text x="722.4" y="192.6" font-size="12.57" textLength="19.0" lengthAdjust="spacingAndGlyphs" fill="#fff" stroke="#fff" stroke-width="0.28">150</text>
<text x="722.4" y="217.2" font-size="12.57" textLength="16.4" lengthAdjust="spacingAndGlyphs" fill="#fff" stroke="#fff" stroke-width="0.28">110</text>
<text x="721.6" y="241.8" font-size="12.57" textLength="15.0" lengthAdjust="spacingAndGlyphs" fill="#fff" stroke="#fff" stroke-width="0.28">70</text>
<text x="721.6" y="266.4" font-size="12.57" textLength="15.0" lengthAdjust="spacingAndGlyphs" fill="#fff" stroke="#fff" stroke-width="0.28">30</text>
<text x="115.0" y="300.0" font-size="12.57" textLength="13.6" lengthAdjust="spacingAndGlyphs" fill="#fff" stroke="#fff" stroke-width="0.28">1.5</text>
<text x="115.6" y="324.4" font-size="12.57" textLength="13.0" lengthAdjust="spacingAndGlyphs" fill="#fff" stroke="#fff" stroke-width="0.28">1.1</text>
<text x="106.6" y="348.8" font-size="12.57" textLength="22.0" lengthAdjust="spacingAndGlyphs" fill="#fff" stroke="#fff" stroke-width="0.28">0.7</text>
<text x="106.6" y="373.2" font-size="12.57" textLength="22.0" lengthAdjust="spacingAndGlyphs" fill="#fff" stroke="#fff" stroke-width="0.28">0.3</text>
<text x="104.2" y="397.6" font-size="12.57" textLength="24.4" lengthAdjust="spacingAndGlyphs" fill="#fff" stroke="#fff" stroke-width="0.28">-0.1</text>
<text x="722.6" y="300.0" font-size="12.57" textLength="15.4" lengthAdjust="spacingAndGlyphs" fill="#fff" stroke="#fff" stroke-width="0.28">1.5</text>
<text x="722.6" y="324.4" font-size="12.57" textLength="12.8" lengthAdjust="spacingAndGlyphs" fill="#fff" stroke="#fff" stroke-width="0.28">1.1</text>
<text x="722.6" y="348.8" font-size="12.57" textLength="19.0" lengthAdjust="spacingAndGlyphs" fill="#fff" stroke="#fff" stroke-width="0.28">0.7</text>
<text x="722.6" y="373.2" font-size="12.57" textLength="19.0" lengthAdjust="spacingAndGlyphs" fill="#fff" stroke="#fff" stroke-width="0.28">0.3</text>
<text x="722.6" y="397.6" font-size="12.57" textLength="25.8" lengthAdjust="spacingAndGlyphs" fill="#fff" stroke="#fff" stroke-width="0.28">-0.1</text>
<text x="89.2" y="433.0" font-size="12.57" textLength="39.4" lengthAdjust="spacingAndGlyphs" fill="#fff" stroke="#fff" stroke-width="0.28">23500</text>
<text x="91.8" y="457.4" font-size="12.57" textLength="36.8" lengthAdjust="spacingAndGlyphs" fill="#fff" stroke="#fff" stroke-width="0.28">18800</text>
<text x="94.8" y="481.8" font-size="12.57" textLength="33.8" lengthAdjust="spacingAndGlyphs" fill="#fff" stroke="#fff" stroke-width="0.28">14100</text>
<text x="97.6" y="506.2" font-size="12.57" textLength="31.0" lengthAdjust="spacingAndGlyphs" fill="#fff" stroke="#fff" stroke-width="0.28">9400</text>
<text x="97.6" y="530.6" font-size="12.57" textLength="31.0" lengthAdjust="spacingAndGlyphs" fill="#fff" stroke="#fff" stroke-width="0.28">4700</text>
<text x="722.4" y="433.0" font-size="12.57" textLength="23.2" lengthAdjust="spacingAndGlyphs" fill="#fff" stroke="#fff" stroke-width="0.28">260</text>
<text x="722.4" y="457.4" font-size="12.57" textLength="23.2" lengthAdjust="spacingAndGlyphs" fill="#fff" stroke="#fff" stroke-width="0.28">206</text>
<text x="722.4" y="481.8" font-size="12.57" textLength="20.0" lengthAdjust="spacingAndGlyphs" fill="#fff" stroke="#fff" stroke-width="0.28">152</text>
<text x="722.4" y="506.2" font-size="12.57" textLength="14.8" lengthAdjust="spacingAndGlyphs" fill="#fff" stroke="#fff" stroke-width="0.28">98</text>
<text x="722.4" y="530.6" font-size="12.57" textLength="14.8" lengthAdjust="spacingAndGlyphs" fill="#fff" stroke="#fff" stroke-width="0.28">44</text>
<text x="104.2" y="565.0" font-size="12.57" textLength="24.4" lengthAdjust="spacingAndGlyphs" fill="#fff" stroke="#fff" stroke-width="0.28">0.15</text>
<text x="104.2" y="589.6" font-size="12.57" textLength="24.4" lengthAdjust="spacingAndGlyphs" fill="#fff" stroke="#fff" stroke-width="0.28">0.10</text>
<text x="100.8" y="614.2" font-size="12.57" textLength="27.8" lengthAdjust="spacingAndGlyphs" fill="#fff" stroke="#fff" stroke-width="0.28">0.05</text>
<text x="100.8" y="638.8" font-size="12.57" textLength="27.8" lengthAdjust="spacingAndGlyphs" fill="#fff" stroke="#fff" stroke-width="0.28">0.00</text>
<text x="92.4" y="663.4" font-size="12.57" textLength="36.2" lengthAdjust="spacingAndGlyphs" fill="#fff" stroke="#fff" stroke-width="0.28">-0.05</text>
<text x="94.2" y="688.0" font-size="12.57" textLength="34.4" lengthAdjust="spacingAndGlyphs" fill="#fff" stroke="#fff" stroke-width="0.28">-0.10</text>
<text x="722.6" y="565.0" font-size="12.57" textLength="24.4" lengthAdjust="spacingAndGlyphs" fill="#fff" stroke="#fff" stroke-width="0.28">0.15</text>
<text x="722.6" y="589.6" font-size="12.57" textLength="24.4" lengthAdjust="spacingAndGlyphs" fill="#fff" stroke="#fff" stroke-width="0.28">0.10</text>
<text x="722.6" y="614.2" font-size="12.57" textLength="27.8" lengthAdjust="spacingAndGlyphs" fill="#fff" stroke="#fff" stroke-width="0.28">0.05</text>
<text x="722.6" y="638.8" font-size="12.57" textLength="27.0" lengthAdjust="spacingAndGlyphs" fill="#fff" stroke="#fff" stroke-width="0.28">0.00</text>
<text x="722.6" y="663.4" font-size="12.57" textLength="37.8" lengthAdjust="spacingAndGlyphs" fill="#fff" stroke="#fff" stroke-width="0.28">-0.05</text>
<text x="722.6" y="688.0" font-size="12.57" textLength="34.8" lengthAdjust="spacingAndGlyphs" fill="#fff" stroke="#fff" stroke-width="0.28">-0.10</text>
<text x="33.2" y="702.0" font-size="16.71" textLength="73.0" lengthAdjust="spacingAndGlyphs" fill="#fff" stroke="#fff" stroke-width="0.2">2018/086</text>
<text x="121.0" y="702.0" font-size="16.71" textLength="43.0" lengthAdjust="spacingAndGlyphs" fill="#fff" stroke="#fff" stroke-width="0.2">00:00</text>
<text x="215.0" y="702.0" font-size="16.71" textLength="43.0" lengthAdjust="spacingAndGlyphs" fill="#fff" stroke="#fff" stroke-width="0.2">00:40</text>
<text x="310.0" y="702.0" font-size="16.71" textLength="43.0" lengthAdjust="spacingAndGlyphs" fill="#fff" stroke="#fff" stroke-width="0.2">01:20</text>
<text x="405.0" y="702.0" font-size="16.71" textLength="43.0" lengthAdjust="spacingAndGlyphs" fill="#fff" stroke="#fff" stroke-width="0.2">02:00</text>
<text x="500.0" y="702.0" font-size="16.71" textLength="43.0" lengthAdjust="spacingAndGlyphs" fill="#fff" stroke="#fff" stroke-width="0.2">02:40</text>
<text x="595.0" y="702.0" font-size="16.71" textLength="43.0" lengthAdjust="spacingAndGlyphs" fill="#fff" stroke="#fff" stroke-width="0.2">03:20</text>
<text x="689.0" y="702.0" font-size="16.71" textLength="43.0" lengthAdjust="spacingAndGlyphs" fill="#fff" stroke="#fff" stroke-width="0.2">04:00</text>
<text transform="translate(40.2,105.0) rotate(-90)" font-size="16.21" textLength="50.0" lengthAdjust="spacingAndGlyphs" fill="#fff" stroke="#fff" stroke-width="0.2">Sector</text>
<text transform="translate(55.2,111.0) rotate(-90)" font-size="15.93" textLength="61.5" lengthAdjust="spacingAndGlyphs" fill="#fff" stroke="#fff" stroke-width="0.2">Unitless</text>
<text transform="translate(71.0,276.0) rotate(-90)" font-size="13.93" textLength="102.2" lengthAdjust="spacingAndGlyphs" fill="#fff" stroke="#fff" stroke-width="0.2">Electron Energy</text>
<text transform="translate(83.6,232.5) rotate(-90)" font-size="11.93" textLength="14.3" lengthAdjust="spacingAndGlyphs" fill="#fff" stroke="#fff" stroke-width="0.28">eV</text>
<text transform="translate(48.2,395.8) rotate(-90)" font-size="13.14" textLength="78.1" lengthAdjust="spacingAndGlyphs" fill="#fff" stroke="#fff" stroke-width="0.28">Sensor Data</text>
<text transform="translate(61.0,416.0) rotate(-90)" font-size="13.14" textLength="118.0" lengthAdjust="spacingAndGlyphs" fill="#fff" stroke="#fff" stroke-width="0.28">MU Scanner +30V</text>
<text transform="translate(73.0,386.9) rotate(-90)" font-size="13.14" textLength="60.3" lengthAdjust="spacingAndGlyphs" fill="#fff" stroke="#fff" stroke-width="0.28">Raw Data</text>
<text transform="translate(85.6,368.5) rotate(-90)" font-size="13.14" textLength="23.1" lengthAdjust="spacingAndGlyphs" fill="#fff" stroke="#fff" stroke-width="0.28">Raw</text>
<text transform="translate(42.1,524.2) rotate(-90)" font-size="11.21" textLength="68.6" lengthAdjust="spacingAndGlyphs" fill="#fff" stroke="#fff" stroke-width="0.28">Sensor Data</text>
<text transform="translate(53.2,544.2) rotate(-90)" font-size="11.21" textLength="108.8" lengthAdjust="spacingAndGlyphs" fill="#fff" stroke="#fff" stroke-width="0.28">Model Scanner Pos</text>
<text transform="translate(64.2,501.0) rotate(-90)" font-size="11.21" textLength="21.7" lengthAdjust="spacingAndGlyphs" fill="#fff" stroke="#fff" stroke-width="0.28">Raw</text>
<text transform="translate(75.2,511.0) rotate(-90)" font-size="11.21" textLength="42.6" lengthAdjust="spacingAndGlyphs" fill="#fff" stroke="#fff" stroke-width="0.28">unitless</text>
<text transform="translate(36.2,665.0) rotate(-90)" font-size="14.36" textLength="84.3" lengthAdjust="spacingAndGlyphs" fill="#fff" stroke="#fff" stroke-width="0.2">Sensor Data</text>
<text transform="translate(49.1,675.2) rotate(-90)" font-size="14.36" textLength="106.0" lengthAdjust="spacingAndGlyphs" fill="#fff" stroke="#fff" stroke-width="0.2">Model Constant</text>
<text transform="translate(62.6,648.0) rotate(-90)" font-size="14.36" textLength="51.0" lengthAdjust="spacingAndGlyphs" fill="#fff" stroke="#fff" stroke-width="0.2">velocity</text>
<text transform="translate(76.1,657.4) rotate(-90)" font-size="14.36" textLength="69.8" lengthAdjust="spacingAndGlyphs" fill="#fff" stroke="#fff" stroke-width="0.2">index/sec</text>
<text transform="translate(783.2,46.3) rotate(90)" font-size="12.50" textLength="68.6" lengthAdjust="spacingAndGlyphs" fill="#fff" stroke="#fff" stroke-width="0.28">Sensor Data</text>
<text transform="translate(771.9,28.8) rotate(90)" font-size="12.50" textLength="103.9" lengthAdjust="spacingAndGlyphs" fill="#fff" stroke="#fff" stroke-width="0.28">ESH Sun Elevation</text>
<text transform="translate(760.7,65.4) rotate(90)" font-size="12.50" textLength="30.4" lengthAdjust="spacingAndGlyphs" fill="#fff" stroke="#fff" stroke-width="0.28">Angle</text>
<text transform="translate(749.8,62.4) rotate(90)" font-size="12.50" textLength="36.8" lengthAdjust="spacingAndGlyphs" fill="#fff" stroke="#fff" stroke-width="0.28">degree</text>
<text transform="translate(801.6,179.8) rotate(90)" font-size="15.79" textLength="91.3" lengthAdjust="spacingAndGlyphs" fill="#fff" stroke="#fff" stroke-width="0.2">Sensor Data</text>
<text transform="translate(786.8,171.0) rotate(90)" font-size="15.79" textLength="110.6" lengthAdjust="spacingAndGlyphs" fill="#fff" stroke="#fff" stroke-width="0.2">Model Scanner</text>
<text transform="translate(773.0,205.4) rotate(90)" font-size="15.79" textLength="39.5" lengthAdjust="spacingAndGlyphs" fill="#fff" stroke="#fff" stroke-width="0.2">Angle</text>
<text transform="translate(758.0,197.2) rotate(90)" font-size="15.79" textLength="56.8" lengthAdjust="spacingAndGlyphs" fill="#fff" stroke="#fff" stroke-width="0.2">degrees</text>
<text transform="translate(802.0,318.0) rotate(90)" font-size="14.21" textLength="78.2" lengthAdjust="spacingAndGlyphs" fill="#ff0000" stroke="#ff0000" stroke-width="0.35">Sensor Data</text>
<text transform="translate(790.0,306.0) rotate(90)" font-size="14.21" textLength="102.6" lengthAdjust="spacingAndGlyphs" fill="#ff0000" stroke="#ff0000" stroke-width="0.35">MU Scanner Init</text>
<text transform="translate(776.9,327.2) rotate(90)" font-size="14.21" textLength="59.7" lengthAdjust="spacingAndGlyphs" fill="#ff0000" stroke="#ff0000" stroke-width="0.35">Raw Data</text>
<text transform="translate(765.0,345.2) rotate(90)" font-size="14.21" textLength="23.3" lengthAdjust="spacingAndGlyphs" fill="#ff0000" stroke="#ff0000" stroke-width="0.35">Raw</text>
<text transform="translate(802.0,448.1) rotate(90)" font-size="14.21" textLength="84.0" lengthAdjust="spacingAndGlyphs" fill="#ff0000" stroke="#ff0000" stroke-width="0.35">Sensor Data</text>
<text transform="translate(789.0,434.0) rotate(90)" font-size="14.21" textLength="112.6" lengthAdjust="spacingAndGlyphs" fill="#ff0000" stroke="#ff0000" stroke-width="0.35">MU Scanner Pos</text>
<text transform="translate(775.1,457.1) rotate(90)" font-size="14.21" textLength="66.1" lengthAdjust="spacingAndGlyphs" fill="#ff0000" stroke="#ff0000" stroke-width="0.35">Telemetry</text>
<text transform="translate(762.0,464.0) rotate(90)" font-size="14.21" textLength="52.3" lengthAdjust="spacingAndGlyphs" fill="#ff0000" stroke="#ff0000" stroke-width="0.35">Unitless</text>
<text transform="translate(814.8,579.9) rotate(90)" font-size="14.36" textLength="84.8" lengthAdjust="spacingAndGlyphs" fill="#00ff00" stroke="#00ff00" stroke-width="0.35">Sensor Data</text>
<text transform="translate(801.7,570.0) rotate(90)" font-size="14.36" textLength="106.0" lengthAdjust="spacingAndGlyphs" fill="#00ff00" stroke="#00ff00" stroke-width="0.35">Model Constant</text>
<text transform="translate(787.4,580.7) rotate(90)" font-size="14.36" textLength="83.7" lengthAdjust="spacingAndGlyphs" fill="#00ff00" stroke="#00ff00" stroke-width="0.35">acceleration</text>
<text transform="translate(774.6,577.0) rotate(90)" font-size="14.36" textLength="91.7" lengthAdjust="spacingAndGlyphs" fill="#00ff00" stroke="#00ff00" stroke-width="0.35">index/sec**2</text>
<text x="868.0" y="23.0" font-size="9.71" textLength="11.6" lengthAdjust="spacingAndGlyphs" fill="#fff" stroke="#fff" stroke-width="0.4">NF</text>
<text x="865.4" y="168.2" font-size="10.00" textLength="18.0" lengthAdjust="spacingAndGlyphs" fill="#fff" stroke="#fff" stroke-width="0.3">DEF</text>
<text x="889.0" y="29.2" font-size="9.43" textLength="7.2" lengthAdjust="spacingAndGlyphs" fill="#fff" stroke="#fff" stroke-width="0.4">10</text>
<text x="896.8" y="25.0" font-size="6.43" textLength="4.4" lengthAdjust="spacingAndGlyphs" fill="#fff" font-weight="bold">12</text>
<text x="889.0" y="46.9" font-size="9.43" textLength="7.2" lengthAdjust="spacingAndGlyphs" fill="#fff" stroke="#fff" stroke-width="0.4">10</text>
<text x="896.8" y="42.7" font-size="6.43" textLength="4.4" lengthAdjust="spacingAndGlyphs" fill="#fff" font-weight="bold">11</text>
<text x="889.0" y="64.5" font-size="9.43" textLength="7.2" lengthAdjust="spacingAndGlyphs" fill="#fff" stroke="#fff" stroke-width="0.4">10</text>
<text x="896.8" y="60.3" font-size="6.43" textLength="4.4" lengthAdjust="spacingAndGlyphs" fill="#fff" font-weight="bold">10</text>
<text x="889.0" y="82.2" font-size="9.43" textLength="7.2" lengthAdjust="spacingAndGlyphs" fill="#fff" stroke="#fff" stroke-width="0.4">10</text>
<text x="896.8" y="78.0" font-size="6.43" textLength="3.6" lengthAdjust="spacingAndGlyphs" fill="#fff" font-weight="bold">9</text>
<text x="889.0" y="99.9" font-size="9.43" textLength="7.2" lengthAdjust="spacingAndGlyphs" fill="#fff" stroke="#fff" stroke-width="0.4">10</text>
<text x="896.8" y="95.7" font-size="6.43" textLength="3.6" lengthAdjust="spacingAndGlyphs" fill="#fff" font-weight="bold">8</text>
<text x="889.0" y="117.6" font-size="9.43" textLength="7.2" lengthAdjust="spacingAndGlyphs" fill="#fff" stroke="#fff" stroke-width="0.4">10</text>
<text x="896.8" y="113.4" font-size="6.43" textLength="3.6" lengthAdjust="spacingAndGlyphs" fill="#fff" font-weight="bold">7</text>
<text x="889.0" y="135.2" font-size="9.43" textLength="7.2" lengthAdjust="spacingAndGlyphs" fill="#fff" stroke="#fff" stroke-width="0.4">10</text>
<text x="896.8" y="131.0" font-size="6.43" textLength="3.6" lengthAdjust="spacingAndGlyphs" fill="#fff" font-weight="bold">6</text>
<text x="889.0" y="174.2" font-size="9.43" textLength="7.2" lengthAdjust="spacingAndGlyphs" fill="#fff" stroke="#fff" stroke-width="0.4">10</text>
<text x="897.0" y="170.1" font-size="6.29" textLength="6.6" lengthAdjust="spacingAndGlyphs" fill="#fff" font-weight="bold">-4</text>
<text x="889.0" y="227.2" font-size="9.43" textLength="7.2" lengthAdjust="spacingAndGlyphs" fill="#fff" stroke="#fff" stroke-width="0.4">10</text>
<text x="897.0" y="223.1" font-size="6.29" textLength="6.6" lengthAdjust="spacingAndGlyphs" fill="#fff" font-weight="bold">-5</text>
<text x="889.0" y="280.2" font-size="9.43" textLength="7.2" lengthAdjust="spacingAndGlyphs" fill="#fff" stroke="#fff" stroke-width="0.4">10</text>
<text x="897.0" y="276.1" font-size="6.29" textLength="6.6" lengthAdjust="spacingAndGlyphs" fill="#fff" font-weight="bold">-6</text>
<text transform="translate(920.0,25.2) rotate(90)" font-size="11.43" textLength="107.6" lengthAdjust="spacingAndGlyphs" fill="#fff" stroke="#fff" stroke-width="0.45">cnts/(cm**2-sr-sec)</text>
<text transform="translate(922.6,160.2) rotate(90)" font-size="11.71" textLength="127.3" lengthAdjust="spacingAndGlyphs" fill="#fff" stroke="#fff" stroke-width="0.45">ergs/(cm**2-sr-sec-eV)</text>
</g>
</svg>
</body></html>
